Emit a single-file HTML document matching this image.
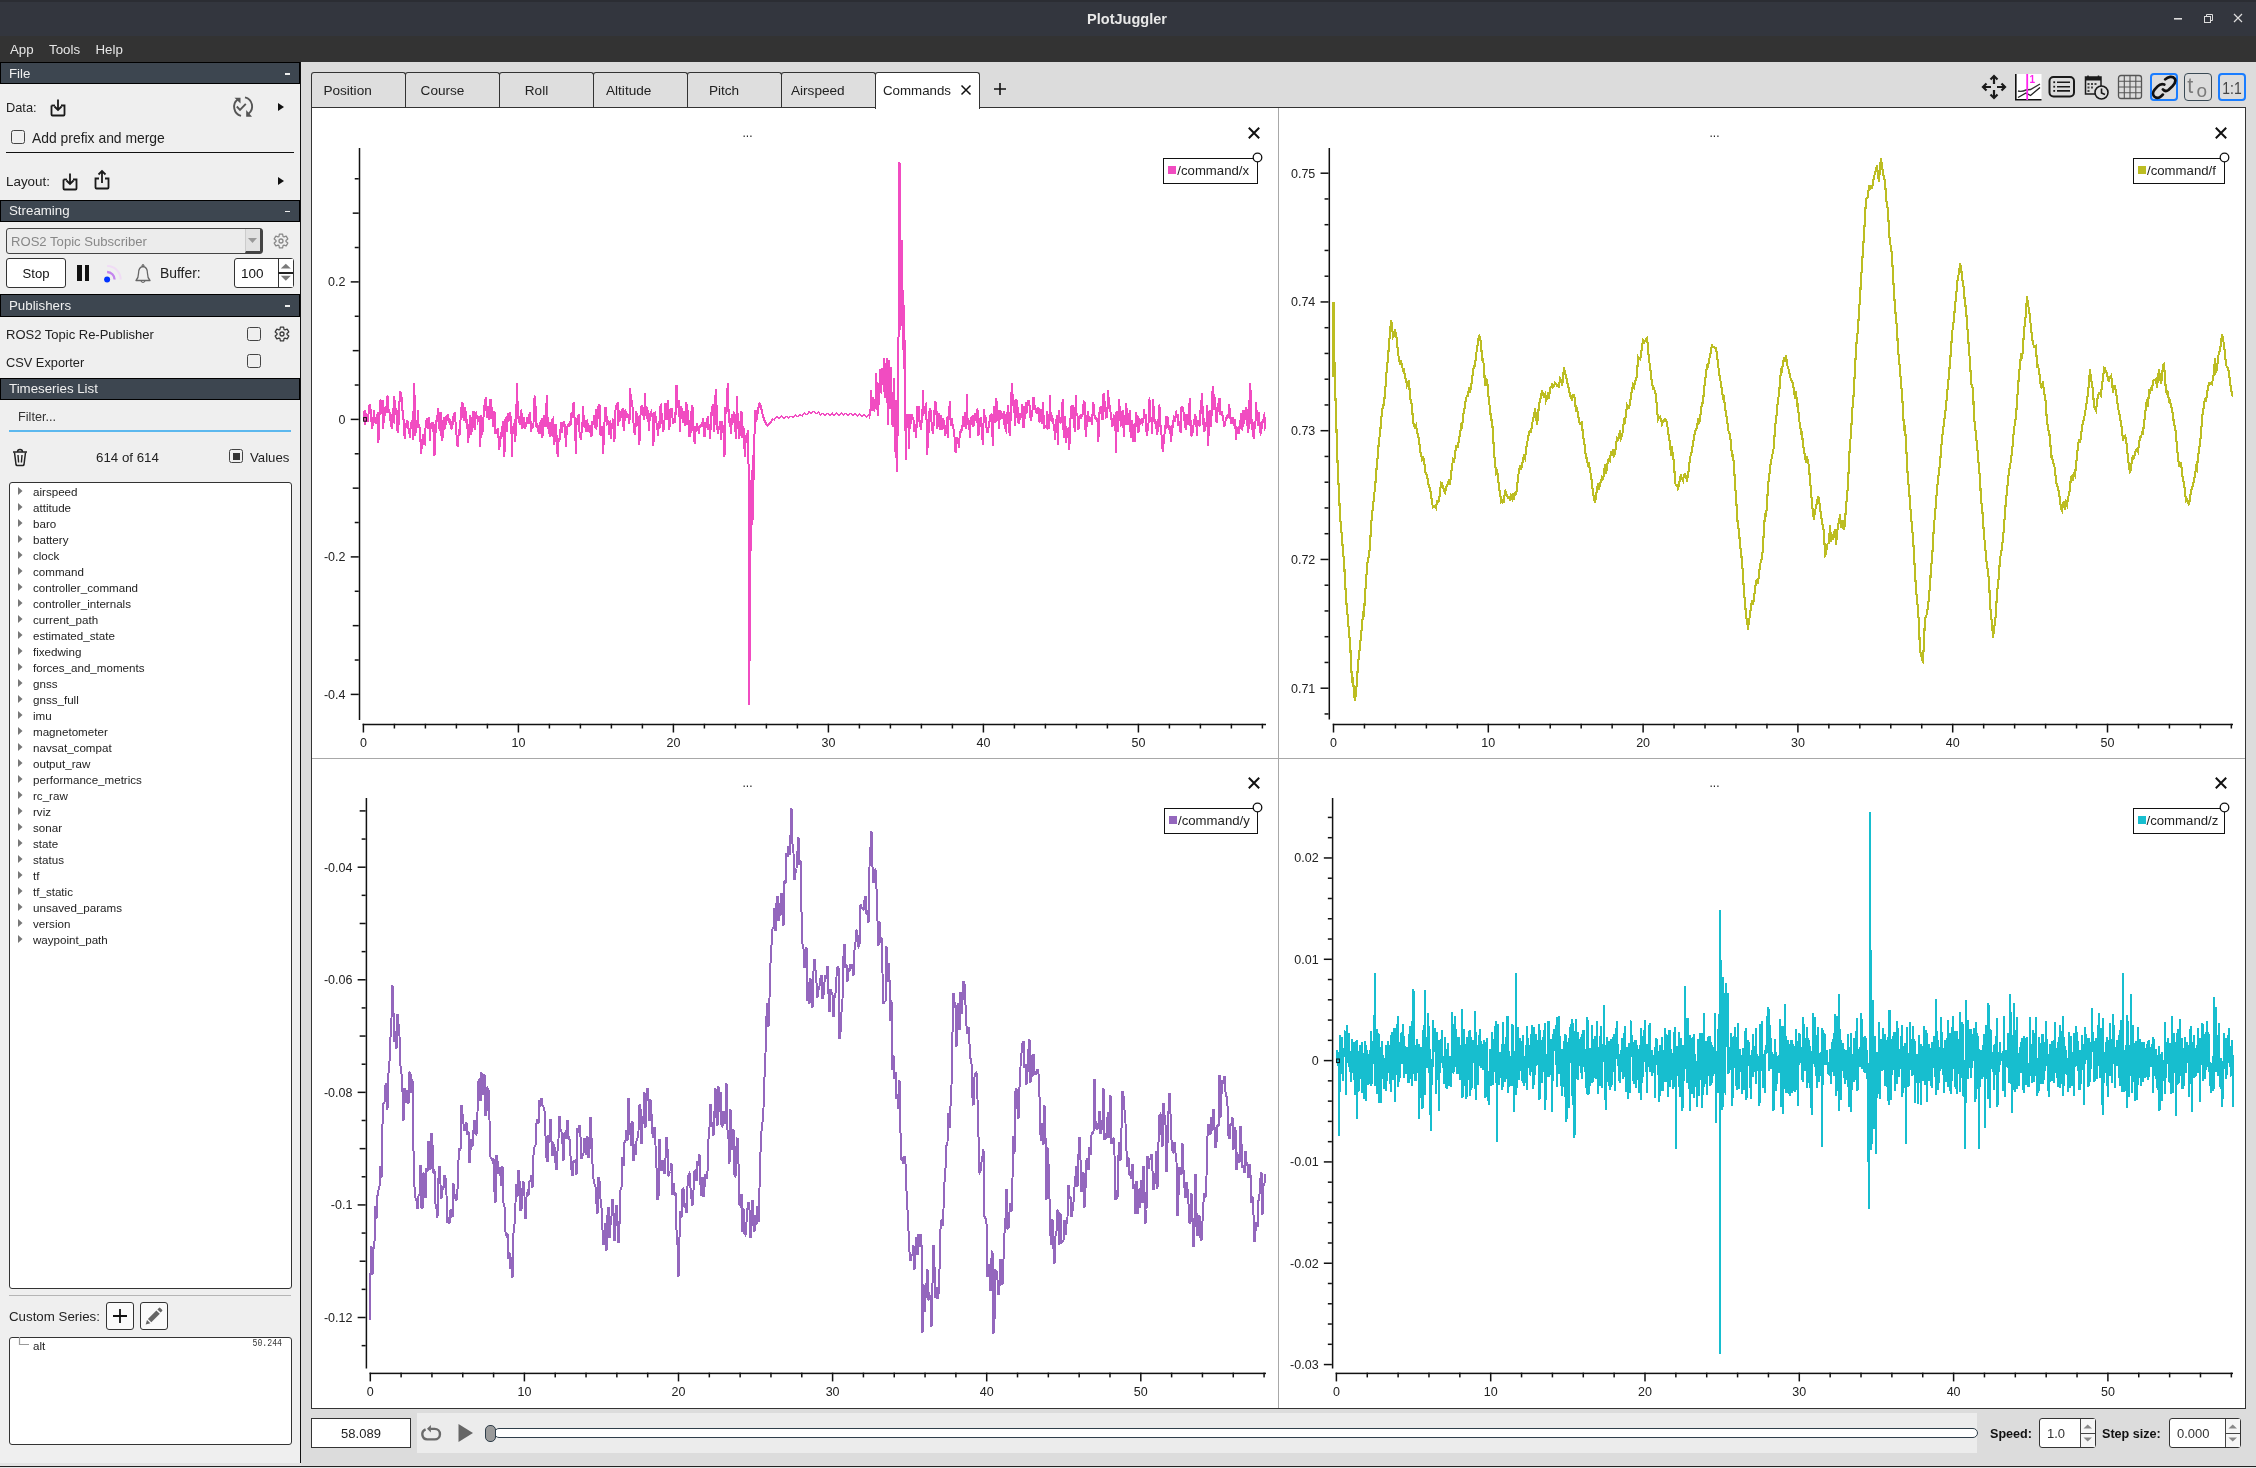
<!DOCTYPE html><html><head><meta charset="utf-8"><style>body{margin:0;width:2256px;height:1468px;overflow:hidden;position:relative;background:#dcdcdc;font-family:"Liberation Sans", sans-serif}div{box-sizing:border-box}</style></head><body><div style="position:absolute;left:0;top:0;width:2256px;height:1468px;overflow:hidden;will-change:transform">
<div style="position:absolute;left:0px;top:0px;width:2256px;height:36px;background:#33363e"></div>
<div style="position:absolute;left:0px;top:0px;width:2256px;height:2px;background:#2b2d33"></div>
<div style="position:absolute;left:827px;width:600px;text-align:center;top:9.92px;line-height:18.12px;font-size:14.5px;color:#e8e8e8;font-weight:700;white-space:pre;">PlotJuggler</div>
<svg style="position:absolute;left:2170px;top:10px;" width="80" height="18" viewBox="0 0 80 18"><rect x="4" y="8" width="8" height="1.6" fill="#ddd"/><rect x="34.5" y="6.5" width="6" height="6" fill="none" stroke="#ddd" stroke-width="1"/><path d="M36.5 6.5 V4.5 H42.5 V10.5 H40.5" fill="none" stroke="#ddd" stroke-width="1"/><path d="M64 4 L72 12 M72 4 L64 12" stroke="#ddd" stroke-width="1.2"/></svg>
<div style="position:absolute;left:0px;top:36px;width:2256px;height:26px;background:#333333"></div>
<div style="position:absolute;left:10px;top:41.58px;line-height:16.62px;font-size:13.3px;color:#e6e6e6;font-weight:400;white-space:pre;">App</div>
<div style="position:absolute;left:49px;top:41.58px;line-height:16.62px;font-size:13.3px;color:#e6e6e6;font-weight:400;white-space:pre;">Tools</div>
<div style="position:absolute;left:95.5px;top:41.58px;line-height:16.62px;font-size:13.3px;color:#e6e6e6;font-weight:400;white-space:pre;">Help</div>
<div style="position:absolute;left:0px;top:62px;width:301px;height:1404px;background:#efefef"></div>
<div style="position:absolute;left:299.8px;top:62px;width:1.4px;height:1401px;background:#111"></div>
<div style="position:absolute;left:0px;top:62px;width:300px;height:22px;background:#3d4650;border:1px solid #000"></div>
<div style="position:absolute;left:9px;top:65.58px;line-height:16.62px;font-size:13.3px;color:#f0f0f0;font-weight:400;white-space:pre;">File</div>
<div style="position:absolute;left:285px;top:73.3px;width:4.5px;height:1.3px;background:#eee"></div>
<div style="position:absolute;left:0px;top:199.5px;width:300px;height:22.5px;background:#3d4650;border:1px solid #000"></div>
<div style="position:absolute;left:9px;top:203.33px;line-height:16.62px;font-size:13.3px;color:#f0f0f0;font-weight:400;white-space:pre;">Streaming</div>
<div style="position:absolute;left:285px;top:211.05px;width:4.5px;height:1.3px;background:#eee"></div>
<div style="position:absolute;left:0px;top:293.5px;width:300px;height:23.0px;background:#3d4650;border:1px solid #000"></div>
<div style="position:absolute;left:9px;top:297.58px;line-height:16.62px;font-size:13.3px;color:#f0f0f0;font-weight:400;white-space:pre;">Publishers</div>
<div style="position:absolute;left:285px;top:305.3px;width:4.5px;height:1.3px;background:#eee"></div>
<div style="position:absolute;left:0px;top:377.5px;width:300px;height:22.5px;background:#3d4650;border:1px solid #000"></div>
<div style="position:absolute;left:9px;top:381.33px;line-height:16.62px;font-size:13.3px;color:#f0f0f0;font-weight:400;white-space:pre;">Timeseries List</div>
<div style="position:absolute;left:6px;top:100.06px;line-height:16.0px;font-size:12.8px;color:#222;font-weight:400;white-space:pre;">Data:</div>
<svg style="position:absolute;left:48px;top:98px;" width="20" height="20" viewBox="0 0 20 20"><path d="M3.5 7.5 V16.5 Q3.5 17.5 4.5 17.5 H15.5 Q16.5 17.5 16.5 16.5 V7.5 H13" fill="none" stroke="#1a1a1a" stroke-width="1.8"/><path d="M7 7.5 H3.5" stroke="#1a1a1a" stroke-width="1.8"/><path d="M10 1.5 V12 M6.5 8.5 L10 12 L13.5 8.5" fill="none" stroke="#1a1a1a" stroke-width="1.8"/></svg>
<svg style="position:absolute;left:231px;top:95px;" width="24" height="24" viewBox="0 0 24 24"><g fill="none" stroke="#555" stroke-width="1.9"><path d="M10 20.8 A9.3 9.3 0 0 1 7 4.3"/><path d="M14 2.3 A9.3 9.3 0 0 1 17.5 18.7"/><path d="M5.8 11.5 L9 14.8 L14.8 8.8"/></g><path d="M3.5 2.8 H9.5 V8.5 Z" fill="#555"/><path d="M15.2 15 V21.8 H21 Z" fill="#555"/></svg>
<svg style="position:absolute;left:278px;top:103px;" width="6" height="8" viewBox="0 0 6 8"><path d="M0 0 L6 4.0 L0 8 Z" fill="#111"/></svg>
<div style="position:absolute;left:11px;top:130px;width:14px;height:14px;border:1.2px solid #444;border-radius:2.5px;background:#efefef"></div>
<div style="position:absolute;left:32px;top:130.49px;line-height:17.38px;font-size:13.9px;color:#222;font-weight:400;white-space:pre;">Add prefix and merge</div>
<div style="position:absolute;left:6px;top:152px;width:288px;height:1.2px;background:#111"></div>
<div style="position:absolute;left:6px;top:173.98px;line-height:16.75px;font-size:13.4px;color:#222;font-weight:400;white-space:pre;">Layout:</div>
<svg style="position:absolute;left:60px;top:172px;" width="20" height="20" viewBox="0 0 20 20"><path d="M3.5 7.5 V16.5 Q3.5 17.5 4.5 17.5 H15.5 Q16.5 17.5 16.5 16.5 V7.5 H13" fill="none" stroke="#1a1a1a" stroke-width="1.8"/><path d="M7 7.5 H3.5" stroke="#1a1a1a" stroke-width="1.8"/><path d="M10 1.5 V12 M6.5 8.5 L10 12 L13.5 8.5" fill="none" stroke="#1a1a1a" stroke-width="1.8"/></svg>
<svg style="position:absolute;left:92px;top:169px;" width="20" height="22" viewBox="0 0 20 22"><path d="M7 9.5 H3.5 V18.5 Q3.5 19.5 4.5 19.5 H15.5 Q16.5 19.5 16.5 18.5 V9.5 H13" fill="none" stroke="#1a1a1a" stroke-width="1.8"/><path d="M10 14 V2 M6.5 5.5 L10 2 L13.5 5.5" fill="none" stroke="#1a1a1a" stroke-width="1.8"/></svg>
<svg style="position:absolute;left:278px;top:177px;" width="6" height="8" viewBox="0 0 6 8"><path d="M0 0 L6 4.0 L0 8 Z" fill="#111"/></svg>
<div style="position:absolute;left:6px;top:228px;width:257px;height:26px;border:1px solid #444;border-radius:3px;background:#ececec"></div>
<div style="position:absolute;left:245px;top:229px;width:17px;height:24px;background:#e2e2e2;border-left:1px solid #ccc;border-right:2px solid #444;border-bottom:2px solid #444"></div>
<svg style="position:absolute;left:248px;top:238px;" width="10" height="6" viewBox="0 0 10 6"><path d="M0 0 H9 L4.5 5 Z" fill="#999"/></svg>
<div style="position:absolute;left:11px;top:234.27px;line-height:16.38px;font-size:13.1px;color:#888;font-weight:400;white-space:pre;">ROS2 Topic Subscriber</div>
<svg style="position:absolute;left:273px;top:233px;" width="16" height="16" viewBox="0 0 16 16"><polygon points="5.97,3.43 6.40,1.08 9.60,1.08 10.03,3.43 10.94,3.95 13.19,3.16 14.79,5.92 12.97,7.48 12.97,8.52 14.79,10.08 13.19,12.84 10.94,12.05 10.03,12.57 9.60,14.92 6.40,14.92 5.97,12.57 5.06,12.05 2.81,12.84 1.21,10.08 3.03,8.52 3.03,7.48 1.21,5.92 2.81,3.16 5.06,3.95" fill="none" stroke="#888" stroke-width="1.25" stroke-linejoin="round"/><circle cx="8" cy="8" r="2.0" fill="none" stroke="#888" stroke-width="1.3"/></svg>
<div style="position:absolute;left:6px;top:258px;width:60px;height:30px;border:1px solid #333;border-radius:3px;background:#fff"></div>
<div style="position:absolute;left:-264px;width:600px;text-align:center;top:265.77px;line-height:16.38px;font-size:13.1px;color:#111;font-weight:400;white-space:pre;">Stop</div>
<div style="position:absolute;left:77px;top:265px;width:4.5px;height:16px;background:#111"></div>
<div style="position:absolute;left:84.5px;top:265px;width:4.5px;height:16px;background:#111"></div>
<svg style="position:absolute;left:100px;top:260px;" width="26" height="26" viewBox="0 0 26 26"><path d="M7.1 6 A13.5 13.5 0 0 1 20.7 19.5" fill="none" stroke="#f0dcf5" stroke-width="2"/><path d="M7.1 12 A7.5 7.5 0 0 1 14.6 19.5" fill="none" stroke="#c484ee" stroke-width="2.3"/><circle cx="7.1" cy="19.5" r="3" fill="#0033ff"/></svg>
<svg style="position:absolute;left:133px;top:261px;" width="20" height="24" viewBox="0 0 20 24"><path d="M3 19.5 Q5.5 17 5.5 12.5 Q5.5 6 10 5.5 Q14.5 6 14.5 12.5 Q14.5 17 17 19.5 Z" fill="none" stroke="#666" stroke-width="1.3" stroke-linejoin="round"/><path d="M8.8 5.3 Q10 2 11.2 5.3" fill="none" stroke="#666" stroke-width="1.1"/><path d="M8 20 Q10 23 12 20" fill="none" stroke="#666" stroke-width="1.2"/></svg>
<div style="position:absolute;left:160px;top:264.99px;line-height:17.38px;font-size:13.9px;color:#222;font-weight:400;white-space:pre;">Buffer:</div>
<div style="position:absolute;left:234px;top:258px;width:60px;height:30px;border:1px solid #333;border-radius:3px;background:#fff"></div>
<div style="position:absolute;left:278px;top:259px;width:15px;height:28px;background:#fff;border-left:1.2px solid #333"></div>
<div style="position:absolute;left:278px;top:272.0px;width:15px;height:2px;background:#222"></div>
<svg style="position:absolute;left:280px;top:262px;" width="12" height="22" viewBox="0 0 12 22"><path d="M0.8 6.6 L5.8 1.8 L10.8 6.6 Z" fill="#7a7a7a"/><path d="M0.8 13.8 L5.8 18.8 L10.8 13.8 Z" fill="#7a7a7a"/></svg>
<div style="position:absolute;left:241px;top:265.88px;line-height:16.88px;font-size:13.5px;color:#111;font-weight:400;white-space:pre;">100</div>
<div style="position:absolute;left:6px;top:327.37px;line-height:16.25px;font-size:13px;color:#222;font-weight:400;white-space:pre;">ROS2 Topic Re-Publisher</div>
<div style="position:absolute;left:247px;top:327px;width:14px;height:14px;border:1.2px solid #444;border-radius:2.5px;background:#efefef"></div>
<svg style="position:absolute;left:274px;top:326px;" width="16" height="16" viewBox="0 0 16 16"><polygon points="5.97,3.43 6.40,1.08 9.60,1.08 10.03,3.43 10.94,3.95 13.19,3.16 14.79,5.92 12.97,7.48 12.97,8.52 14.79,10.08 13.19,12.84 10.94,12.05 10.03,12.57 9.60,14.92 6.40,14.92 5.97,12.57 5.06,12.05 2.81,12.84 1.21,10.08 3.03,8.52 3.03,7.48 1.21,5.92 2.81,3.16 5.06,3.95" fill="none" stroke="#3a3a3a" stroke-width="1.25" stroke-linejoin="round"/><circle cx="8" cy="8" r="2.0" fill="none" stroke="#3a3a3a" stroke-width="1.3"/></svg>
<div style="position:absolute;left:6px;top:354.56px;line-height:16.0px;font-size:12.8px;color:#222;font-weight:400;white-space:pre;">CSV Exporter</div>
<div style="position:absolute;left:247px;top:354px;width:14px;height:14px;border:1.2px solid #444;border-radius:2.5px;background:#efefef"></div>
<div style="position:absolute;left:18px;top:409.66px;line-height:15.88px;font-size:12.7px;color:#333;font-weight:400;white-space:pre;">Filter...</div>
<div style="position:absolute;left:9px;top:429.5px;width:282px;height:2.2px;background:#5cb8ee"></div>
<svg style="position:absolute;left:11px;top:448px;" width="19" height="19" viewBox="0 0 19 19"><path d="M2 4 H16" stroke="#222" stroke-width="1.5"/><path d="M6.5 4 A2.5 2.5 0 0 1 11.5 4" fill="none" stroke="#222" stroke-width="1.4"/><path d="M3.5 4.5 L5 16.5 Q5.2 17.5 6.2 17.5 H11.8 Q12.8 17.5 13 16.5 L14.5 4.5" fill="none" stroke="#222" stroke-width="1.5"/><path d="M7 7 L7.6 14.5 M11 7 L10.4 14.5" stroke="#222" stroke-width="1.4"/></svg>
<div style="position:absolute;left:96px;top:450.08px;line-height:16.62px;font-size:13.3px;color:#222;font-weight:400;white-space:pre;">614 of 614</div>
<div style="position:absolute;left:229px;top:449px;width:14px;height:14px;border:1.2px solid #444;border-radius:2.5px;background:#efefef"></div>
<div style="position:absolute;left:232.5px;top:452.5px;width:7.5px;height:7.5px;background:#333"></div>
<div style="position:absolute;left:250px;top:450.18px;line-height:16.5px;font-size:13.2px;color:#222;font-weight:400;white-space:pre;">Values</div>
<div style="position:absolute;left:9px;top:482px;width:282.5px;height:807px;border:1.5px solid #333;border-radius:3px;background:#fff"></div>
<svg style="position:absolute;left:17.5px;top:487px;" width="5" height="8" viewBox="0 0 5 8"><path d="M0 0 L4.5 4 L0 8 Z" fill="#777"/></svg>
<div style="position:absolute;left:33px;top:484.73px;line-height:14.5px;font-size:11.6px;color:#222;font-weight:400;white-space:pre;">airspeed</div>
<svg style="position:absolute;left:17.5px;top:503px;" width="5" height="8" viewBox="0 0 5 8"><path d="M0 0 L4.5 4 L0 8 Z" fill="#777"/></svg>
<div style="position:absolute;left:33px;top:500.73px;line-height:14.5px;font-size:11.6px;color:#222;font-weight:400;white-space:pre;">attitude</div>
<svg style="position:absolute;left:17.5px;top:519px;" width="5" height="8" viewBox="0 0 5 8"><path d="M0 0 L4.5 4 L0 8 Z" fill="#777"/></svg>
<div style="position:absolute;left:33px;top:516.73px;line-height:14.5px;font-size:11.6px;color:#222;font-weight:400;white-space:pre;">baro</div>
<svg style="position:absolute;left:17.5px;top:535px;" width="5" height="8" viewBox="0 0 5 8"><path d="M0 0 L4.5 4 L0 8 Z" fill="#777"/></svg>
<div style="position:absolute;left:33px;top:532.73px;line-height:14.5px;font-size:11.6px;color:#222;font-weight:400;white-space:pre;">battery</div>
<svg style="position:absolute;left:17.5px;top:551px;" width="5" height="8" viewBox="0 0 5 8"><path d="M0 0 L4.5 4 L0 8 Z" fill="#777"/></svg>
<div style="position:absolute;left:33px;top:548.73px;line-height:14.5px;font-size:11.6px;color:#222;font-weight:400;white-space:pre;">clock</div>
<svg style="position:absolute;left:17.5px;top:567px;" width="5" height="8" viewBox="0 0 5 8"><path d="M0 0 L4.5 4 L0 8 Z" fill="#777"/></svg>
<div style="position:absolute;left:33px;top:564.73px;line-height:14.5px;font-size:11.6px;color:#222;font-weight:400;white-space:pre;">command</div>
<svg style="position:absolute;left:17.5px;top:583px;" width="5" height="8" viewBox="0 0 5 8"><path d="M0 0 L4.5 4 L0 8 Z" fill="#777"/></svg>
<div style="position:absolute;left:33px;top:580.73px;line-height:14.5px;font-size:11.6px;color:#222;font-weight:400;white-space:pre;">controller_command</div>
<svg style="position:absolute;left:17.5px;top:599px;" width="5" height="8" viewBox="0 0 5 8"><path d="M0 0 L4.5 4 L0 8 Z" fill="#777"/></svg>
<div style="position:absolute;left:33px;top:596.73px;line-height:14.5px;font-size:11.6px;color:#222;font-weight:400;white-space:pre;">controller_internals</div>
<svg style="position:absolute;left:17.5px;top:615px;" width="5" height="8" viewBox="0 0 5 8"><path d="M0 0 L4.5 4 L0 8 Z" fill="#777"/></svg>
<div style="position:absolute;left:33px;top:612.73px;line-height:14.5px;font-size:11.6px;color:#222;font-weight:400;white-space:pre;">current_path</div>
<svg style="position:absolute;left:17.5px;top:631px;" width="5" height="8" viewBox="0 0 5 8"><path d="M0 0 L4.5 4 L0 8 Z" fill="#777"/></svg>
<div style="position:absolute;left:33px;top:628.73px;line-height:14.5px;font-size:11.6px;color:#222;font-weight:400;white-space:pre;">estimated_state</div>
<svg style="position:absolute;left:17.5px;top:647px;" width="5" height="8" viewBox="0 0 5 8"><path d="M0 0 L4.5 4 L0 8 Z" fill="#777"/></svg>
<div style="position:absolute;left:33px;top:644.73px;line-height:14.5px;font-size:11.6px;color:#222;font-weight:400;white-space:pre;">fixedwing</div>
<svg style="position:absolute;left:17.5px;top:663px;" width="5" height="8" viewBox="0 0 5 8"><path d="M0 0 L4.5 4 L0 8 Z" fill="#777"/></svg>
<div style="position:absolute;left:33px;top:660.73px;line-height:14.5px;font-size:11.6px;color:#222;font-weight:400;white-space:pre;">forces_and_moments</div>
<svg style="position:absolute;left:17.5px;top:679px;" width="5" height="8" viewBox="0 0 5 8"><path d="M0 0 L4.5 4 L0 8 Z" fill="#777"/></svg>
<div style="position:absolute;left:33px;top:676.73px;line-height:14.5px;font-size:11.6px;color:#222;font-weight:400;white-space:pre;">gnss</div>
<svg style="position:absolute;left:17.5px;top:695px;" width="5" height="8" viewBox="0 0 5 8"><path d="M0 0 L4.5 4 L0 8 Z" fill="#777"/></svg>
<div style="position:absolute;left:33px;top:692.73px;line-height:14.5px;font-size:11.6px;color:#222;font-weight:400;white-space:pre;">gnss_full</div>
<svg style="position:absolute;left:17.5px;top:711px;" width="5" height="8" viewBox="0 0 5 8"><path d="M0 0 L4.5 4 L0 8 Z" fill="#777"/></svg>
<div style="position:absolute;left:33px;top:708.73px;line-height:14.5px;font-size:11.6px;color:#222;font-weight:400;white-space:pre;">imu</div>
<svg style="position:absolute;left:17.5px;top:727px;" width="5" height="8" viewBox="0 0 5 8"><path d="M0 0 L4.5 4 L0 8 Z" fill="#777"/></svg>
<div style="position:absolute;left:33px;top:724.73px;line-height:14.5px;font-size:11.6px;color:#222;font-weight:400;white-space:pre;">magnetometer</div>
<svg style="position:absolute;left:17.5px;top:743px;" width="5" height="8" viewBox="0 0 5 8"><path d="M0 0 L4.5 4 L0 8 Z" fill="#777"/></svg>
<div style="position:absolute;left:33px;top:740.73px;line-height:14.5px;font-size:11.6px;color:#222;font-weight:400;white-space:pre;">navsat_compat</div>
<svg style="position:absolute;left:17.5px;top:759px;" width="5" height="8" viewBox="0 0 5 8"><path d="M0 0 L4.5 4 L0 8 Z" fill="#777"/></svg>
<div style="position:absolute;left:33px;top:756.73px;line-height:14.5px;font-size:11.6px;color:#222;font-weight:400;white-space:pre;">output_raw</div>
<svg style="position:absolute;left:17.5px;top:775px;" width="5" height="8" viewBox="0 0 5 8"><path d="M0 0 L4.5 4 L0 8 Z" fill="#777"/></svg>
<div style="position:absolute;left:33px;top:772.73px;line-height:14.5px;font-size:11.6px;color:#222;font-weight:400;white-space:pre;">performance_metrics</div>
<svg style="position:absolute;left:17.5px;top:791px;" width="5" height="8" viewBox="0 0 5 8"><path d="M0 0 L4.5 4 L0 8 Z" fill="#777"/></svg>
<div style="position:absolute;left:33px;top:788.73px;line-height:14.5px;font-size:11.6px;color:#222;font-weight:400;white-space:pre;">rc_raw</div>
<svg style="position:absolute;left:17.5px;top:807px;" width="5" height="8" viewBox="0 0 5 8"><path d="M0 0 L4.5 4 L0 8 Z" fill="#777"/></svg>
<div style="position:absolute;left:33px;top:804.73px;line-height:14.5px;font-size:11.6px;color:#222;font-weight:400;white-space:pre;">rviz</div>
<svg style="position:absolute;left:17.5px;top:823px;" width="5" height="8" viewBox="0 0 5 8"><path d="M0 0 L4.5 4 L0 8 Z" fill="#777"/></svg>
<div style="position:absolute;left:33px;top:820.73px;line-height:14.5px;font-size:11.6px;color:#222;font-weight:400;white-space:pre;">sonar</div>
<svg style="position:absolute;left:17.5px;top:839px;" width="5" height="8" viewBox="0 0 5 8"><path d="M0 0 L4.5 4 L0 8 Z" fill="#777"/></svg>
<div style="position:absolute;left:33px;top:836.73px;line-height:14.5px;font-size:11.6px;color:#222;font-weight:400;white-space:pre;">state</div>
<svg style="position:absolute;left:17.5px;top:855px;" width="5" height="8" viewBox="0 0 5 8"><path d="M0 0 L4.5 4 L0 8 Z" fill="#777"/></svg>
<div style="position:absolute;left:33px;top:852.73px;line-height:14.5px;font-size:11.6px;color:#222;font-weight:400;white-space:pre;">status</div>
<svg style="position:absolute;left:17.5px;top:871px;" width="5" height="8" viewBox="0 0 5 8"><path d="M0 0 L4.5 4 L0 8 Z" fill="#777"/></svg>
<div style="position:absolute;left:33px;top:868.73px;line-height:14.5px;font-size:11.6px;color:#222;font-weight:400;white-space:pre;">tf</div>
<svg style="position:absolute;left:17.5px;top:887px;" width="5" height="8" viewBox="0 0 5 8"><path d="M0 0 L4.5 4 L0 8 Z" fill="#777"/></svg>
<div style="position:absolute;left:33px;top:884.73px;line-height:14.5px;font-size:11.6px;color:#222;font-weight:400;white-space:pre;">tf_static</div>
<svg style="position:absolute;left:17.5px;top:903px;" width="5" height="8" viewBox="0 0 5 8"><path d="M0 0 L4.5 4 L0 8 Z" fill="#777"/></svg>
<div style="position:absolute;left:33px;top:900.73px;line-height:14.5px;font-size:11.6px;color:#222;font-weight:400;white-space:pre;">unsaved_params</div>
<svg style="position:absolute;left:17.5px;top:919px;" width="5" height="8" viewBox="0 0 5 8"><path d="M0 0 L4.5 4 L0 8 Z" fill="#777"/></svg>
<div style="position:absolute;left:33px;top:916.73px;line-height:14.5px;font-size:11.6px;color:#222;font-weight:400;white-space:pre;">version</div>
<svg style="position:absolute;left:17.5px;top:935px;" width="5" height="8" viewBox="0 0 5 8"><path d="M0 0 L4.5 4 L0 8 Z" fill="#777"/></svg>
<div style="position:absolute;left:33px;top:932.73px;line-height:14.5px;font-size:11.6px;color:#222;font-weight:400;white-space:pre;">waypoint_path</div>
<div style="position:absolute;left:9px;top:1294.5px;width:282px;height:1px;background:#b5b5b5"></div>
<div style="position:absolute;left:9px;top:1309.08px;line-height:16.62px;font-size:13.3px;color:#222;font-weight:400;white-space:pre;">Custom Series:</div>
<div style="position:absolute;left:106px;top:1302px;width:28px;height:28px;border:1px solid #333;border-radius:3px;background:#fafafa"></div>
<svg style="position:absolute;left:106px;top:1302px;" width="28" height="28" viewBox="0 0 28 28"><path d="M14 7 V21 M7 14 H21" stroke="#111" stroke-width="1.8"/></svg>
<div style="position:absolute;left:140px;top:1302px;width:28px;height:28px;border:1px solid #333;border-radius:3px;background:#fafafa"></div>
<svg style="position:absolute;left:140px;top:1302px;" width="28" height="28" viewBox="0 0 28 28"><path d="M5.7 22.6 L7.0 17.9 L10.4 21.3 Z" fill="#666"/><path d="M7.9 16.9 L16.4 8.4 L19.8 11.8 L11.3 20.3 Z" fill="#666"/><path d="M17.4 7.4 L18.9 5.9 Q19.6 5.2 20.3 5.9 L22.1 7.7 Q22.8 8.4 22.1 9.1 L20.6 10.6 Z" fill="#666"/></svg>
<div style="position:absolute;left:9px;top:1336.5px;width:282.5px;height:108px;border:1.5px solid #333;border-radius:3px;background:#fff"></div>
<svg style="position:absolute;left:18px;top:1337px;" width="14" height="9" viewBox="0 0 14 9"><path d="M1.5 0 V7.5 H11" fill="none" stroke="#999" stroke-width="1.2"/></svg>
<div style="position:absolute;left:33px;top:1338.73px;line-height:14.5px;font-size:11.6px;color:#222;font-weight:400;white-space:pre;">alt</div>
<div style="position:absolute;left:222px;top:1336.5px;width:60px;text-align:right;font-family:'Liberation Mono',monospace;font-size:10.5px;color:#3a3a3a;line-height:12px;transform:scaleX(0.78);transform-origin:right center">50.244</div>
<div style="position:absolute;left:0px;top:1463px;width:301px;height:3px;background:#e4e4e4"></div>
<div style="position:absolute;left:0px;top:1465.7px;width:2256px;height:1.5px;background:#222"></div>
<div style="position:absolute;left:0px;top:1467.2px;width:2256px;height:1px;background:#e6e6e6"></div>
<div style="position:absolute;left:311px;top:72px;width:95px;height:36px;background:#dedede;border:1.5px solid #333;border-bottom:none;border-radius:3px 3px 0 0"></div>
<div style="position:absolute;left:323.4px;top:81.79px;line-height:17.0px;font-size:13.6px;color:#222;font-weight:400;white-space:pre;">Position</div>
<div style="position:absolute;left:405px;top:72px;width:95px;height:36px;background:#dedede;border:1.5px solid #333;border-bottom:none;border-radius:3px 3px 0 0"></div>
<div style="position:absolute;left:420.6px;top:81.79px;line-height:17.0px;font-size:13.6px;color:#222;font-weight:400;white-space:pre;">Course</div>
<div style="position:absolute;left:499px;top:72px;width:95px;height:36px;background:#dedede;border:1.5px solid #333;border-bottom:none;border-radius:3px 3px 0 0"></div>
<div style="position:absolute;left:524.8px;top:81.79px;line-height:17.0px;font-size:13.6px;color:#222;font-weight:400;white-space:pre;">Roll</div>
<div style="position:absolute;left:593px;top:72px;width:95px;height:36px;background:#dedede;border:1.5px solid #333;border-bottom:none;border-radius:3px 3px 0 0"></div>
<div style="position:absolute;left:606px;top:81.79px;line-height:17.0px;font-size:13.6px;color:#222;font-weight:400;white-space:pre;">Altitude</div>
<div style="position:absolute;left:687px;top:72px;width:95px;height:36px;background:#dedede;border:1.5px solid #333;border-bottom:none;border-radius:3px 3px 0 0"></div>
<div style="position:absolute;left:708.9px;top:81.79px;line-height:17.0px;font-size:13.6px;color:#222;font-weight:400;white-space:pre;">Pitch</div>
<div style="position:absolute;left:781px;top:72px;width:95px;height:36px;background:#dedede;border:1.5px solid #333;border-bottom:none;border-radius:3px 3px 0 0"></div>
<div style="position:absolute;left:791px;top:81.79px;line-height:17.0px;font-size:13.6px;color:#222;font-weight:400;white-space:pre;">Airspeed</div>
<div style="position:absolute;left:311px;top:107px;width:1935px;height:1302px;border:1.5px solid #333;background:#fff"></div>
<div style="position:absolute;left:875px;top:72px;width:104.5px;height:37px;background:#fff;border:1.5px solid #333;border-bottom:none;border-radius:3px 3px 0 0"></div>
<div style="position:absolute;left:883px;top:83.08px;line-height:16.62px;font-size:13.3px;color:#222;font-weight:400;white-space:pre;">Commands</div>
<svg style="position:absolute;left:960px;top:84px;" width="12" height="12" viewBox="0 0 12 12"><path d="M1.5 1.5 L10.5 10.5 M10.5 1.5 L1.5 10.5" stroke="#111" stroke-width="1.5"/></svg>
<svg style="position:absolute;left:993px;top:82px;" width="14" height="14" viewBox="0 0 14 14"><path d="M7 1 V13 M1 7 H13" stroke="#111" stroke-width="1.6"/></svg>
<div style="position:absolute;left:1278px;top:108px;width:1px;height:1300px;background:#a8a8a8"></div>
<div style="position:absolute;left:312px;top:758px;width:1933px;height:1px;background:#a8a8a8"></div>
<svg style="position:absolute;left:0;top:0" width="2256" height="1468"><rect x="358.75" y="148" width="1.5" height="572" fill="#111"/><rect x="350.75" y="693.65" width="8" height="1.5" fill="#111"/><rect x="354.75" y="659.27" width="4" height="1.5" fill="#111"/><rect x="352.75" y="624.90" width="6" height="1.5" fill="#111"/><rect x="354.75" y="590.52" width="4" height="1.5" fill="#111"/><rect x="350.75" y="556.15" width="8" height="1.5" fill="#111"/><rect x="354.75" y="521.77" width="4" height="1.5" fill="#111"/><rect x="352.75" y="487.40" width="6" height="1.5" fill="#111"/><rect x="354.75" y="453.02" width="4" height="1.5" fill="#111"/><rect x="350.75" y="418.65" width="8" height="1.5" fill="#111"/><rect x="354.75" y="384.27" width="4" height="1.5" fill="#111"/><rect x="352.75" y="349.90" width="6" height="1.5" fill="#111"/><rect x="354.75" y="315.52" width="4" height="1.5" fill="#111"/><rect x="350.75" y="281.15" width="8" height="1.5" fill="#111"/><rect x="354.75" y="246.77" width="4" height="1.5" fill="#111"/><rect x="352.75" y="212.40" width="6" height="1.5" fill="#111"/><rect x="354.75" y="178.02" width="4" height="1.5" fill="#111"/><rect x="362.65" y="723.75" width="903.35" height="1.5" fill="#111"/><rect x="362.65" y="723.75" width="1.5" height="8.75" fill="#111"/><rect x="393.65" y="723.75" width="1.5" height="4.75" fill="#111"/><rect x="424.65" y="723.75" width="1.5" height="4.75" fill="#111"/><rect x="455.65" y="723.75" width="1.5" height="4.75" fill="#111"/><rect x="486.65" y="723.75" width="1.5" height="4.75" fill="#111"/><rect x="517.65" y="723.75" width="1.5" height="8.75" fill="#111"/><rect x="548.65" y="723.75" width="1.5" height="4.75" fill="#111"/><rect x="579.65" y="723.75" width="1.5" height="4.75" fill="#111"/><rect x="610.65" y="723.75" width="1.5" height="4.75" fill="#111"/><rect x="641.65" y="723.75" width="1.5" height="4.75" fill="#111"/><rect x="672.65" y="723.75" width="1.5" height="8.75" fill="#111"/><rect x="703.65" y="723.75" width="1.5" height="4.75" fill="#111"/><rect x="734.65" y="723.75" width="1.5" height="4.75" fill="#111"/><rect x="765.65" y="723.75" width="1.5" height="4.75" fill="#111"/><rect x="796.65" y="723.75" width="1.5" height="4.75" fill="#111"/><rect x="827.65" y="723.75" width="1.5" height="8.75" fill="#111"/><rect x="858.65" y="723.75" width="1.5" height="4.75" fill="#111"/><rect x="889.65" y="723.75" width="1.5" height="4.75" fill="#111"/><rect x="920.65" y="723.75" width="1.5" height="4.75" fill="#111"/><rect x="951.65" y="723.75" width="1.5" height="4.75" fill="#111"/><rect x="982.65" y="723.75" width="1.5" height="8.75" fill="#111"/><rect x="1013.65" y="723.75" width="1.5" height="4.75" fill="#111"/><rect x="1044.65" y="723.75" width="1.5" height="4.75" fill="#111"/><rect x="1075.65" y="723.75" width="1.5" height="4.75" fill="#111"/><rect x="1106.65" y="723.75" width="1.5" height="4.75" fill="#111"/><rect x="1137.65" y="723.75" width="1.5" height="8.75" fill="#111"/><rect x="1168.65" y="723.75" width="1.5" height="4.75" fill="#111"/><rect x="1199.65" y="723.75" width="1.5" height="4.75" fill="#111"/><rect x="1230.65" y="723.75" width="1.5" height="4.75" fill="#111"/><rect x="1261.65" y="723.75" width="1.5" height="4.75" fill="#111"/><polyline points="363.5,420.9 364.1,417.8 364.6,409.6 365.2,424.8 365.7,420.7 366.3,413.1 366.8,419.5 367.4,419.6 367.9,421.4 368.5,414.3 369.0,407.2 369.6,407.7 370.1,404.5 370.7,411.6 371.2,414.7 371.8,428.5 372.3,417.5 372.9,426.3 373.4,420.8 374.0,410.3 374.5,420.7 375.1,419.7 375.6,416.9 376.2,422.7 376.7,423.8 377.3,415.6 377.8,412.3 378.4,443.2 378.9,428.7 379.5,415.6 380.0,401.1 380.6,400.4 381.1,404.4 381.7,413.7 382.2,412.2 382.8,400.5 383.3,428.7 383.9,411.8 384.4,417.1 385.0,409.6 385.5,407.7 386.1,408.5 386.6,413.3 387.2,397.2 387.7,395.6 388.3,411.4 388.8,410.2 389.4,409.8 389.9,421.3 390.5,413.6 391.0,424.2 391.6,423.0 392.1,428.9 392.7,408.2 393.2,420.5 393.8,421.4 394.3,396.3 394.9,407.6 395.4,406.9 396.0,415.0 396.5,409.6 397.1,422.1 397.6,432.7 398.2,426.9 398.7,423.1 399.3,408.3 399.8,392.7 400.4,391.0 400.9,394.9 401.5,396.5 402.0,405.9 402.6,411.6 403.1,410.2 403.7,423.6 404.2,432.6 404.8,438.6 405.3,431.0 405.9,423.6 406.4,425.7 407.0,420.5 407.5,421.8 408.1,421.8 408.6,430.7 409.2,427.8 409.7,438.1 410.3,430.0 410.8,427.5 411.4,422.2 411.9,419.9 412.5,429.1 413.0,439.9 413.6,406.5 414.1,382.8 414.7,399.6 415.2,435.6 415.8,431.0 416.3,423.0 416.9,421.8 417.4,422.5 418.0,410.0 418.5,427.5 419.1,424.1 419.6,427.7 420.2,432.2 420.7,448.1 421.3,453.7 421.8,441.8 422.4,440.0 422.9,434.5 423.5,443.8 424.0,443.5 424.6,444.0 425.1,435.2 425.7,424.8 426.2,422.1 426.8,418.5 427.3,421.0 427.9,424.3 428.4,429.2 429.0,417.0 429.5,427.6 430.1,440.9 430.6,425.1 431.2,423.8 431.7,425.3 432.3,426.8 432.8,432.4 433.4,422.4 433.9,429.6 434.5,455.9 435.0,444.4 435.6,431.6 436.1,424.1 436.7,418.4 437.2,421.9 437.8,408.0 438.3,414.0 438.9,417.1 439.4,428.1 440.0,430.5 440.5,411.6 441.1,426.6 441.6,438.3 442.2,440.6 442.7,436.9 443.3,423.4 443.8,416.7 444.4,430.3 444.9,423.5 445.5,417.1 446.0,424.6 446.6,415.0 447.1,416.3 447.7,414.2 448.2,419.4 448.8,422.8 449.3,417.8 449.9,420.7 450.4,425.0 451.0,421.1 451.5,428.8 452.1,428.2 452.6,423.7 453.2,420.8 453.7,413.2 454.3,414.8 454.8,411.7 455.4,420.8 455.9,425.1 456.5,434.7 457.0,438.0 457.6,446.6 458.1,439.3 458.7,434.2 459.2,430.8 459.8,431.8 460.3,424.5 460.9,411.0 461.4,406.8 462.0,413.0 462.5,402.5 463.1,415.2 463.6,417.9 464.2,421.0 464.7,407.3 465.3,409.7 465.8,412.7 466.4,422.9 466.9,419.3 467.5,429.3 468.0,442.6 468.6,436.7 469.1,432.7 469.7,420.0 470.2,415.6 470.8,417.7 471.3,434.8 471.9,425.3 472.4,422.5 473.0,417.7 473.5,410.9 474.1,416.8 474.6,429.7 475.2,418.1 475.7,413.8 476.3,413.1 476.8,419.3 477.4,417.9 477.9,421.4 478.5,420.1 479.0,419.1 479.6,416.0 480.1,446.7 480.7,414.7 481.2,438.0 481.8,425.6 482.3,435.3 482.9,426.5 483.4,419.8 484.0,407.4 484.5,405.2 485.1,405.8 485.6,397.2 486.2,406.9 486.7,414.0 487.3,417.6 487.8,410.8 488.4,405.7 488.9,413.3 489.5,420.1 490.0,398.8 490.6,409.3 491.1,399.1 491.7,409.8 492.2,411.0 492.8,426.6 493.3,425.4 493.9,423.8 494.4,411.4 495.0,413.7 495.5,433.7 496.1,429.9 496.6,430.6 497.2,431.5 497.7,428.0 498.3,433.9 498.8,443.2 499.4,449.6 499.9,436.2 500.5,438.8 501.0,437.1 501.6,431.4 502.1,436.6 502.7,421.6 503.2,422.7 503.8,440.2 504.3,457.4 504.9,440.8 505.4,420.2 506.0,416.9 506.5,426.7 507.1,432.1 507.6,413.0 508.2,416.5 508.7,420.6 509.3,420.4 509.8,411.8 510.4,413.9 510.9,422.9 511.5,434.4 512.0,456.8 512.6,430.1 513.1,427.6 513.7,426.0 514.2,427.9 514.8,418.7 515.3,441.9 515.9,424.0 516.4,408.8 517.0,383.4 517.5,400.5 518.1,418.6 518.6,416.5 519.2,419.8 519.7,424.6 520.3,422.3 520.8,409.7 521.4,411.1 521.9,418.8 522.5,428.6 523.0,420.7 523.6,422.6 524.1,417.2 524.7,428.6 525.2,423.1 525.8,426.4 526.3,424.9 526.9,416.8 527.4,422.7 528.0,422.0 528.5,422.0 529.1,424.2 529.6,412.2 530.2,419.9 530.7,422.5 531.3,432.3 531.8,425.2 532.4,424.9 532.9,427.8 533.5,423.3 534.0,404.8 534.6,396.6 535.1,397.2 535.7,409.5 536.2,427.4 536.8,426.1 537.3,424.8 537.9,426.2 538.4,431.5 539.0,432.5 539.5,434.2 540.1,422.5 540.6,423.6 541.2,424.9 541.7,418.1 542.3,437.6 542.8,433.3 543.4,427.6 543.9,426.3 544.5,414.6 545.0,424.5 545.6,426.8 546.1,424.7 546.7,394.6 547.2,412.8 547.8,420.4 548.3,428.6 548.9,429.8 549.4,434.2 550.0,422.5 550.5,436.6 551.1,428.7 551.6,424.3 552.2,420.0 552.7,419.2 553.3,436.4 553.8,437.9 554.4,445.0 554.9,432.3 555.5,424.0 556.0,433.6 556.6,435.5 557.1,444.1 557.7,457.4 558.2,440.7 558.8,439.6 559.3,442.0 559.9,436.4 560.4,431.2 561.0,422.1 561.5,433.2 562.1,425.3 562.6,423.7 563.2,422.4 563.7,422.1 564.3,425.5 564.8,424.1 565.4,434.7 565.9,447.3 566.5,435.0 567.0,428.3 567.6,425.4 568.1,424.7 568.7,424.2 569.2,427.3 569.8,420.6 570.3,426.0 570.9,422.6 571.4,413.8 572.0,412.0 572.5,417.8 573.1,410.0 573.6,402.3 574.2,405.7 574.7,423.2 575.3,432.4 575.8,454.0 576.4,426.4 576.9,419.8 577.5,418.7 578.0,420.2 578.6,413.9 579.1,419.3 579.7,437.1 580.2,435.9 580.8,439.6 581.3,435.9 581.9,427.5 582.4,426.4 583.0,406.5 583.5,414.4 584.1,425.3 584.6,424.9 585.2,420.4 585.7,432.3 586.3,423.9 586.8,420.8 587.4,420.6 587.9,431.5 588.5,428.3 589.0,429.3 589.6,425.1 590.1,428.3 590.7,431.4 591.2,436.9 591.8,435.5 592.3,421.2 592.9,423.8 593.4,422.7 594.0,418.5 594.5,414.7 595.1,427.6 595.6,428.1 596.2,408.6 596.7,426.4 597.3,425.0 597.8,410.7 598.4,406.8 598.9,407.0 599.5,404.2 600.0,427.9 600.6,435.9 601.1,430.2 601.7,431.5 602.2,425.9 602.8,429.2 603.3,454.3 603.9,427.7 604.4,423.4 605.0,415.7 605.5,406.9 606.1,412.4 606.6,416.5 607.2,422.9 607.7,421.8 608.3,421.2 608.8,427.5 609.4,434.5 609.9,420.7 610.5,422.7 611.0,438.6 611.6,426.5 612.1,423.2 612.7,428.5 613.2,420.1 613.8,420.8 614.3,441.6 614.9,434.7 615.4,411.6 616.0,405.2 616.5,408.3 617.1,409.8 617.6,402.0 618.2,425.6 618.7,420.3 619.3,410.1 619.8,421.2 620.4,416.3 620.9,413.1 621.5,413.7 622.0,417.4 622.6,407.9 623.1,416.8 623.7,431.2 624.2,417.3 624.8,418.3 625.3,409.6 625.9,413.1 626.4,414.0 627.0,414.1 627.5,417.5 628.1,415.7 628.6,417.1 629.2,424.2 629.7,418.2 630.3,388.0 630.8,402.2 631.4,398.5 631.9,404.0 632.5,406.4 633.0,415.8 633.6,423.8 634.1,428.1 634.7,435.4 635.2,431.0 635.8,422.7 636.3,411.2 636.9,416.3 637.4,423.9 638.0,426.0 638.5,416.0 639.1,444.8 639.6,440.5 640.2,430.1 640.7,406.5 641.3,410.2 641.8,407.7 642.4,405.0 642.9,415.0 643.5,415.5 644.0,419.7 644.6,409.4 645.1,393.5 645.7,412.0 646.2,412.8 646.8,418.6 647.3,407.4 647.9,415.4 648.4,420.2 649.0,431.3 649.5,421.1 650.1,414.7 650.6,412.7 651.2,411.6 651.7,417.3 652.3,414.3 652.8,414.0 653.4,446.1 653.9,429.0 654.5,418.9 655.0,411.6 655.6,417.4 656.1,415.9 656.7,426.1 657.2,424.1 657.8,436.1 658.3,425.5 658.9,421.0 659.4,428.5 660.0,426.9 660.5,405.9 661.1,405.1 661.6,414.6 662.2,416.0 662.7,428.1 663.3,432.1 663.8,428.1 664.4,425.0 664.9,402.6 665.5,408.9 666.0,413.5 666.6,419.8 667.1,407.8 667.7,400.3 668.2,405.8 668.8,412.9 669.3,429.8 669.9,420.7 670.4,419.1 671.0,411.0 671.5,408.1 672.1,415.7 672.6,418.5 673.2,423.9 673.7,417.8 674.3,420.0 674.8,422.6 675.4,412.0 675.9,414.8 676.5,385.1 677.0,397.6 677.6,402.8 678.1,405.8 678.7,404.6 679.2,400.5 679.8,432.2 680.3,425.1 680.9,406.1 681.4,409.0 682.0,407.7 682.5,418.4 683.1,423.2 683.6,416.5 684.2,410.9 684.7,426.4 685.3,414.5 685.8,414.1 686.4,402.1 686.9,410.4 687.5,425.1 688.0,409.7 688.6,422.0 689.1,437.0 689.7,431.0 690.2,436.6 690.8,428.7 691.3,411.0 691.9,413.1 692.4,404.9 693.0,415.2 693.5,430.7 694.1,429.7 694.6,444.4 695.2,425.7 695.7,431.8 696.3,430.6 696.8,422.9 697.4,430.9 697.9,426.1 698.5,427.9 699.0,434.0 699.6,424.7 700.1,427.2 700.7,426.8 701.2,425.4 701.8,422.5 702.3,424.8 702.9,417.7 703.4,426.5 704.0,424.8 704.5,437.4 705.1,422.2 705.6,425.9 706.2,426.3 706.7,423.6 707.3,420.6 707.8,415.8 708.4,429.9 708.9,427.8 709.5,424.2 710.0,438.5 710.6,429.2 711.1,417.2 711.7,410.3 712.2,407.6 712.8,404.2 713.3,407.2 713.9,431.6 714.4,427.2 715.0,415.1 715.5,394.9 716.1,388.6 716.6,408.1 717.2,424.1 717.7,434.0 718.3,429.3 718.8,426.6 719.4,429.6 719.9,425.0 720.5,420.8 721.0,439.9 721.6,426.6 722.1,421.4 722.7,426.6 723.2,426.7 723.8,438.5 724.3,457.4 724.9,449.8 725.4,406.6 726.0,410.9 726.5,412.0 727.1,410.9 727.6,382.9 728.2,398.8 728.7,415.1 729.3,422.5 729.8,418.6 730.4,424.5 730.9,434.2 731.5,422.1 732.0,413.6 732.6,422.7 733.1,421.8 733.7,418.5 734.2,413.7 734.8,414.7 735.3,428.3 735.9,438.5 736.4,429.8 737.0,395.9 737.5,412.9 738.1,417.2 738.6,431.3 739.2,439.4 739.7,434.0 740.3,426.8 740.8,413.3 741.4,410.8 741.9,416.0 742.5,438.0 743.0,434.2 743.6,428.5 744.1,429.4 744.7,457.4 745.2,444.7 745.8,442.2 746.3,436.0 746.9,433.6 747.4,442.5 748.0,430.0 748.6,470.0 749.0,560.0 749.4,705.0 749.8,560.0 750.2,480.0 750.6,551.0 751.0,500.0 751.4,540.0 751.8,492.0 752.2,470.0 752.6,520.0 753.0,455.0 753.6,480.0 754.2,440.0 754.8,428.0 755.5,410.0 756.2,422.2 756.8,418.7 757.3,415.2 757.9,411.6 758.4,408.2 759.0,405.2 759.5,403.6 760.1,404.0 760.6,405.7 761.2,408.0 761.7,410.3 762.3,412.6 762.8,414.9 763.4,417.1 763.9,419.1 764.5,420.6 765.0,421.8 765.6,422.9 766.1,423.9 766.7,424.8 767.2,425.5 767.8,425.6 768.3,425.3 768.9,424.6 769.4,423.8 770.0,423.1 770.5,422.3 771.1,421.5 771.6,420.8 772.2,420.1 772.7,419.5 773.3,419.7" fill="none" stroke="#f14cc1" stroke-width="2" stroke-linejoin="miter" shape-rendering="crispEdges"/><polyline points="772.7,419.5 773.3,419.7 773.8,419.8 774.4,419.9 774.9,419.1 775.5,418.3 776.0,417.4 776.6,416.6 777.1,416.4 777.7,417.1 778.2,417.6 778.8,418.2 779.3,418.2 779.9,417.9 780.4,417.3 781.0,416.8 781.5,416.0 782.1,416.6 782.6,417.2 783.2,417.8 783.7,418.1 784.3,417.9 784.8,417.3 785.4,416.7 785.9,416.4 786.5,416.5 787.0,416.9 787.6,417.4 788.1,418.0 788.7,418.0 789.2,417.4 789.8,416.8 790.3,416.4 790.9,416.1 791.4,416.4 792.0,416.8 792.5,417.1 793.1,417.5 793.6,416.9 794.2,416.4 794.7,415.8 795.3,415.0 795.8,415.5 796.4,415.9 796.9,416.5 797.5,416.6 798.0,416.5 798.6,415.9 799.1,415.2 799.7,414.9 800.2,414.4 800.8,415.0 801.3,415.4 801.9,415.7 802.4,415.9 803.0,414.9 803.5,414.3 804.1,413.8 804.6,412.9 805.2,413.6 805.7,413.9 806.3,414.2 806.8,414.7 807.4,413.9 807.9,413.2 808.5,412.7 809.0,411.6 809.6,412.0 810.1,412.4 810.7,412.8 811.2,413.3 811.8,413.0 812.3,412.4 812.9,411.8 813.4,411.3 814.0,411.4 814.5,412.1 815.1,412.8 815.6,413.3 816.2,413.7 816.7,413.3 817.3,412.9 817.8,412.6 818.4,412.1 818.9,412.8 819.5,413.4 820.0,414.0 820.6,415.0 821.1,414.3 821.7,413.9 822.2,413.6 822.8,413.3 823.3,413.5 823.9,414.0 824.4,414.7 825.0,415.4 825.5,415.3 826.1,414.8 826.6,414.2 827.2,413.6 827.7,413.6 828.3,414.0 828.8,414.5 829.4,414.9 829.9,415.4 830.5,414.9 831.0,414.3 831.6,413.9 832.1,413.1 832.7,413.8 833.2,414.3 833.8,414.9 834.3,415.3 834.9,415.1 835.4,414.4 836.0,413.9 836.5,413.2 837.1,413.4 837.6,414.0 838.2,414.5 838.7,414.9 839.3,415.1 839.8,414.4 840.4,414.0 840.9,413.3 841.5,413.1 842.0,413.7 842.6,414.2 843.1,414.7 843.7,415.1 844.2,414.6 844.8,414.0 845.3,413.4 845.9,413.2 846.4,413.6 847.0,414.1 847.5,414.7 848.1,415.4 848.6,415.0 849.2,414.5 849.7,414.0 850.3,413.8 850.8,413.6 851.4,414.3 851.9,414.8 852.5,415.5 853.0,415.7 853.6,415.1 854.1,414.7 854.7,414.0 855.2,413.8 855.8,414.5 856.3,415.0 856.9,415.7 857.4,416.5 858.0,415.8 858.5,415.2 859.1,414.8 859.6,414.2 860.2,414.8 860.7,415.2 861.3,415.7 861.8,416.3 862.4,416.1 862.9,415.7 863.5,415.4 864.0,414.9 864.6,414.7 865.1,415.4 865.7,416.0 866.2,416.5 866.8,416.9 867.3,416.4 867.9,415.9 868.4,415.4" fill="none" stroke="#f14cc1" stroke-width="1.4" stroke-linejoin="miter" shape-rendering="crispEdges"/><polyline points="867.9,415.9 868.4,415.4 869.0,414.8 869.5,416.3 870.1,413.1 870.6,408.8 871.2,390.2 871.7,404.4 872.3,411.1 872.8,397.3 873.4,405.8 873.9,411.3 874.5,409.3 875.0,400.1 875.6,399.7 876.1,372.9 876.7,386.5 877.2,403.1 877.8,416.2 878.3,391.1 878.9,404.8 879.4,386.5 880.0,369.5 880.5,392.2 881.1,392.4 881.6,369.1 882.2,369.1 882.7,384.5 883.3,374.4 883.8,391.9 884.4,358.5 884.9,397.6 885.5,372.3 886.0,390.6 886.6,357.8 887.1,402.9 887.7,391.1 888.2,425.2 888.8,361.3 889.3,359.9 889.9,404.5 890.4,409.3 891.0,367.0 891.5,407.8 892.1,416.8 892.6,426.8 893.2,408.6 893.7,383.1 894.3,378.0 894.8,451.8 895.4,424.7 895.8,400.0 896.4,455.0 897.0,472.0 897.6,430.0 898.2,380.0 898.8,300.0 899.3,162.0 899.8,165.0 900.4,330.0 901.0,290.0 901.6,240.0 902.2,300.0 902.8,350.0 903.4,290.0 904.0,369.0 904.6,340.0 905.2,400.0 905.8,460.0 906.4,430.0 907.5,413.6 908.0,426.1 908.6,419.2 909.1,449.1 909.7,414.2 910.2,428.5 910.8,420.7 911.3,415.7 911.9,415.4 912.4,419.5 913.0,416.7 913.5,419.9 914.1,431.6 914.6,425.3 915.2,423.8 915.7,429.4 916.3,438.2 916.8,414.7 917.4,406.2 917.9,410.4 918.5,406.0 919.0,416.8 919.6,422.8 920.1,420.2 920.7,429.8 921.2,428.5 921.8,418.4 922.3,421.0 922.9,389.7 923.4,414.3 924.0,413.4 924.5,412.8 925.1,411.4 925.6,404.5 926.2,403.9 926.7,428.5 927.3,454.9 927.8,437.6 928.4,436.9 928.9,422.0 929.5,411.6 930.0,410.0 930.6,412.4 931.1,410.5 931.7,427.9 932.2,430.4 932.8,423.0 933.3,433.8 933.9,410.0 934.4,417.8 935.0,402.7 935.5,401.6 936.1,412.5 936.6,411.2 937.2,428.5 937.7,426.2 938.3,423.6 938.8,417.1 939.4,412.8 939.9,429.5 940.5,424.9 941.0,415.2 941.6,427.3 942.1,429.6 942.7,421.5 943.2,417.9 943.8,421.3 944.3,425.3 944.9,435.8 945.4,433.4 946.0,424.8 946.5,426.2 947.1,417.4 947.6,438.0 948.2,434.4 948.7,405.9 949.3,409.7 949.8,400.9 950.4,418.5 950.9,424.8 951.5,424.8 952.0,417.7 952.6,426.5 953.1,426.0 953.7,430.9 954.2,434.3 954.8,439.0 955.3,451.7 955.9,453.2 956.4,442.4 957.0,436.9 957.5,443.6 958.1,439.1 958.6,443.7 959.2,447.6 959.7,432.4 960.3,432.0 960.8,431.0 961.4,432.6 961.9,427.4 962.5,425.0 963.0,416.1 963.6,427.0 964.1,424.2 964.7,412.4 965.2,421.1 965.8,429.3 966.3,426.8 966.9,394.0 967.4,416.9 968.0,420.7 968.5,424.4 969.1,420.4 969.6,432.3 970.2,437.9 970.7,418.1 971.3,417.9 971.8,416.8 972.4,416.5 972.9,425.7 973.5,425.4 974.0,424.2 974.6,413.3 975.1,420.0 975.7,417.5 976.2,419.9 976.8,422.4 977.3,408.6 977.9,412.8 978.4,435.7 979.0,432.1 979.5,425.3 980.1,425.8 980.6,417.0 981.2,425.3 981.7,426.1 982.3,437.0 982.8,444.5 983.4,427.8 983.9,408.8 984.5,415.8 985.0,420.8 985.6,417.0 986.1,418.0 986.7,432.9 987.2,428.6 987.8,433.0 988.3,428.1 988.9,426.5 989.4,423.0 990.0,415.3 990.5,418.3 991.1,415.5 991.6,414.6 992.2,420.3 992.7,446.0 993.3,423.2 993.8,407.6 994.4,406.3 994.9,417.2 995.5,423.4 996.0,398.3 996.6,401.5 997.1,419.4 997.7,409.8 998.2,412.7 998.8,428.5 999.3,420.6 999.9,418.8 1000.4,410.0 1001.0,416.2 1001.5,416.4 1002.1,419.2 1002.6,414.1 1003.2,416.2 1003.7,411.4 1004.3,424.7 1004.8,414.4 1005.4,428.9 1005.9,430.0 1006.5,424.4 1007.0,418.5 1007.6,411.1 1008.1,405.1 1008.7,415.2 1009.2,430.3 1009.8,435.4 1010.3,431.9 1010.9,400.8 1011.4,394.4 1012.0,383.1 1012.5,393.8 1013.1,406.4 1013.6,399.7 1014.2,411.1 1014.7,414.1 1015.3,425.6 1015.8,408.7 1016.4,399.2 1016.9,402.7 1017.5,407.0 1018.0,415.3 1018.6,424.2 1019.1,415.3 1019.7,412.7 1020.2,419.8 1020.8,416.9 1021.3,414.1 1021.9,412.6 1022.4,404.2 1023.0,415.7 1023.5,427.8 1024.1,423.2 1024.6,418.5 1025.2,412.9 1025.7,401.6 1026.3,413.7 1026.8,411.6 1027.4,407.1 1027.9,400.8 1028.5,400.6 1029.0,400.6 1029.6,406.1 1030.1,409.3 1030.7,421.0 1031.2,415.0 1031.8,411.1 1032.3,416.6 1032.9,397.2 1033.4,406.0 1034.0,397.4 1034.5,410.0 1035.1,404.9 1035.6,408.6 1036.2,410.9 1036.7,413.4 1037.3,408.3 1037.8,412.1 1038.4,407.6 1038.9,409.6 1039.5,421.2 1040.0,420.5 1040.6,420.2 1041.1,409.1 1041.7,423.7 1042.2,417.7 1042.8,402.2 1043.3,407.7 1043.9,427.5 1044.4,429.1 1045.0,424.8 1045.5,427.0 1046.1,426.8 1046.6,427.5 1047.2,411.5 1047.7,415.1 1048.3,428.3 1048.8,428.2 1049.4,426.4 1049.9,395.4 1050.5,411.4 1051.0,420.6 1051.6,417.5 1052.1,421.9 1052.7,418.4 1053.2,419.8 1053.8,428.0 1054.3,425.3 1054.9,440.2 1055.4,436.9 1056.0,419.4 1056.5,423.8 1057.1,416.1 1057.6,414.9 1058.2,445.3 1058.7,410.2 1059.3,416.0 1059.8,419.8 1060.4,419.1 1060.9,418.4 1061.5,423.4 1062.0,417.2 1062.6,399.4 1063.1,412.6 1063.7,437.8 1064.2,423.9 1064.8,418.2 1065.3,416.6 1065.9,443.0 1066.4,433.3 1067.0,430.0 1067.5,437.6 1068.1,429.1 1068.6,427.4 1069.2,450.0 1069.7,440.9 1070.3,418.8 1070.8,417.7 1071.4,406.2 1071.9,419.3 1072.5,404.9 1073.0,411.7 1073.6,406.6 1074.1,418.5 1074.7,431.9 1075.2,421.7 1075.8,394.8 1076.3,412.6 1076.9,414.1 1077.4,413.0 1078.0,429.0 1078.5,428.8 1079.1,426.5 1079.6,414.8 1080.2,416.4 1080.7,419.1 1081.3,414.9 1081.8,417.3 1082.4,413.9 1082.9,415.4 1083.5,404.1 1084.0,401.9 1084.6,402.4 1085.1,412.7 1085.7,437.1 1086.2,432.2 1086.8,422.8 1087.3,416.5 1087.9,411.4 1088.4,415.2 1089.0,420.8 1089.5,420.5 1090.1,417.1 1090.6,420.4 1091.2,417.2 1091.7,424.5 1092.3,414.9 1092.8,415.1 1093.4,402.3 1093.9,407.8 1094.5,415.0 1095.0,416.2 1095.6,419.9 1096.1,418.4 1096.7,418.7 1097.2,419.7 1097.8,424.1 1098.3,441.8 1098.9,428.2 1099.4,411.8 1100.0,413.3 1100.5,407.6 1101.1,405.8 1101.6,416.1 1102.2,419.2 1102.7,420.2 1103.3,396.0 1103.8,392.7 1104.4,400.0 1104.9,405.5 1105.5,412.1 1106.0,417.5 1106.6,417.0 1107.1,412.1 1107.7,404.5 1108.2,390.3 1108.8,403.7 1109.3,408.9 1109.9,405.4 1110.4,410.9 1111.0,418.5 1111.5,418.5 1112.1,426.8 1112.6,425.4 1113.2,422.1 1113.7,415.4 1114.3,415.9 1114.8,426.4 1115.4,424.4 1115.9,452.9 1116.5,412.1 1117.0,410.8 1117.6,429.1 1118.1,431.8 1118.7,416.4 1119.2,399.4 1119.8,411.4 1120.3,412.6 1120.9,424.8 1121.4,424.1 1122.0,410.7 1122.5,415.6 1123.1,410.5 1123.6,431.9 1124.2,436.9 1124.7,417.0 1125.3,425.0 1125.8,402.6 1126.4,411.9 1126.9,408.3 1127.5,424.9 1128.0,422.7 1128.6,425.2 1129.1,418.1 1129.7,410.5 1130.2,427.9 1130.8,435.2 1131.3,437.7 1131.9,428.2 1132.4,419.7 1133.0,442.2 1133.5,431.3 1134.1,425.3 1134.6,424.6 1135.2,442.0 1135.7,417.8 1136.3,412.3 1136.8,425.9 1137.4,415.0 1137.9,419.9 1138.5,432.6 1139.0,418.9 1139.6,420.0 1140.1,425.3 1140.7,422.4 1141.2,420.3 1141.8,421.7 1142.3,423.2 1142.9,421.4 1143.4,420.0 1144.0,409.1 1144.5,416.4 1145.1,419.2 1145.6,413.7 1146.2,424.7 1146.7,436.1 1147.3,429.2 1147.8,429.2 1148.4,429.8 1148.9,400.4 1149.5,399.3 1150.0,412.9 1150.6,417.8 1151.1,419.6 1151.7,423.2 1152.2,433.7 1152.8,403.2 1153.3,399.2 1153.9,418.5 1154.4,422.3 1155.0,419.5 1155.5,424.2 1156.1,421.4 1156.6,430.1 1157.2,435.3 1157.7,430.1 1158.3,427.8 1158.8,406.3 1159.4,405.5 1159.9,412.8 1160.5,426.7 1161.0,425.2 1161.6,436.3 1162.1,443.6 1162.7,451.0 1163.2,451.2 1163.8,436.2 1164.3,438.5 1164.9,425.0 1165.4,431.0 1166.0,422.5 1166.5,415.7 1167.1,419.5 1167.6,417.0 1168.2,426.8 1168.7,427.9 1169.3,426.2 1169.8,426.9 1170.4,431.2 1170.9,442.4 1171.5,432.8 1172.0,436.1 1172.6,423.9 1173.1,428.1 1173.7,416.8 1174.2,417.3 1174.8,417.6 1175.3,422.2 1175.9,410.6 1176.4,414.4 1177.0,417.0 1177.5,414.0 1178.1,422.6 1178.6,426.1 1179.2,422.6 1179.7,423.1 1180.3,430.3 1180.8,433.3 1181.4,407.4 1181.9,407.3 1182.5,407.6 1183.0,408.9 1183.6,412.1 1184.1,421.3 1184.7,414.0 1185.2,425.5 1185.8,429.5 1186.3,417.9 1186.9,418.4 1187.4,413.9 1188.0,416.8 1188.5,424.3 1189.1,424.7 1189.6,398.5 1190.2,411.0 1190.7,425.8 1191.3,436.4 1191.8,434.2 1192.4,428.2 1192.9,432.5 1193.5,425.5 1194.0,421.5 1194.6,422.5 1195.1,414.2 1195.7,425.2 1196.2,415.7 1196.8,436.3 1197.3,428.0 1197.9,423.5 1198.4,420.5 1199.0,422.7 1199.5,426.0 1200.1,425.4 1200.6,407.5 1201.2,413.7 1201.7,393.4 1202.3,405.0 1202.8,407.5 1203.4,425.0 1203.9,417.7 1204.5,431.6 1205.0,422.8 1205.6,426.2 1206.1,422.6 1206.7,427.0 1207.2,405.2 1207.8,416.2 1208.3,445.6 1208.9,419.3 1209.4,420.2 1210.0,410.4 1210.5,413.0 1211.1,426.9 1211.6,413.5 1212.2,401.0 1212.7,385.8 1213.3,401.2 1213.8,409.7 1214.4,394.5 1214.9,404.6 1215.5,407.9 1216.0,416.4 1216.6,423.2 1217.1,418.1 1217.7,402.7 1218.2,411.5 1218.8,397.7 1219.3,401.3 1219.9,397.8 1220.4,414.7 1221.0,412.8 1221.5,413.4 1222.1,411.3 1222.6,416.3 1223.2,416.6 1223.7,423.9 1224.3,427.3 1224.8,423.7 1225.4,421.2 1225.9,419.3 1226.5,416.9 1227.0,417.4 1227.6,415.7 1228.1,416.0 1228.7,418.3 1229.2,404.2 1229.8,411.0 1230.3,416.5 1230.9,423.9 1231.4,419.8 1232.0,418.9 1232.5,416.8 1233.1,419.6 1233.6,425.4 1234.2,425.2 1234.7,420.2 1235.3,420.0 1235.8,439.8 1236.4,427.8 1236.9,427.4 1237.5,428.1 1238.0,429.2 1238.6,434.2 1239.1,427.1 1239.7,426.2 1240.2,428.8 1240.8,412.6 1241.3,422.0 1241.9,429.4 1242.4,429.9 1243.0,412.9 1243.5,409.9 1244.1,423.8 1244.6,419.5 1245.2,415.0 1245.7,416.2 1246.3,406.7 1246.8,411.8 1247.4,424.3 1247.9,433.1 1248.5,429.6 1249.0,423.8 1249.6,395.9 1250.1,383.4 1250.7,393.3 1251.2,424.3 1251.8,419.4 1252.3,427.6 1252.9,435.0 1253.4,436.0 1254.0,439.0 1254.5,422.5 1255.1,428.8 1255.6,419.3 1256.2,402.2 1256.7,413.7 1257.3,409.7 1257.8,426.0 1258.4,419.1 1258.9,411.6 1259.5,421.6 1260.0,431.6 1260.6,433.4 1261.1,432.5 1261.7,427.3 1262.2,423.4 1262.8,418.7 1263.3,422.4 1263.9,415.5 1264.4,414.5 1265.0,428.2 1265.5,427.5" fill="none" stroke="#f14cc1" stroke-width="2" stroke-linejoin="miter" shape-rendering="crispEdges"/><rect x="1328.55" y="148" width="1.5" height="571.5" fill="#111"/><rect x="1324.55" y="713.20" width="4" height="1.5" fill="#111"/><rect x="1320.55" y="687.45" width="8" height="1.5" fill="#111"/><rect x="1324.55" y="661.70" width="4" height="1.5" fill="#111"/><rect x="1324.55" y="635.95" width="4" height="1.5" fill="#111"/><rect x="1324.55" y="610.20" width="4" height="1.5" fill="#111"/><rect x="1324.55" y="584.45" width="4" height="1.5" fill="#111"/><rect x="1320.55" y="558.70" width="8" height="1.5" fill="#111"/><rect x="1324.55" y="532.95" width="4" height="1.5" fill="#111"/><rect x="1324.55" y="507.20" width="4" height="1.5" fill="#111"/><rect x="1324.55" y="481.45" width="4" height="1.5" fill="#111"/><rect x="1324.55" y="455.70" width="4" height="1.5" fill="#111"/><rect x="1320.55" y="429.95" width="8" height="1.5" fill="#111"/><rect x="1324.55" y="404.20" width="4" height="1.5" fill="#111"/><rect x="1324.55" y="378.45" width="4" height="1.5" fill="#111"/><rect x="1324.55" y="352.70" width="4" height="1.5" fill="#111"/><rect x="1324.55" y="326.95" width="4" height="1.5" fill="#111"/><rect x="1320.55" y="301.20" width="8" height="1.5" fill="#111"/><rect x="1324.55" y="275.45" width="4" height="1.5" fill="#111"/><rect x="1324.55" y="249.70" width="4" height="1.5" fill="#111"/><rect x="1324.55" y="223.95" width="4" height="1.5" fill="#111"/><rect x="1324.55" y="198.20" width="4" height="1.5" fill="#111"/><rect x="1320.55" y="172.45" width="8" height="1.5" fill="#111"/><rect x="1332.75" y="723.75" width="900.25" height="1.5" fill="#111"/><rect x="1332.75" y="723.75" width="1.5" height="8.75" fill="#111"/><rect x="1363.71" y="723.75" width="1.5" height="4.75" fill="#111"/><rect x="1394.67" y="723.75" width="1.5" height="4.75" fill="#111"/><rect x="1425.63" y="723.75" width="1.5" height="4.75" fill="#111"/><rect x="1456.59" y="723.75" width="1.5" height="4.75" fill="#111"/><rect x="1487.55" y="723.75" width="1.5" height="8.75" fill="#111"/><rect x="1518.51" y="723.75" width="1.5" height="4.75" fill="#111"/><rect x="1549.47" y="723.75" width="1.5" height="4.75" fill="#111"/><rect x="1580.43" y="723.75" width="1.5" height="4.75" fill="#111"/><rect x="1611.39" y="723.75" width="1.5" height="4.75" fill="#111"/><rect x="1642.35" y="723.75" width="1.5" height="8.75" fill="#111"/><rect x="1673.31" y="723.75" width="1.5" height="4.75" fill="#111"/><rect x="1704.27" y="723.75" width="1.5" height="4.75" fill="#111"/><rect x="1735.23" y="723.75" width="1.5" height="4.75" fill="#111"/><rect x="1766.19" y="723.75" width="1.5" height="4.75" fill="#111"/><rect x="1797.15" y="723.75" width="1.5" height="8.75" fill="#111"/><rect x="1828.11" y="723.75" width="1.5" height="4.75" fill="#111"/><rect x="1859.07" y="723.75" width="1.5" height="4.75" fill="#111"/><rect x="1890.03" y="723.75" width="1.5" height="4.75" fill="#111"/><rect x="1920.99" y="723.75" width="1.5" height="4.75" fill="#111"/><rect x="1951.95" y="723.75" width="1.5" height="8.75" fill="#111"/><rect x="1982.91" y="723.75" width="1.5" height="4.75" fill="#111"/><rect x="2013.87" y="723.75" width="1.5" height="4.75" fill="#111"/><rect x="2044.83" y="723.75" width="1.5" height="4.75" fill="#111"/><rect x="2075.79" y="723.75" width="1.5" height="4.75" fill="#111"/><rect x="2106.75" y="723.75" width="1.5" height="8.75" fill="#111"/><rect x="2137.71" y="723.75" width="1.5" height="4.75" fill="#111"/><rect x="2168.67" y="723.75" width="1.5" height="4.75" fill="#111"/><rect x="2199.63" y="723.75" width="1.5" height="4.75" fill="#111"/><rect x="2230.59" y="723.75" width="1.5" height="4.75" fill="#111"/><polyline points="1333.5,302.0 1333.5,377.0 1334.0,344.9 1335.0,383.7 1336.0,413.9 1337.0,447.4 1338.0,474.9 1339.0,492.5 1340.0,516.0 1341.0,526.5 1342.0,538.5 1343.0,551.0 1344.0,560.9 1345.0,579.7 1346.0,597.8 1347.0,609.8 1348.0,619.2 1349.0,632.9 1350.0,641.8 1351.0,660.7 1352.0,682.7 1353.0,677.2 1354.0,693.5 1355.0,700.6 1356.0,693.0 1357.0,680.6 1358.0,663.4 1359.0,656.1 1360.0,645.0 1361.0,635.5 1362.0,625.9 1363.0,613.7 1364.0,615.0 1365.0,594.5 1366.0,582.4 1367.0,566.8 1368.0,558.5 1369.0,557.0 1370.0,544.0 1371.0,528.4 1372.0,512.7 1373.0,508.0 1374.0,494.9 1375.0,489.2 1376.0,475.1 1377.0,463.4 1378.0,454.4 1379.0,437.5 1380.0,436.5 1381.0,420.4 1382.0,412.8 1383.0,405.2 1384.0,405.1 1385.0,391.6 1386.0,381.2 1387.0,364.4 1388.0,360.5 1389.0,341.3 1390.0,335.6 1391.0,319.7 1392.0,324.9 1393.0,337.0 1394.0,335.3 1395.0,329.5 1396.0,334.2 1397.0,340.4 1398.0,354.0 1399.0,357.9 1400.0,364.9 1401.0,362.0 1402.0,365.3 1403.0,370.6 1404.0,370.0 1405.0,376.8 1406.0,379.7 1407.0,385.5 1408.0,383.0 1409.0,380.6 1410.0,396.8 1411.0,401.4 1412.0,405.2 1413.0,421.6 1414.0,425.8 1415.0,427.6 1416.0,425.6 1417.0,431.4 1418.0,436.1 1419.0,438.6 1420.0,449.8 1421.0,455.0 1422.0,459.2 1423.0,457.2 1424.0,458.8 1425.0,470.1 1426.0,474.4 1427.0,475.3 1428.0,481.9 1429.0,486.4 1430.0,488.8 1431.0,493.4 1432.0,502.4 1433.0,507.5 1434.0,506.7 1435.0,506.1 1436.0,507.8 1437.0,501.3 1438.0,502.1 1439.0,500.3 1440.0,492.9 1441.0,482.8 1442.0,483.4 1443.0,486.4 1444.0,490.6 1445.0,492.3 1446.0,488.4 1447.0,484.8 1448.0,483.9 1449.0,478.7 1450.0,484.5 1451.0,474.9 1452.0,465.8 1453.0,460.2 1454.0,463.0 1455.0,454.3 1456.0,446.5 1457.0,446.4 1458.0,446.9 1459.0,437.8 1460.0,435.8 1461.0,426.4 1462.0,428.7 1463.0,416.4 1464.0,411.3 1465.0,405.7 1466.0,398.2 1467.0,396.0 1468.0,396.1 1469.0,387.2 1470.0,392.8 1471.0,386.1 1472.0,380.8 1473.0,370.7 1474.0,366.3 1475.0,366.3 1476.0,355.4 1477.0,348.8 1478.0,342.5 1479.0,334.7 1480.0,338.6 1481.0,342.2 1482.0,359.6 1483.0,359.2 1484.0,366.5 1485.0,385.9 1486.0,379.5 1487.0,379.6 1488.0,390.0 1489.0,401.9 1490.0,407.7 1491.0,419.8 1492.0,420.1 1493.0,433.6 1494.0,452.7 1495.0,461.4 1496.0,473.3 1497.0,471.5 1498.0,475.5 1499.0,488.3 1500.0,492.0 1501.0,501.6 1502.0,500.0 1503.0,502.3 1504.0,501.7 1505.0,489.7 1506.0,492.3 1507.0,496.3 1508.0,497.8 1509.0,497.3 1510.0,500.6 1511.0,495.7 1512.0,498.4 1513.0,492.8 1514.0,499.8 1515.0,491.7 1516.0,495.2 1517.0,488.7 1518.0,477.1 1519.0,470.9 1520.0,465.6 1521.0,470.2 1522.0,465.9 1523.0,458.6 1524.0,455.8 1525.0,458.3 1526.0,450.9 1527.0,442.0 1528.0,440.2 1529.0,431.8 1530.0,431.4 1531.0,431.6 1532.0,426.0 1533.0,418.4 1534.0,416.4 1535.0,408.2 1536.0,416.8 1537.0,424.6 1538.0,417.5 1539.0,403.4 1540.0,401.3 1541.0,396.1 1542.0,390.6 1543.0,394.9 1544.0,396.6 1545.0,394.7 1546.0,401.1 1547.0,399.0 1548.0,392.6 1549.0,399.3 1550.0,387.8 1551.0,387.4 1552.0,384.4 1553.0,387.3 1554.0,385.7 1555.0,382.8 1556.0,384.4 1557.0,385.7 1558.0,384.7 1559.0,387.5 1560.0,378.5 1561.0,379.6 1562.0,385.5 1563.0,380.4 1564.0,366.7 1565.0,373.8 1566.0,375.2 1567.0,381.6 1568.0,384.8 1569.0,389.4 1570.0,396.2 1571.0,396.2 1572.0,400.6 1573.0,394.7 1574.0,394.8 1575.0,399.7 1576.0,411.7 1577.0,409.0 1578.0,412.9 1579.0,422.1 1580.0,424.0 1581.0,423.9 1582.0,421.2 1583.0,437.6 1584.0,439.1 1585.0,449.1 1586.0,457.8 1587.0,457.9 1588.0,466.9 1589.0,462.3 1590.0,471.5 1591.0,474.6 1592.0,484.5 1593.0,492.2 1594.0,498.3 1595.0,503.1 1596.0,496.8 1597.0,488.4 1598.0,483.6 1599.0,490.2 1600.0,483.4 1601.0,481.7 1602.0,477.4 1603.0,480.2 1604.0,473.8 1605.0,464.1 1606.0,473.9 1607.0,467.8 1608.0,459.8 1609.0,458.8 1610.0,460.4 1611.0,450.9 1612.0,454.3 1613.0,451.1 1614.0,455.6 1615.0,453.1 1616.0,446.0 1617.0,438.1 1618.0,439.3 1619.0,437.4 1620.0,429.8 1621.0,438.0 1622.0,435.6 1623.0,430.7 1624.0,417.8 1625.0,420.5 1626.0,414.5 1627.0,404.8 1628.0,406.3 1629.0,409.0 1630.0,402.4 1631.0,396.2 1632.0,389.3 1633.0,384.7 1634.0,387.4 1635.0,382.3 1636.0,379.2 1637.0,376.4 1638.0,356.9 1639.0,358.6 1640.0,359.5 1641.0,356.6 1642.0,345.3 1643.0,340.5 1644.0,342.7 1645.0,340.9 1646.0,339.3 1647.0,338.1 1648.0,347.5 1649.0,360.9 1650.0,364.7 1651.0,375.7 1652.0,382.5 1653.0,388.9 1654.0,388.4 1655.0,391.2 1656.0,395.5 1657.0,409.1 1658.0,420.0 1659.0,418.2 1660.0,416.8 1661.0,418.9 1662.0,424.2 1663.0,421.4 1664.0,420.7 1665.0,418.9 1666.0,420.3 1667.0,423.1 1668.0,430.7 1669.0,438.8 1670.0,442.5 1671.0,455.6 1672.0,446.2 1673.0,457.9 1674.0,461.3 1675.0,482.6 1676.0,485.3 1677.0,485.2 1678.0,488.5 1679.0,485.0 1680.0,477.7 1681.0,475.5 1682.0,478.6 1683.0,480.6 1684.0,474.9 1685.0,474.3 1686.0,476.9 1687.0,480.0 1688.0,476.2 1689.0,467.8 1690.0,456.9 1691.0,455.3 1692.0,450.1 1693.0,443.6 1694.0,437.1 1695.0,431.7 1696.0,429.5 1697.0,428.3 1698.0,418.4 1699.0,422.7 1700.0,420.6 1701.0,409.4 1702.0,403.4 1703.0,403.1 1704.0,389.5 1705.0,380.9 1706.0,373.7 1707.0,365.5 1708.0,366.5 1709.0,360.3 1710.0,355.9 1711.0,351.0 1712.0,344.5 1713.0,347.4 1714.0,347.4 1715.0,347.8 1716.0,348.2 1717.0,354.2 1718.0,364.0 1719.0,371.9 1720.0,379.3 1721.0,382.8 1722.0,391.1 1723.0,398.3 1724.0,397.3 1725.0,406.6 1726.0,414.4 1727.0,418.1 1728.0,428.9 1729.0,432.7 1730.0,433.6 1731.0,444.4 1732.0,456.8 1733.0,454.1 1734.0,466.0 1735.0,483.2 1736.0,497.3 1737.0,512.7 1738.0,528.4 1739.0,528.8 1740.0,546.2 1741.0,551.1 1742.0,562.7 1743.0,574.3 1744.0,593.7 1745.0,600.5 1746.0,617.6 1747.0,619.6 1748.0,629.5 1749.0,620.5 1750.0,615.7 1751.0,605.6 1752.0,600.6 1753.0,604.3 1754.0,599.4 1755.0,588.0 1756.0,582.6 1757.0,579.1 1758.0,583.5 1759.0,573.6 1760.0,565.8 1761.0,560.2 1762.0,559.2 1763.0,546.8 1764.0,528.2 1765.0,514.3 1766.0,515.1 1767.0,505.6 1768.0,485.8 1769.0,477.3 1770.0,469.0 1771.0,461.0 1772.0,457.2 1773.0,451.2 1774.0,447.0 1775.0,426.0 1776.0,420.4 1777.0,411.2 1778.0,398.2 1779.0,395.8 1780.0,380.6 1781.0,370.0 1782.0,370.9 1783.0,363.0 1784.0,357.6 1785.0,361.4 1786.0,354.7 1787.0,364.9 1788.0,367.2 1789.0,370.5 1790.0,375.9 1791.0,380.3 1792.0,380.7 1793.0,384.6 1794.0,389.6 1795.0,398.6 1796.0,390.7 1797.0,405.1 1798.0,404.3 1799.0,420.3 1800.0,423.4 1801.0,433.2 1802.0,432.5 1803.0,445.4 1804.0,450.1 1805.0,456.0 1806.0,462.9 1807.0,456.6 1808.0,461.2 1809.0,466.5 1810.0,480.7 1811.0,490.6 1812.0,504.2 1813.0,512.5 1814.0,519.9 1815.0,510.3 1816.0,507.6 1817.0,500.9 1818.0,497.3 1819.0,497.8 1820.0,509.0 1821.0,514.3 1822.0,521.9 1823.0,527.0 1824.0,532.2 1825.0,555.5 1826.0,553.9 1827.0,544.5 1828.0,543.5 1829.0,543.1 1830.0,524.9 1831.0,541.9 1832.0,535.6 1833.0,538.0 1834.0,534.0 1835.0,529.5 1836.0,544.8 1837.0,534.7 1838.0,524.2 1839.0,522.3 1840.0,514.2 1841.0,526.6 1842.0,527.5 1843.0,520.2 1844.0,529.5 1845.0,523.8 1846.0,505.3 1847.0,497.6 1848.0,484.3 1849.0,462.3 1850.0,442.8 1851.0,435.4 1852.0,413.2 1853.0,403.0 1854.0,389.2 1855.0,367.9 1856.0,349.8 1857.0,336.8 1858.0,330.0 1859.0,310.4 1860.0,298.5 1861.0,279.2 1862.0,266.8 1863.0,248.4 1864.0,236.0 1865.0,216.2 1866.0,199.2 1867.0,197.9 1868.0,196.5 1869.0,185.5 1870.0,189.9 1871.0,185.3 1872.0,189.1 1873.0,183.1 1874.0,176.6 1875.0,173.6 1876.0,169.9 1877.0,164.9 1878.0,175.9 1879.0,181.7 1880.0,167.7 1881.0,158.3 1882.0,165.6 1883.0,172.7 1884.0,178.5 1885.0,181.0 1886.0,196.0 1887.0,206.1 1888.0,209.3 1889.0,232.1 1890.0,243.0 1891.0,246.7 1892.0,256.3 1893.0,275.1 1894.0,293.3 1895.0,306.5 1896.0,319.4 1897.0,328.2 1898.0,350.5 1899.0,357.7 1900.0,370.0 1901.0,383.4 1902.0,393.7 1903.0,410.2 1904.0,428.8 1905.0,427.4 1906.0,442.0 1907.0,462.8 1908.0,480.9 1909.0,488.0 1910.0,503.2 1911.0,515.2 1912.0,527.6 1913.0,536.7 1914.0,555.3 1915.0,572.4 1916.0,589.6 1917.0,598.7 1918.0,609.1 1919.0,625.4 1920.0,650.6 1921.0,653.8 1922.0,660.1 1923.0,661.6 1924.0,641.1 1925.0,618.1 1926.0,617.0 1927.0,613.5 1928.0,606.4 1929.0,596.1 1930.0,586.0 1931.0,567.2 1932.0,560.2 1933.0,541.9 1934.0,524.3 1935.0,516.0 1936.0,501.6 1937.0,489.6 1938.0,480.3 1939.0,471.4 1940.0,464.2 1941.0,450.0 1942.0,439.2 1943.0,430.5 1944.0,422.3 1945.0,414.3 1946.0,406.5 1947.0,394.8 1948.0,384.5 1949.0,375.0 1950.0,361.7 1951.0,350.5 1952.0,334.3 1953.0,325.9 1954.0,319.9 1955.0,304.0 1956.0,299.7 1957.0,283.9 1958.0,277.7 1959.0,272.7 1960.0,263.5 1961.0,266.5 1962.0,277.4 1963.0,283.8 1964.0,289.3 1965.0,305.9 1966.0,306.3 1967.0,325.6 1968.0,333.9 1969.0,351.7 1970.0,360.2 1971.0,381.1 1972.0,387.1 1973.0,387.6 1974.0,417.4 1975.0,425.6 1976.0,434.8 1977.0,445.7 1978.0,455.6 1979.0,469.3 1980.0,477.3 1981.0,500.7 1982.0,505.6 1983.0,519.8 1984.0,536.3 1985.0,543.4 1986.0,557.8 1987.0,564.5 1988.0,571.4 1989.0,581.4 1990.0,601.1 1991.0,617.2 1992.0,622.2 1993.0,637.8 1994.0,630.1 1995.0,621.4 1996.0,613.4 1997.0,591.0 1998.0,586.0 1999.0,574.0 2000.0,557.7 2001.0,554.7 2002.0,546.8 2003.0,538.3 2004.0,526.3 2005.0,513.4 2006.0,498.9 2007.0,491.6 2008.0,479.3 2009.0,471.0 2010.0,465.9 2011.0,460.6 2012.0,451.5 2013.0,441.4 2014.0,428.8 2015.0,423.2 2016.0,416.8 2017.0,401.0 2018.0,388.2 2019.0,374.2 2020.0,365.3 2021.0,355.3 2022.0,356.6 2023.0,350.1 2024.0,329.4 2025.0,323.6 2026.0,311.4 2027.0,296.1 2028.0,305.1 2029.0,309.1 2030.0,318.5 2031.0,327.3 2032.0,337.2 2033.0,342.9 2034.0,346.7 2035.0,347.1 2036.0,346.0 2037.0,366.0 2038.0,365.4 2039.0,370.3 2040.0,378.9 2041.0,388.3 2042.0,384.9 2043.0,381.6 2044.0,393.5 2045.0,395.7 2046.0,405.1 2047.0,424.0 2048.0,425.2 2049.0,434.9 2050.0,434.8 2051.0,456.8 2052.0,456.3 2053.0,462.5 2054.0,464.7 2055.0,469.4 2056.0,481.9 2057.0,485.6 2058.0,487.4 2059.0,493.2 2060.0,500.4 2061.0,508.5 2062.0,510.4 2063.0,504.3 2064.0,501.0 2065.0,510.0 2066.0,502.9 2067.0,505.3 2068.0,497.0 2069.0,494.9 2070.0,488.0 2071.0,476.6 2072.0,475.6 2073.0,478.9 2074.0,474.6 2075.0,476.2 2076.0,464.2 2077.0,456.2 2078.0,445.3 2079.0,439.1 2080.0,442.4 2081.0,436.5 2082.0,426.2 2083.0,423.3 2084.0,417.8 2085.0,414.0 2086.0,406.2 2087.0,401.2 2088.0,391.6 2089.0,383.3 2090.0,369.2 2091.0,379.4 2092.0,383.7 2093.0,391.3 2094.0,406.1 2095.0,408.9 2096.0,410.8 2097.0,402.1 2098.0,395.4 2099.0,393.3 2100.0,393.7 2101.0,395.4 2102.0,383.6 2103.0,379.6 2104.0,367.5 2105.0,367.9 2106.0,372.3 2107.0,372.6 2108.0,380.5 2109.0,380.7 2110.0,377.6 2111.0,375.9 2112.0,381.3 2113.0,392.4 2114.0,386.4 2115.0,386.1 2116.0,393.0 2117.0,397.9 2118.0,409.0 2119.0,411.2 2120.0,417.3 2121.0,422.9 2122.0,429.5 2123.0,441.1 2124.0,437.4 2125.0,435.9 2126.0,438.7 2127.0,448.3 2128.0,458.0 2129.0,467.6 2130.0,471.7 2131.0,469.8 2132.0,458.4 2133.0,456.4 2134.0,459.3 2135.0,452.0 2136.0,450.5 2137.0,448.8 2138.0,451.2 2139.0,445.0 2140.0,436.8 2141.0,437.1 2142.0,432.8 2143.0,433.5 2144.0,422.9 2145.0,415.5 2146.0,406.8 2147.0,399.2 2148.0,406.6 2149.0,389.3 2150.0,393.7 2151.0,388.8 2152.0,389.4 2153.0,381.2 2154.0,380.3 2155.0,380.1 2156.0,379.1 2157.0,388.2 2158.0,377.7 2159.0,369.4 2160.0,376.9 2161.0,384.0 2162.0,377.9 2163.0,364.6 2164.0,363.7 2165.0,378.1 2166.0,392.2 2167.0,393.5 2168.0,390.8 2169.0,403.3 2170.0,400.8 2171.0,404.8 2172.0,409.7 2173.0,414.6 2174.0,425.1 2175.0,426.3 2176.0,435.3 2177.0,447.5 2178.0,457.0 2179.0,466.3 2180.0,466.1 2181.0,462.5 2182.0,472.2 2183.0,480.5 2184.0,483.0 2185.0,492.0 2186.0,500.7 2187.0,499.5 2188.0,501.9 2189.0,505.3 2190.0,497.6 2191.0,491.2 2192.0,488.4 2193.0,484.7 2194.0,480.8 2195.0,475.1 2196.0,467.7 2197.0,469.8 2198.0,454.1 2199.0,453.2 2200.0,440.3 2201.0,436.4 2202.0,417.4 2203.0,412.2 2204.0,404.7 2205.0,397.8 2206.0,401.9 2207.0,393.4 2208.0,388.4 2209.0,383.4 2210.0,383.9 2211.0,383.2 2212.0,384.3 2213.0,378.0 2214.0,372.9 2215.0,357.7 2216.0,371.6 2217.0,369.5 2218.0,358.1 2219.0,352.0 2220.0,350.4 2221.0,343.1 2222.0,333.7 2223.0,339.0 2224.0,344.8 2225.0,354.1 2226.0,364.7 2227.0,367.2 2228.0,368.2 2229.0,372.2 2230.0,383.1 2231.0,387.7 2232.0,395.3 2233.0,395.7" fill="none" stroke="#bcbd22" stroke-width="2.1" stroke-linejoin="miter" shape-rendering="crispEdges"/><rect x="365.65" y="798" width="1.5" height="570.5" fill="#111"/><rect x="361.65" y="1344.89" width="4" height="1.5" fill="#111"/><rect x="357.65" y="1316.75" width="8" height="1.5" fill="#111"/><rect x="361.65" y="1288.61" width="4" height="1.5" fill="#111"/><rect x="359.65" y="1260.46" width="6" height="1.5" fill="#111"/><rect x="361.65" y="1232.32" width="4" height="1.5" fill="#111"/><rect x="357.65" y="1204.18" width="8" height="1.5" fill="#111"/><rect x="361.65" y="1176.03" width="4" height="1.5" fill="#111"/><rect x="359.65" y="1147.89" width="6" height="1.5" fill="#111"/><rect x="361.65" y="1119.74" width="4" height="1.5" fill="#111"/><rect x="357.65" y="1091.60" width="8" height="1.5" fill="#111"/><rect x="361.65" y="1063.46" width="4" height="1.5" fill="#111"/><rect x="359.65" y="1035.31" width="6" height="1.5" fill="#111"/><rect x="361.65" y="1007.17" width="4" height="1.5" fill="#111"/><rect x="357.65" y="979.03" width="8" height="1.5" fill="#111"/><rect x="361.65" y="950.88" width="4" height="1.5" fill="#111"/><rect x="359.65" y="922.74" width="6" height="1.5" fill="#111"/><rect x="361.65" y="894.59" width="4" height="1.5" fill="#111"/><rect x="357.65" y="866.45" width="8" height="1.5" fill="#111"/><rect x="361.65" y="838.31" width="4" height="1.5" fill="#111"/><rect x="359.65" y="810.16" width="6" height="1.5" fill="#111"/><rect x="369.55" y="1372.65" width="896.45" height="1.5" fill="#111"/><rect x="369.55" y="1372.65" width="1.5" height="8.75" fill="#111"/><rect x="400.37" y="1372.65" width="1.5" height="4.75" fill="#111"/><rect x="431.19" y="1372.65" width="1.5" height="4.75" fill="#111"/><rect x="462.01" y="1372.65" width="1.5" height="4.75" fill="#111"/><rect x="492.83" y="1372.65" width="1.5" height="4.75" fill="#111"/><rect x="523.65" y="1372.65" width="1.5" height="8.75" fill="#111"/><rect x="554.47" y="1372.65" width="1.5" height="4.75" fill="#111"/><rect x="585.29" y="1372.65" width="1.5" height="4.75" fill="#111"/><rect x="616.11" y="1372.65" width="1.5" height="4.75" fill="#111"/><rect x="646.93" y="1372.65" width="1.5" height="4.75" fill="#111"/><rect x="677.75" y="1372.65" width="1.5" height="8.75" fill="#111"/><rect x="708.57" y="1372.65" width="1.5" height="4.75" fill="#111"/><rect x="739.39" y="1372.65" width="1.5" height="4.75" fill="#111"/><rect x="770.21" y="1372.65" width="1.5" height="4.75" fill="#111"/><rect x="801.03" y="1372.65" width="1.5" height="4.75" fill="#111"/><rect x="831.85" y="1372.65" width="1.5" height="8.75" fill="#111"/><rect x="862.67" y="1372.65" width="1.5" height="4.75" fill="#111"/><rect x="893.49" y="1372.65" width="1.5" height="4.75" fill="#111"/><rect x="924.31" y="1372.65" width="1.5" height="4.75" fill="#111"/><rect x="955.13" y="1372.65" width="1.5" height="4.75" fill="#111"/><rect x="985.95" y="1372.65" width="1.5" height="8.75" fill="#111"/><rect x="1016.77" y="1372.65" width="1.5" height="4.75" fill="#111"/><rect x="1047.59" y="1372.65" width="1.5" height="4.75" fill="#111"/><rect x="1078.41" y="1372.65" width="1.5" height="4.75" fill="#111"/><rect x="1109.23" y="1372.65" width="1.5" height="4.75" fill="#111"/><rect x="1140.05" y="1372.65" width="1.5" height="8.75" fill="#111"/><rect x="1170.87" y="1372.65" width="1.5" height="4.75" fill="#111"/><rect x="1201.69" y="1372.65" width="1.5" height="4.75" fill="#111"/><rect x="1232.51" y="1372.65" width="1.5" height="4.75" fill="#111"/><rect x="1263.33" y="1372.65" width="1.5" height="4.75" fill="#111"/><polyline points="370.3,1320.0 370.5,1273.0 371.5,1246.1 372.5,1275.1 373.5,1249.1 374.5,1241.2 375.5,1206.5 376.5,1218.6 377.5,1195.6 378.5,1190.2 379.5,1186.7 380.5,1166.5 381.5,1178.1 382.5,1124.6 383.5,1103.2 384.5,1102.1 385.5,1085.5 386.5,1082.9 387.5,1109.5 388.5,1072.9 389.5,1061.5 390.5,1037.7 391.5,1017.6 392.5,985.3 393.5,1012.5 394.5,1042.2 395.5,1031.3 396.5,1048.7 397.5,1013.7 398.5,1023.5 399.5,1036.2 400.5,1066.0 401.5,1074.1 402.5,1091.8 403.5,1120.8 404.5,1088.3 405.5,1091.2 406.5,1102.7 407.5,1089.7 408.5,1103.6 409.5,1072.8 410.5,1074.2 411.5,1093.1 412.5,1078.7 413.5,1150.7 414.5,1186.5 415.5,1198.0 416.5,1201.0 417.5,1208.9 418.5,1195.9 419.5,1194.9 420.5,1164.6 421.5,1207.4 422.5,1208.2 423.5,1173.6 424.5,1175.1 425.5,1198.3 426.5,1168.2 427.5,1171.6 428.5,1140.7 429.5,1155.5 430.5,1169.7 431.5,1132.7 432.5,1144.3 433.5,1172.2 434.5,1170.6 435.5,1203.9 436.5,1209.2 437.5,1217.6 438.5,1178.4 439.5,1165.6 440.5,1184.4 441.5,1198.5 442.5,1187.2 443.5,1188.3 444.5,1175.4 445.5,1178.1 446.5,1195.4 447.5,1222.9 448.5,1219.8 449.5,1223.7 450.5,1209.9 451.5,1210.3 452.5,1217.4 453.5,1183.5 454.5,1198.9 455.5,1196.7 456.5,1200.6 457.5,1189.2 458.5,1160.3 459.5,1148.5 460.5,1150.8 461.5,1104.7 462.5,1114.2 463.5,1123.8 464.5,1130.7 465.5,1126.3 466.5,1122.6 467.5,1134.5 468.5,1131.6 469.5,1162.9 470.5,1150.2 471.5,1139.0 472.5,1146.8 473.5,1130.3 474.5,1119.8 475.5,1133.6 476.5,1134.5 477.5,1112.2 478.5,1080.9 479.5,1079.4 480.5,1101.3 481.5,1072.5 482.5,1083.5 483.5,1094.7 484.5,1074.3 485.5,1115.5 486.5,1111.0 487.5,1087.8 488.5,1089.4 489.5,1120.3 490.5,1156.9 491.5,1158.9 492.5,1161.2 493.5,1158.1 494.5,1191.6 495.5,1203.0 496.5,1155.2 497.5,1161.1 498.5,1174.2 499.5,1166.7 500.5,1175.5 501.5,1185.9 502.5,1166.3 503.5,1202.9 504.5,1207.0 505.5,1232.3 506.5,1235.5 507.5,1233.3 508.5,1259.0 509.5,1252.5 510.5,1269.2 511.5,1257.5 512.5,1278.1 513.5,1233.0 514.5,1224.4 515.5,1202.6 516.5,1184.0 517.5,1196.6 518.5,1170.3 519.5,1180.8 520.5,1210.1 521.5,1209.2 522.5,1187.8 523.5,1181.6 524.5,1196.2 525.5,1219.3 526.5,1197.2 527.5,1192.5 528.5,1195.4 529.5,1181.6 530.5,1181.0 531.5,1175.1 532.5,1187.5 533.5,1154.7 534.5,1147.2 535.5,1145.6 536.5,1123.5 537.5,1119.5 538.5,1123.7 539.5,1100.1 540.5,1106.5 541.5,1098.3 542.5,1105.9 543.5,1106.9 544.5,1111.2 545.5,1135.6 546.5,1158.1 547.5,1162.3 548.5,1135.2 549.5,1143.1 550.5,1118.7 551.5,1140.9 552.5,1156.0 553.5,1144.6 554.5,1146.8 555.5,1163.0 556.5,1170.2 557.5,1151.1 558.5,1139.0 559.5,1116.0 560.5,1129.5 561.5,1131.9 562.5,1144.1 563.5,1160.9 564.5,1133.7 565.5,1132.2 566.5,1139.3 567.5,1120.2 568.5,1136.6 569.5,1139.4 570.5,1156.2 571.5,1169.8 572.5,1176.3 573.5,1161.2 574.5,1161.9 575.5,1160.7 576.5,1174.7 577.5,1128.1 578.5,1132.9 579.5,1125.2 580.5,1136.5 581.5,1159.0 582.5,1155.4 583.5,1153.0 584.5,1137.7 585.5,1149.7 586.5,1155.3 587.5,1136.5 588.5,1158.0 589.5,1149.8 590.5,1117.0 591.5,1137.8 592.5,1163.6 593.5,1178.8 594.5,1184.1 595.5,1186.8 596.5,1204.1 597.5,1213.7 598.5,1176.9 599.5,1180.6 600.5,1199.2 601.5,1207.4 602.5,1229.7 603.5,1245.4 604.5,1238.0 605.5,1223.3 606.5,1251.3 607.5,1214.9 608.5,1206.7 609.5,1238.3 610.5,1225.5 611.5,1216.2 612.5,1199.2 613.5,1213.1 614.5,1241.4 615.5,1226.6 616.5,1205.0 617.5,1220.9 618.5,1243.0 619.5,1224.8 620.5,1190.0 621.5,1187.3 622.5,1157.1 623.5,1166.0 624.5,1142.5 625.5,1140.1 626.5,1130.2 627.5,1141.0 628.5,1097.8 629.5,1122.5 630.5,1135.2 631.5,1145.9 632.5,1121.4 633.5,1161.4 634.5,1144.4 635.5,1155.0 636.5,1140.9 637.5,1138.1 638.5,1130.9 639.5,1104.6 640.5,1108.1 641.5,1144.4 642.5,1116.4 643.5,1124.3 644.5,1092.5 645.5,1127.5 646.5,1098.7 647.5,1087.6 648.5,1100.6 649.5,1121.1 650.5,1099.4 651.5,1113.4 652.5,1134.3 653.5,1137.5 654.5,1126.8 655.5,1145.3 656.5,1167.5 657.5,1200.2 658.5,1196.7 659.5,1139.0 660.5,1164.1 661.5,1170.8 662.5,1160.3 663.5,1162.8 664.5,1174.2 665.5,1158.4 666.5,1137.2 667.5,1149.0 668.5,1176.4 669.5,1171.7 670.5,1171.5 671.5,1163.4 672.5,1194.9 673.5,1182.8 674.5,1194.2 675.5,1192.1 676.5,1230.0 677.5,1245.1 678.5,1276.8 679.5,1237.6 680.5,1210.9 681.5,1218.1 682.5,1189.0 683.5,1188.3 684.5,1207.4 685.5,1203.1 686.5,1213.3 687.5,1186.4 688.5,1175.5 689.5,1173.4 690.5,1188.0 691.5,1198.6 692.5,1205.6 693.5,1190.5 694.5,1170.8 695.5,1170.2 696.5,1181.3 697.5,1161.5 698.5,1165.6 699.5,1154.2 700.5,1185.3 701.5,1196.4 702.5,1176.6 703.5,1196.9 704.5,1186.9 705.5,1174.1 706.5,1178.8 707.5,1171.8 708.5,1139.4 709.5,1127.1 710.5,1103.8 711.5,1126.7 712.5,1121.9 713.5,1135.7 714.5,1110.9 715.5,1088.2 716.5,1117.7 717.5,1125.9 718.5,1086.5 719.5,1112.0 720.5,1092.0 721.5,1124.9 722.5,1126.4 723.5,1111.5 724.5,1115.8 725.5,1124.0 726.5,1082.8 727.5,1130.3 728.5,1139.2 729.5,1163.8 730.5,1109.3 731.5,1145.5 732.5,1149.5 733.5,1128.9 734.5,1174.7 735.5,1176.4 736.5,1146.5 737.5,1137.6 738.5,1163.7 739.5,1204.3 740.5,1206.2 741.5,1193.9 742.5,1231.9 743.5,1208.5 744.5,1233.3 745.5,1234.8 746.5,1221.9 747.5,1207.7 748.5,1202.1 749.5,1209.4 750.5,1238.1 751.5,1223.9 752.5,1199.6 753.5,1226.1 754.5,1231.6 755.5,1214.6 756.5,1224.7 757.5,1206.3 758.5,1222.1 759.5,1188.0 760.5,1152.2 761.5,1131.4 762.5,1122.1 763.5,1108.0 764.5,1077.6 765.5,1053.1 766.5,1016.5 767.5,1002.7 768.5,1027.0 769.5,998.1 770.5,962.9 771.5,945.2 772.5,928.8 773.5,927.1 774.5,907.9 775.5,931.3 776.5,902.7 777.5,895.8 778.5,921.0 779.5,903.2 780.5,915.7 781.5,893.3 782.5,898.8 783.5,925.7 784.5,880.6 785.5,883.4 786.5,853.3 787.5,856.9 788.5,846.2 789.5,855.3 790.5,835.3 791.5,808.1 792.5,844.2 793.5,853.3 794.5,879.7 795.5,872.8 796.5,868.5 797.5,851.2 798.5,837.5 799.5,864.7 800.5,860.5 801.5,911.9 802.5,944.1 803.5,948.6 804.5,967.8 805.5,957.1 806.5,947.2 807.5,1000.9 808.5,981.8 809.5,1003.6 810.5,978.4 811.5,990.7 812.5,1007.6 813.5,971.5 814.5,958.9 815.5,969.5 816.5,982.6 817.5,997.5 818.5,989.8 819.5,986.0 820.5,978.5 821.5,974.8 822.5,999.0 823.5,994.7 824.5,982.3 825.5,974.8 826.5,978.6 827.5,965.9 828.5,993.8 829.5,1011.9 830.5,988.8 831.5,991.7 832.5,995.3 833.5,1017.3 834.5,997.6 835.5,993.4 836.5,976.6 837.5,967.5 838.5,966.8 839.5,1038.5 840.5,1032.0 841.5,1012.4 842.5,999.0 843.5,956.6 844.5,943.7 845.5,967.8 846.5,964.5 847.5,981.6 848.5,968.7 849.5,971.5 850.5,963.8 851.5,966.8 852.5,964.3 853.5,975.7 854.5,950.3 855.5,942.6 856.5,929.6 857.5,935.3 858.5,946.4 859.5,944.3 860.5,904.6 861.5,906.8 862.5,908.5 863.5,909.7 864.5,900.1 865.5,895.9 866.5,913.5 867.5,912.0 868.5,922.7 869.5,866.9 870.5,846.7 871.5,831.2 872.5,867.2 873.5,882.9 874.5,870.9 875.5,869.9 876.5,888.5 877.5,921.3 878.5,946.0 879.5,921.5 880.5,942.6 881.5,937.6 882.5,973.4 883.5,1004.2 884.5,1001.9 885.5,1001.3 886.5,946.0 887.5,982.4 888.5,963.0 889.5,979.6 890.5,1020.7 891.5,1000.3 892.5,1069.7 893.5,1055.3 894.5,1078.9 895.5,1072.0 896.5,1098.5 897.5,1094.4 898.5,1109.0 899.5,1079.8 900.5,1133.1 901.5,1159.8 902.5,1158.6 903.5,1163.5 904.5,1156.1 905.5,1164.0 906.5,1191.0 907.5,1209.9 908.5,1230.8 909.5,1251.5 910.5,1260.7 911.5,1256.0 912.5,1254.3 913.5,1245.2 914.5,1269.8 915.5,1247.1 916.5,1236.7 917.5,1255.4 918.5,1234.0 919.5,1247.3 920.5,1234.4 921.5,1243.4 922.5,1333.2 923.5,1284.1 924.5,1312.1 925.5,1298.8 926.5,1283.4 927.5,1269.4 928.5,1300.4 929.5,1295.0 930.5,1297.4 931.5,1327.3 932.5,1283.4 933.5,1244.9 934.5,1266.2 935.5,1297.6 936.5,1286.7 937.5,1299.3 938.5,1294.1 939.5,1269.7 940.5,1229.6 941.5,1219.6 942.5,1225.9 943.5,1209.0 944.5,1182.4 945.5,1168.2 946.5,1145.5 947.5,1142.1 948.5,1113.5 949.5,1128.2 950.5,1106.4 951.5,1085.7 952.5,1032.3 953.5,992.9 954.5,1005.5 955.5,1003.7 956.5,1046.9 957.5,1019.3 958.5,1003.2 959.5,1030.2 960.5,991.9 961.5,1014.2 962.5,1000.7 963.5,980.7 964.5,983.7 965.5,1004.7 966.5,1026.0 967.5,1033.5 968.5,1026.8 969.5,1043.7 970.5,1058.4 971.5,1063.6 972.5,1098.0 973.5,1105.4 974.5,1076.9 975.5,1073.1 976.5,1072.2 977.5,1099.4 978.5,1136.7 979.5,1172.5 980.5,1170.7 981.5,1162.0 982.5,1156.0 983.5,1149.3 984.5,1216.7 985.5,1218.5 986.5,1223.6 987.5,1277.4 988.5,1264.3 989.5,1273.5 990.5,1291.1 991.5,1258.0 992.5,1250.6 993.5,1333.7 994.5,1320.8 995.5,1270.4 996.5,1271.2 997.5,1279.7 998.5,1295.2 999.5,1286.8 1000.5,1259.0 1001.5,1264.2 1002.5,1284.7 1003.5,1259.7 1004.5,1233.6 1005.5,1218.4 1006.5,1188.8 1007.5,1228.8 1008.5,1227.8 1009.5,1212.5 1010.5,1202.8 1011.5,1211.5 1012.5,1178.2 1013.5,1136.4 1014.5,1153.8 1015.5,1091.0 1016.5,1088.7 1017.5,1109.1 1018.5,1119.1 1019.5,1087.4 1020.5,1066.8 1021.5,1053.4 1022.5,1043.2 1023.5,1040.9 1024.5,1067.9 1025.5,1063.9 1026.5,1084.5 1027.5,1072.5 1028.5,1048.7 1029.5,1039.2 1030.5,1082.8 1031.5,1055.2 1032.5,1076.6 1033.5,1053.8 1034.5,1074.8 1035.5,1072.2 1036.5,1073.2 1037.5,1069.4 1038.5,1073.5 1039.5,1096.6 1040.5,1135.3 1041.5,1140.4 1042.5,1123.4 1043.5,1145.2 1044.5,1105.2 1045.5,1136.0 1046.5,1200.0 1047.5,1147.5 1048.5,1163.4 1049.5,1198.6 1050.5,1235.6 1051.5,1244.5 1052.5,1219.3 1053.5,1248.6 1054.5,1263.8 1055.5,1236.3 1056.5,1231.2 1057.5,1210.4 1058.5,1211.6 1059.5,1244.7 1060.5,1213.2 1061.5,1242.7 1062.5,1241.2 1063.5,1240.2 1064.5,1220.3 1065.5,1235.1 1066.5,1224.3 1067.5,1216.9 1068.5,1185.2 1069.5,1199.1 1070.5,1196.7 1071.5,1217.1 1072.5,1211.3 1073.5,1202.3 1074.5,1187.3 1075.5,1176.2 1076.5,1166.5 1077.5,1187.0 1078.5,1154.7 1079.5,1136.9 1080.5,1159.8 1081.5,1192.3 1082.5,1186.4 1083.5,1172.4 1084.5,1207.5 1085.5,1189.0 1086.5,1160.5 1087.5,1157.9 1088.5,1169.9 1089.5,1146.8 1090.5,1155.3 1091.5,1135.3 1092.5,1132.5 1093.5,1132.6 1094.5,1078.6 1095.5,1121.1 1096.5,1129.0 1097.5,1129.1 1098.5,1123.2 1099.5,1111.0 1100.5,1134.4 1101.5,1120.1 1102.5,1130.2 1103.5,1088.3 1104.5,1140.3 1105.5,1136.0 1106.5,1138.3 1107.5,1117.6 1108.5,1112.5 1109.5,1137.7 1110.5,1095.0 1111.5,1144.1 1112.5,1139.2 1113.5,1138.1 1114.5,1155.4 1115.5,1200.3 1116.5,1189.8 1117.5,1198.6 1118.5,1154.7 1119.5,1142.0 1120.5,1160.7 1121.5,1128.6 1122.5,1090.8 1123.5,1095.9 1124.5,1110.3 1125.5,1123.4 1126.5,1151.1 1127.5,1166.9 1128.5,1157.3 1129.5,1174.5 1130.5,1172.9 1131.5,1179.1 1132.5,1163.9 1133.5,1189.0 1134.5,1184.6 1135.5,1214.2 1136.5,1180.8 1137.5,1214.4 1138.5,1189.1 1139.5,1208.2 1140.5,1188.2 1141.5,1179.8 1142.5,1203.1 1143.5,1165.9 1144.5,1191.9 1145.5,1223.8 1146.5,1209.5 1147.5,1156.2 1148.5,1168.8 1149.5,1159.3 1150.5,1158.6 1151.5,1153.7 1152.5,1170.8 1153.5,1190.3 1154.5,1172.7 1155.5,1183.5 1156.5,1151.4 1157.5,1188.5 1158.5,1142.2 1159.5,1115.2 1160.5,1114.0 1161.5,1134.7 1162.5,1147.1 1163.5,1103.3 1164.5,1115.3 1165.5,1124.7 1166.5,1172.2 1167.5,1143.8 1168.5,1111.4 1169.5,1092.6 1170.5,1113.7 1171.5,1140.3 1172.5,1150.5 1173.5,1152.2 1174.5,1141.8 1175.5,1153.1 1176.5,1162.2 1177.5,1216.4 1178.5,1195.4 1179.5,1167.8 1180.5,1168.1 1181.5,1174.5 1182.5,1143.4 1183.5,1169.4 1184.5,1188.0 1185.5,1197.8 1186.5,1181.8 1187.5,1188.8 1188.5,1203.7 1189.5,1222.6 1190.5,1223.0 1191.5,1193.4 1192.5,1217.9 1193.5,1247.3 1194.5,1228.1 1195.5,1173.8 1196.5,1212.4 1197.5,1235.7 1198.5,1227.8 1199.5,1215.3 1200.5,1238.0 1201.5,1240.7 1202.5,1221.5 1203.5,1202.5 1204.5,1192.9 1205.5,1197.4 1206.5,1176.6 1207.5,1136.4 1208.5,1123.7 1209.5,1129.7 1210.5,1134.7 1211.5,1116.7 1212.5,1130.5 1213.5,1108.7 1214.5,1126.7 1215.5,1148.2 1216.5,1142.2 1217.5,1125.4 1218.5,1126.2 1219.5,1074.8 1220.5,1117.6 1221.5,1094.3 1222.5,1080.1 1223.5,1084.1 1224.5,1076.2 1225.5,1091.8 1226.5,1096.4 1227.5,1105.5 1228.5,1135.9 1229.5,1139.0 1230.5,1123.6 1231.5,1126.1 1232.5,1117.2 1233.5,1149.8 1234.5,1127.0 1235.5,1129.5 1236.5,1170.3 1237.5,1153.9 1238.5,1155.0 1239.5,1162.6 1240.5,1126.1 1241.5,1143.4 1242.5,1167.5 1243.5,1165.0 1244.5,1173.1 1245.5,1151.0 1246.5,1161.8 1247.5,1165.4 1248.5,1178.4 1249.5,1164.4 1250.5,1174.7 1251.5,1203.0 1252.5,1196.4 1253.5,1215.0 1254.5,1242.3 1255.5,1231.5 1256.5,1222.3 1257.5,1227.3 1258.5,1200.7 1259.5,1193.9 1260.5,1178.4 1261.5,1172.6 1262.5,1214.9 1263.5,1186.0 1264.5,1183.4 1265.5,1174.2" fill="none" stroke="#9467bd" stroke-width="2" stroke-linejoin="miter" shape-rendering="crispEdges"/><rect x="1331.85" y="798" width="1.5" height="570.5" fill="#111"/><rect x="1323.85" y="1363.81" width="8" height="1.5" fill="#111"/><rect x="1327.85" y="1343.55" width="4" height="1.5" fill="#111"/><rect x="1327.85" y="1323.28" width="4" height="1.5" fill="#111"/><rect x="1327.85" y="1303.02" width="4" height="1.5" fill="#111"/><rect x="1327.85" y="1282.75" width="4" height="1.5" fill="#111"/><rect x="1323.85" y="1262.49" width="8" height="1.5" fill="#111"/><rect x="1327.85" y="1242.23" width="4" height="1.5" fill="#111"/><rect x="1327.85" y="1221.96" width="4" height="1.5" fill="#111"/><rect x="1327.85" y="1201.70" width="4" height="1.5" fill="#111"/><rect x="1327.85" y="1181.43" width="4" height="1.5" fill="#111"/><rect x="1323.85" y="1161.17" width="8" height="1.5" fill="#111"/><rect x="1327.85" y="1140.91" width="4" height="1.5" fill="#111"/><rect x="1327.85" y="1120.64" width="4" height="1.5" fill="#111"/><rect x="1327.85" y="1100.38" width="4" height="1.5" fill="#111"/><rect x="1327.85" y="1080.11" width="4" height="1.5" fill="#111"/><rect x="1323.85" y="1059.85" width="8" height="1.5" fill="#111"/><rect x="1327.85" y="1039.59" width="4" height="1.5" fill="#111"/><rect x="1327.85" y="1019.32" width="4" height="1.5" fill="#111"/><rect x="1327.85" y="999.06" width="4" height="1.5" fill="#111"/><rect x="1327.85" y="978.79" width="4" height="1.5" fill="#111"/><rect x="1323.85" y="958.53" width="8" height="1.5" fill="#111"/><rect x="1327.85" y="938.27" width="4" height="1.5" fill="#111"/><rect x="1327.85" y="918.00" width="4" height="1.5" fill="#111"/><rect x="1327.85" y="897.74" width="4" height="1.5" fill="#111"/><rect x="1327.85" y="877.47" width="4" height="1.5" fill="#111"/><rect x="1323.85" y="857.21" width="8" height="1.5" fill="#111"/><rect x="1327.85" y="836.95" width="4" height="1.5" fill="#111"/><rect x="1327.85" y="816.68" width="4" height="1.5" fill="#111"/><rect x="1335.65" y="1372.65" width="897.35" height="1.5" fill="#111"/><rect x="1335.65" y="1372.65" width="1.5" height="8.75" fill="#111"/><rect x="1366.51" y="1372.65" width="1.5" height="4.75" fill="#111"/><rect x="1397.37" y="1372.65" width="1.5" height="4.75" fill="#111"/><rect x="1428.23" y="1372.65" width="1.5" height="4.75" fill="#111"/><rect x="1459.09" y="1372.65" width="1.5" height="4.75" fill="#111"/><rect x="1489.95" y="1372.65" width="1.5" height="8.75" fill="#111"/><rect x="1520.81" y="1372.65" width="1.5" height="4.75" fill="#111"/><rect x="1551.67" y="1372.65" width="1.5" height="4.75" fill="#111"/><rect x="1582.53" y="1372.65" width="1.5" height="4.75" fill="#111"/><rect x="1613.39" y="1372.65" width="1.5" height="4.75" fill="#111"/><rect x="1644.25" y="1372.65" width="1.5" height="8.75" fill="#111"/><rect x="1675.11" y="1372.65" width="1.5" height="4.75" fill="#111"/><rect x="1705.97" y="1372.65" width="1.5" height="4.75" fill="#111"/><rect x="1736.83" y="1372.65" width="1.5" height="4.75" fill="#111"/><rect x="1767.69" y="1372.65" width="1.5" height="4.75" fill="#111"/><rect x="1798.55" y="1372.65" width="1.5" height="8.75" fill="#111"/><rect x="1829.41" y="1372.65" width="1.5" height="4.75" fill="#111"/><rect x="1860.27" y="1372.65" width="1.5" height="4.75" fill="#111"/><rect x="1891.13" y="1372.65" width="1.5" height="4.75" fill="#111"/><rect x="1921.99" y="1372.65" width="1.5" height="4.75" fill="#111"/><rect x="1952.85" y="1372.65" width="1.5" height="8.75" fill="#111"/><rect x="1983.71" y="1372.65" width="1.5" height="4.75" fill="#111"/><rect x="2014.57" y="1372.65" width="1.5" height="4.75" fill="#111"/><rect x="2045.43" y="1372.65" width="1.5" height="4.75" fill="#111"/><rect x="2076.29" y="1372.65" width="1.5" height="4.75" fill="#111"/><rect x="2107.15" y="1372.65" width="1.5" height="8.75" fill="#111"/><rect x="2138.01" y="1372.65" width="1.5" height="4.75" fill="#111"/><rect x="2168.87" y="1372.65" width="1.5" height="4.75" fill="#111"/><rect x="2199.73" y="1372.65" width="1.5" height="4.75" fill="#111"/><rect x="2230.59" y="1372.65" width="1.5" height="4.75" fill="#111"/><polyline points="1336.5,1049.7 1336.9,1052.4 1337.2,1053.9 1337.6,1064.9 1337.9,1052.3 1338.3,1066.2 1338.7,1055.2 1339.0,1136.2 1339.4,1054.4 1339.7,1091.6 1340.1,1035.0 1340.5,1055.5 1340.8,1072.0 1341.2,1069.1 1341.5,1039.3 1341.9,1037.2 1342.3,1057.3 1342.6,1081.1 1343.0,1073.0 1343.3,1057.2 1343.7,1051.7 1344.1,1054.2 1344.4,1055.4 1344.8,1031.4 1345.1,1031.5 1345.5,1057.0 1345.9,1095.3 1346.2,1063.0 1346.6,1024.6 1346.9,1037.2 1347.3,1057.1 1347.7,1039.1 1348.0,1062.9 1348.4,1044.3 1348.7,1043.2 1349.1,1032.9 1349.5,1066.7 1349.8,1064.9 1350.2,1066.2 1350.5,1071.7 1350.9,1056.1 1351.3,1082.0 1351.6,1038.9 1352.0,1073.2 1352.3,1050.8 1352.7,1049.5 1353.1,1045.7 1353.4,1069.9 1353.8,1062.9 1354.1,1080.2 1354.5,1041.6 1354.9,1063.3 1355.2,1094.7 1355.6,1069.6 1355.9,1086.8 1356.3,1041.3 1356.7,1080.7 1357.0,1040.2 1357.4,1118.9 1357.7,1054.1 1358.1,1070.6 1358.5,1087.2 1358.8,1091.0 1359.2,1058.0 1359.5,1051.2 1359.9,1078.9 1360.3,1045.3 1360.6,1054.9 1361.0,1052.9 1361.3,1045.1 1361.7,1081.1 1362.1,1092.6 1362.4,1042.0 1362.8,1090.5 1363.1,1081.3 1363.5,1053.4 1363.9,1072.7 1364.2,1098.9 1364.6,1048.2 1364.9,1049.7 1365.3,1041.4 1365.7,1100.6 1366.0,1080.1 1366.4,1045.3 1366.7,1057.9 1367.1,1073.5 1367.5,1055.8 1367.8,1083.2 1368.2,1062.0 1368.5,1085.1 1368.9,1067.6 1369.3,1065.3 1369.6,1049.7 1370.0,1052.0 1370.3,1077.1 1370.7,1031.0 1371.1,1072.4 1371.4,1086.4 1371.8,1079.5 1372.1,1069.7 1372.5,1058.0 1372.9,1041.1 1373.2,1044.4 1373.6,1055.0 1373.9,1041.5 1374.3,1064.1 1374.7,972.6 1375.0,1056.3 1375.4,1086.0 1375.7,1066.1 1376.1,1075.9 1376.5,1029.2 1376.8,1073.6 1377.2,1046.5 1377.5,1093.7 1377.9,1033.5 1378.3,1047.5 1378.6,1078.5 1379.0,1102.7 1379.3,1034.0 1379.7,1058.2 1380.1,1048.0 1380.4,1094.1 1380.8,1103.1 1381.1,1068.9 1381.5,1081.3 1381.9,1051.3 1382.2,1041.2 1382.6,1073.8 1382.9,1055.0 1383.3,1078.7 1383.7,1058.2 1384.0,1089.4 1384.4,1060.5 1384.7,1063.4 1385.1,1082.4 1385.5,1067.0 1385.8,1090.5 1386.2,1051.6 1386.5,1045.1 1386.9,1081.1 1387.3,1073.1 1387.6,1051.7 1388.0,1041.1 1388.3,1049.5 1388.7,1061.9 1389.1,1057.6 1389.4,1072.5 1389.8,1045.4 1390.1,1072.9 1390.5,1084.1 1390.9,1092.0 1391.2,1046.9 1391.6,1032.0 1391.9,1073.1 1392.3,1055.7 1392.7,1076.6 1393.0,1079.6 1393.4,1054.0 1393.7,1058.8 1394.1,1030.3 1394.5,1030.9 1394.8,1075.0 1395.2,1101.5 1395.5,1028.0 1395.9,1032.9 1396.3,1051.2 1396.6,1074.6 1397.0,1024.3 1397.3,1060.8 1397.7,1086.6 1398.1,1016.4 1398.4,1037.8 1398.8,1073.8 1399.1,1081.7 1399.5,1044.3 1399.9,1077.1 1400.2,1078.3 1400.6,1033.3 1400.9,1058.2 1401.3,1049.0 1401.7,1054.3 1402.0,1064.3 1402.4,1038.7 1402.7,1023.6 1403.1,1033.1 1403.5,1034.5 1403.8,1055.9 1404.2,1077.8 1404.5,1049.8 1404.9,1046.1 1405.3,1050.0 1405.6,1074.4 1406.0,1057.3 1406.3,1060.6 1406.7,1046.8 1407.1,1058.9 1407.4,1052.3 1407.8,1082.0 1408.1,1060.8 1408.5,1083.2 1408.9,1068.5 1409.2,1064.9 1409.6,1026.3 1409.9,1055.8 1410.3,1041.6 1410.7,1079.1 1411.0,1066.4 1411.4,1067.4 1411.7,1056.5 1412.1,1085.9 1412.5,1020.7 1412.8,1073.6 1413.2,1051.9 1413.5,989.3 1413.9,1024.9 1414.3,1058.5 1414.6,1065.1 1415.0,1080.8 1415.3,1046.3 1415.7,1044.8 1416.1,1079.3 1416.4,1081.3 1416.8,1039.4 1417.1,1045.6 1417.5,1065.4 1417.9,1053.5 1418.2,1072.5 1418.6,1044.4 1418.9,1046.4 1419.3,1118.9 1419.7,1081.1 1420.0,1090.8 1420.4,1083.6 1420.7,1047.0 1421.1,1083.0 1421.5,1090.0 1421.8,1056.2 1422.2,1054.6 1422.5,1109.3 1422.9,1058.1 1423.3,1030.2 1423.6,1073.3 1424.0,1075.7 1424.3,1025.0 1424.7,1094.9 1425.1,990.0 1425.4,1035.2 1425.8,1041.5 1426.1,1058.8 1426.5,1057.4 1426.9,1067.6 1427.2,1061.2 1427.6,1067.4 1427.9,1045.2 1428.3,1013.2 1428.7,1036.4 1429.0,1044.8 1429.4,1073.2 1429.7,1049.2 1430.1,1067.4 1430.5,1114.5 1430.8,1058.7 1431.2,1131.3 1431.5,1076.5 1431.9,1083.4 1432.3,1085.3 1432.6,1059.6 1433.0,1019.7 1433.3,1021.2 1433.7,1041.5 1434.1,1051.9 1434.4,1028.1 1434.8,1029.2 1435.1,1051.5 1435.5,1049.1 1435.9,1046.6 1436.2,1093.9 1436.6,1076.7 1436.9,1032.3 1437.3,1076.3 1437.7,1055.2 1438.0,1042.1 1438.4,1046.4 1438.7,1111.0 1439.1,1055.5 1439.5,1040.0 1439.8,1045.6 1440.2,1072.5 1440.5,1060.3 1440.9,1043.9 1441.3,1039.0 1441.6,1044.3 1442.0,1030.2 1442.3,1057.9 1442.7,1067.6 1443.1,1066.7 1443.4,1056.4 1443.8,1084.3 1444.1,1066.2 1444.5,1069.8 1444.9,1036.8 1445.2,1050.7 1445.6,1049.2 1445.9,1088.3 1446.3,1055.8 1446.7,1055.1 1447.0,1053.8 1447.4,1089.0 1447.7,1047.7 1448.1,1043.4 1448.5,1063.4 1448.8,1057.3 1449.2,1086.4 1449.5,1081.9 1449.9,1065.4 1450.3,1056.3 1450.6,1060.0 1451.0,1086.6 1451.3,1068.1 1451.7,1072.4 1452.1,1012.0 1452.4,1036.7 1452.8,1056.2 1453.1,1072.0 1453.5,1072.4 1453.9,1061.5 1454.2,1024.3 1454.6,1061.3 1454.9,1043.1 1455.3,1015.9 1455.7,1040.8 1456.0,1050.5 1456.4,1062.4 1456.7,1074.0 1457.1,1062.3 1457.5,1058.8 1457.8,1048.6 1458.2,1058.4 1458.5,1036.6 1458.9,1073.1 1459.3,1059.1 1459.6,1079.7 1460.0,1070.3 1460.3,1051.7 1460.7,1057.4 1461.1,1067.4 1461.4,1060.2 1461.8,1008.7 1462.1,1040.7 1462.5,1098.0 1462.9,1061.6 1463.2,1088.0 1463.6,1049.1 1463.9,1029.1 1464.3,1053.7 1464.7,1052.6 1465.0,1044.2 1465.4,1083.5 1465.7,1088.3 1466.1,1046.2 1466.5,1098.8 1466.8,1078.2 1467.2,1036.6 1467.5,1080.7 1467.9,1067.6 1468.3,1060.5 1468.6,1031.0 1469.0,1068.8 1469.3,1044.9 1469.7,1095.7 1470.1,1039.3 1470.4,1030.3 1470.8,1069.0 1471.1,1036.8 1471.5,1089.6 1471.9,1042.0 1472.2,1074.5 1472.6,1040.4 1472.9,1049.8 1473.3,1063.1 1473.7,1046.2 1474.0,1047.7 1474.4,1046.3 1474.7,1088.6 1475.1,1010.9 1475.5,1028.1 1475.8,1100.4 1476.2,1066.8 1476.5,1043.8 1476.9,1066.2 1477.3,1062.8 1477.6,1076.8 1478.0,1077.7 1478.3,1084.5 1478.7,1035.2 1479.1,1065.9 1479.4,1048.0 1479.8,1029.1 1480.1,1044.4 1480.5,1039.1 1480.9,1068.1 1481.2,1054.3 1481.6,1067.6 1481.9,1058.7 1482.3,1063.1 1482.7,1070.1 1483.0,1044.1 1483.4,1057.3 1483.7,1057.0 1484.1,1049.8 1484.5,1040.0 1484.8,1066.1 1485.2,1073.2 1485.5,1098.2 1485.9,1064.5 1486.3,1065.7 1486.6,1038.0 1487.0,1059.1 1487.3,1086.2 1487.7,1101.4 1488.1,1070.9 1488.4,1072.4 1488.8,1095.4 1489.1,1104.5 1489.5,1076.8 1489.9,1048.9 1490.2,1064.9 1490.6,1086.4 1490.9,1049.8 1491.3,1060.7 1491.7,1044.2 1492.0,1049.7 1492.4,1031.7 1492.7,1085.0 1493.1,1047.3 1493.5,1063.2 1493.8,1071.5 1494.2,1054.8 1494.5,1038.6 1494.9,1048.4 1495.3,1039.1 1495.6,1020.6 1496.0,1047.9 1496.3,1083.4 1496.7,1053.3 1497.1,1141.6 1497.4,1041.5 1497.8,1024.0 1498.1,1053.4 1498.5,1079.7 1498.9,1080.2 1499.2,1084.6 1499.6,1051.9 1499.9,1052.9 1500.3,1062.8 1500.7,1053.3 1501.0,1071.1 1501.4,1077.0 1501.7,1079.2 1502.1,1044.1 1502.5,1089.7 1502.8,1021.8 1503.2,1053.3 1503.5,1049.0 1503.9,1058.9 1504.3,1054.2 1504.6,1082.2 1505.0,1044.3 1505.3,1074.3 1505.7,1037.1 1506.1,1059.1 1506.4,1067.0 1506.8,1078.9 1507.1,1036.4 1507.5,1016.2 1507.9,1093.3 1508.2,1041.3 1508.6,1053.9 1508.9,1056.3 1509.3,1087.3 1509.7,1074.0 1510.0,1083.4 1510.4,1085.9 1510.7,1069.8 1511.1,1055.6 1511.5,1086.3 1511.8,1079.6 1512.2,1066.1 1512.5,1024.3 1512.9,1048.5 1513.3,1068.7 1513.6,1050.8 1514.0,1078.6 1514.3,1111.9 1514.7,1062.3 1515.1,1067.4 1515.4,1077.3 1515.8,1095.1 1516.1,972.6 1516.5,1050.7 1516.9,1088.1 1517.2,1059.6 1517.6,1026.8 1517.9,1070.8 1518.3,1034.6 1518.7,1078.3 1519.0,1079.6 1519.4,1053.1 1519.7,1037.7 1520.1,1070.5 1520.5,1053.5 1520.8,1058.6 1521.2,1048.9 1521.5,1050.9 1521.9,1041.4 1522.3,1076.9 1522.6,1082.8 1523.0,1043.7 1523.3,1035.3 1523.7,1075.4 1524.1,1085.8 1524.4,1071.2 1524.8,1083.1 1525.1,1076.2 1525.5,1062.0 1525.9,1055.4 1526.2,1045.5 1526.6,1058.8 1526.9,1025.8 1527.3,1089.5 1527.7,1038.4 1528.0,1065.8 1528.4,1067.7 1528.7,1058.7 1529.1,1059.7 1529.5,1044.9 1529.8,1052.2 1530.2,1075.4 1530.5,1074.3 1530.9,1034.0 1531.3,1059.1 1531.6,1025.4 1532.0,1058.6 1532.3,1061.7 1532.7,1033.3 1533.1,1088.9 1533.4,1033.1 1533.8,1084.5 1534.1,1027.1 1534.5,1074.6 1534.9,1074.3 1535.2,1049.9 1535.6,1033.9 1535.9,1066.1 1536.3,1043.5 1536.7,1055.5 1537.0,1064.3 1537.4,1039.7 1537.7,1047.6 1538.1,1064.5 1538.5,1040.4 1538.8,1067.0 1539.2,1023.7 1539.5,1100.4 1539.9,1081.7 1540.3,1029.9 1540.6,1043.2 1541.0,1052.2 1541.3,1070.7 1541.7,1074.4 1542.1,1080.9 1542.4,1082.9 1542.8,1036.7 1543.1,1062.6 1543.5,1056.0 1543.9,1071.5 1544.2,1056.2 1544.6,1023.1 1544.9,1084.3 1545.3,1109.8 1545.7,1090.9 1546.0,1083.8 1546.4,1058.0 1546.7,1053.6 1547.1,1059.8 1547.5,1054.9 1547.8,1076.8 1548.2,1050.2 1548.5,1021.5 1548.9,1077.3 1549.3,1070.2 1549.6,1050.9 1550.0,1056.3 1550.3,1074.9 1550.7,1067.1 1551.1,1039.3 1551.4,1049.0 1551.8,1111.6 1552.1,1059.8 1552.5,1039.1 1552.9,1081.2 1553.2,1033.6 1553.6,1041.3 1553.9,1028.7 1554.3,1031.9 1554.7,1049.3 1555.0,1036.8 1555.4,1049.8 1555.7,1049.9 1556.1,1025.2 1556.5,1065.2 1556.8,1086.9 1557.2,1016.6 1557.5,1053.1 1557.9,1048.5 1558.3,1042.0 1558.6,1058.9 1559.0,1016.3 1559.3,1074.0 1559.7,1050.1 1560.1,1036.0 1560.4,1065.5 1560.8,1058.9 1561.1,1086.1 1561.5,1060.1 1561.9,1049.1 1562.2,1095.9 1562.6,1061.2 1562.9,1064.2 1563.3,1086.7 1563.7,1045.3 1564.0,1054.7 1564.4,1040.9 1564.7,1096.6 1565.1,1038.9 1565.5,1033.7 1565.8,1051.2 1566.2,1093.7 1566.5,1121.8 1566.9,1042.2 1567.3,1071.8 1567.6,1104.3 1568.0,1043.8 1568.3,1057.5 1568.7,1042.1 1569.1,1107.9 1569.4,1042.1 1569.8,1027.5 1570.1,1060.6 1570.5,1062.8 1570.9,1050.6 1571.2,1042.0 1571.6,1019.0 1571.9,1038.4 1572.3,1095.6 1572.7,1023.0 1573.0,1083.5 1573.4,1104.5 1573.7,1085.0 1574.1,1065.2 1574.5,1137.5 1574.8,1084.0 1575.2,1030.6 1575.5,1070.1 1575.9,1038.0 1576.3,1018.9 1576.6,1078.7 1577.0,1042.1 1577.3,1064.1 1577.7,1031.9 1578.1,1079.6 1578.4,1071.0 1578.8,1051.9 1579.1,1039.6 1579.5,1043.6 1579.9,1061.6 1580.2,1044.8 1580.6,1037.2 1580.9,1070.1 1581.3,1065.5 1581.7,1079.2 1582.0,1076.2 1582.4,1033.6 1582.7,1060.6 1583.1,1039.9 1583.5,1029.9 1583.8,1060.9 1584.2,1052.5 1584.5,1066.8 1584.9,1049.5 1585.3,1072.1 1585.6,1054.9 1586.0,1063.6 1586.3,1080.0 1586.7,1094.4 1587.1,1050.9 1587.4,1017.2 1587.8,1026.4 1588.1,1083.9 1588.5,1094.8 1588.9,1076.5 1589.2,1089.7 1589.6,1051.7 1589.9,1047.9 1590.3,1085.7 1590.7,1075.1 1591.0,1070.7 1591.4,1072.2 1591.7,1059.0 1592.1,1025.5 1592.5,1083.0 1592.8,1065.0 1593.2,1044.7 1593.5,1049.7 1593.9,1077.5 1594.3,1046.2 1594.6,1036.5 1595.0,1067.8 1595.3,1077.3 1595.7,1079.0 1596.1,1077.1 1596.4,1066.2 1596.8,1056.2 1597.1,1020.8 1597.5,1057.1 1597.9,1047.5 1598.2,1093.9 1598.6,1049.8 1598.9,1066.7 1599.3,1076.6 1599.7,1036.9 1600.0,1036.1 1600.4,1086.2 1600.7,1084.9 1601.1,1025.7 1601.5,1061.6 1601.8,1087.8 1602.2,1043.6 1602.5,1060.9 1602.9,1062.0 1603.3,1052.6 1603.6,1049.1 1604.0,1004.9 1604.3,1036.3 1604.7,1052.2 1605.1,1063.6 1605.4,1096.0 1605.8,1110.0 1606.1,1087.9 1606.5,1063.4 1606.9,1037.0 1607.2,1055.5 1607.6,1081.6 1607.9,1056.7 1608.3,1064.8 1608.7,1085.8 1609.0,1040.8 1609.4,1045.2 1609.7,1090.4 1610.1,1071.4 1610.5,1079.6 1610.8,1065.7 1611.2,1039.3 1611.5,1087.4 1611.9,1052.1 1612.3,1070.6 1612.6,1072.3 1613.0,1069.9 1613.3,1037.1 1613.7,1070.6 1614.1,1034.1 1614.4,1067.2 1614.8,1052.3 1615.1,1091.3 1615.5,1048.3 1615.9,1057.3 1616.2,1057.0 1616.6,1020.9 1616.9,1055.3 1617.3,1059.1 1617.7,1044.1 1618.0,1056.6 1618.4,1065.4 1618.7,1067.6 1619.1,1071.0 1619.5,1081.3 1619.8,1083.0 1620.2,1054.1 1620.5,1066.5 1620.9,1059.3 1621.3,1050.5 1621.6,1071.5 1622.0,1038.0 1622.3,1063.6 1622.7,1079.0 1623.1,1051.2 1623.4,1050.0 1623.8,1041.2 1624.1,1033.2 1624.5,1037.6 1624.9,1063.2 1625.2,1026.1 1625.6,1091.8 1625.9,1075.7 1626.3,1060.4 1626.7,1047.4 1627.0,1077.6 1627.4,1052.8 1627.7,1098.5 1628.1,1056.9 1628.5,1068.7 1628.8,1042.9 1629.2,1081.4 1629.5,1069.6 1629.9,1069.8 1630.3,1093.3 1630.6,1042.5 1631.0,1023.1 1631.3,1020.6 1631.7,1046.0 1632.1,1052.9 1632.4,1052.4 1632.8,1069.5 1633.1,1081.4 1633.5,1045.3 1633.9,1084.4 1634.2,1049.1 1634.6,1040.5 1634.9,1074.7 1635.3,1077.1 1635.7,1073.6 1636.0,1040.2 1636.4,1087.6 1636.7,1068.2 1637.1,1044.7 1637.5,1061.0 1637.8,1064.2 1638.2,1059.5 1638.5,1048.8 1638.9,1093.4 1639.3,1050.6 1639.6,1067.7 1640.0,1059.3 1640.3,1065.5 1640.7,1028.3 1641.1,1099.9 1641.4,1090.0 1641.8,1059.4 1642.1,1082.9 1642.5,1062.1 1642.9,1076.5 1643.2,1058.5 1643.6,1029.8 1643.9,1048.6 1644.3,1049.1 1644.7,1046.7 1645.0,1020.4 1645.4,1055.7 1645.7,1071.6 1646.1,1067.7 1646.5,1044.3 1646.8,1093.2 1647.2,1056.0 1647.5,1067.4 1647.9,1056.1 1648.3,1044.2 1648.6,1062.9 1649.0,1041.5 1649.3,1027.0 1649.7,1023.0 1650.1,1063.5 1650.4,1072.1 1650.8,1059.1 1651.1,1052.5 1651.5,1055.9 1651.9,1076.3 1652.2,1050.1 1652.6,1058.9 1652.9,1067.2 1653.3,1057.7 1653.7,1066.5 1654.0,1073.0 1654.4,1054.6 1654.7,1097.8 1655.1,1046.9 1655.5,1060.3 1655.8,1065.2 1656.2,1059.4 1656.5,1038.1 1656.9,1060.8 1657.3,1041.5 1657.6,1057.0 1658.0,1070.6 1658.3,1075.0 1658.7,1059.7 1659.1,1050.8 1659.4,1102.1 1659.8,1058.0 1660.1,1095.6 1660.5,1045.0 1660.9,1064.8 1661.2,1091.2 1661.6,1043.0 1661.9,1036.9 1662.3,1079.2 1662.7,1091.2 1663.0,1076.3 1663.4,1069.1 1663.7,1050.1 1664.1,1067.3 1664.5,1077.4 1664.8,1052.9 1665.2,1028.5 1665.5,1082.1 1665.9,1037.4 1666.3,1034.1 1666.6,1051.1 1667.0,1081.6 1667.3,1035.0 1667.7,1061.0 1668.1,1096.6 1668.4,1068.1 1668.8,1039.3 1669.1,1044.4 1669.5,1029.8 1669.9,1087.2 1670.2,1034.0 1670.6,1062.8 1670.9,1079.2 1671.3,1048.6 1671.7,1056.1 1672.0,1080.1 1672.4,1062.5 1672.7,1083.8 1673.1,1082.3 1673.5,1089.3 1673.8,1032.4 1674.2,1066.2 1674.5,1061.7 1674.9,1056.5 1675.3,1026.8 1675.6,1057.1 1676.0,1148.6 1676.3,1079.0 1676.7,1046.4 1677.1,1058.0 1677.4,1057.9 1677.8,1076.0 1678.1,1046.7 1678.5,1047.5 1678.9,1032.3 1679.2,1053.0 1679.6,1097.1 1679.9,1068.0 1680.3,1072.0 1680.7,1075.9 1681.0,1038.0 1681.4,1072.3 1681.7,1090.0 1682.1,1065.1 1682.5,1110.7 1682.8,1045.4 1683.2,1047.1 1683.5,1083.6 1683.9,1048.4 1684.3,1052.8 1684.6,1065.0 1685.0,1054.7 1685.3,986.5 1685.7,1068.9 1686.1,1045.5 1686.4,1052.0 1686.8,1082.9 1687.1,1074.5 1687.5,1017.6 1687.9,1038.4 1688.2,1075.4 1688.6,1042.3 1688.9,1076.2 1689.3,1089.3 1689.7,1081.1 1690.0,1111.4 1690.4,1035.0 1690.7,1043.0 1691.1,1050.8 1691.5,1051.3 1691.8,1093.7 1692.2,1070.0 1692.5,1044.5 1692.9,1051.9 1693.3,1036.8 1693.6,1053.7 1694.0,1034.3 1694.3,1098.1 1694.7,1077.0 1695.1,1054.1 1695.4,1058.1 1695.8,1076.7 1696.1,1060.8 1696.5,1086.0 1696.9,1064.5 1697.2,1106.8 1697.6,1074.4 1697.9,1039.4 1698.3,1041.1 1698.7,1050.7 1699.0,1096.2 1699.4,1054.9 1699.7,1079.6 1700.1,1032.9 1700.5,1071.7 1700.8,1039.8 1701.2,1051.8 1701.5,1061.0 1701.9,1033.5 1702.3,1107.5 1702.6,1038.8 1703.0,1051.2 1703.3,1094.7 1703.7,1079.7 1704.1,1012.9 1704.4,1069.4 1704.8,1082.3 1705.1,1041.0 1705.5,1061.2 1705.9,1046.5 1706.2,1046.3 1706.6,1095.4 1706.9,1080.8 1707.3,1044.9 1707.7,1037.0 1708.0,1076.4 1708.4,1066.1 1708.7,1055.1 1709.1,1066.3 1709.5,1035.6 1709.8,1046.7 1710.2,1046.9 1710.5,1086.1 1710.9,1061.2 1711.3,1041.6 1711.6,1046.9 1712.0,1083.1 1712.3,1068.8 1712.7,1051.1 1713.1,1054.7 1713.4,1076.4 1713.8,1055.8 1714.1,1056.9 1714.5,1048.2 1714.9,1013.5 1715.2,1073.5 1715.6,1058.5 1715.9,1078.1 1716.3,1123.3 1716.7,1054.9 1717.0,1073.4 1717.4,1054.5 1717.7,1047.0 1718.2,1092.5 1718.6,1014.2 1718.9,1015.2 1719.3,1039.9 1719.6,1052.9 1719.8,910.0 1720.0,1004.7 1720.0,1354.0 1720.3,1200.0 1720.4,992.6 1720.6,960.0 1720.7,1020.9 1721.1,1010.2 1721.4,1042.2 1721.8,1004.2 1722.2,1070.4 1722.5,1110.0 1722.9,1006.9 1723.2,976.8 1723.6,997.3 1724.0,1007.4 1724.3,1090.6 1724.7,1091.3 1725.0,1082.2 1725.4,1009.1 1725.8,1001.3 1726.1,983.1 1726.5,1017.7 1726.8,1047.1 1727.2,1022.0 1727.6,992.7 1727.9,1073.9 1728.2,1031.4 1728.5,1045.7 1728.9,1072.7 1729.3,1063.6 1729.6,1047.0 1730.0,1055.4 1730.3,1067.2 1730.7,1056.9 1731.1,1070.0 1731.4,1033.5 1731.8,1046.2 1732.1,1105.8 1732.5,1066.9 1732.9,1058.7 1733.2,1097.5 1733.6,1061.4 1733.9,1038.5 1734.3,1035.8 1734.7,1049.7 1735.0,1049.0 1735.4,1027.4 1735.7,1053.4 1736.1,1044.4 1736.5,1085.5 1736.8,1089.5 1737.2,1044.8 1737.5,1080.6 1737.9,1057.3 1738.3,1022.6 1738.6,1060.4 1739.0,1088.5 1739.3,1062.4 1739.7,1049.1 1740.1,1062.4 1740.4,1049.7 1740.8,1072.2 1741.1,1066.4 1741.5,1054.8 1741.9,1076.8 1742.2,1093.7 1742.6,1048.4 1742.9,1086.0 1743.3,1077.2 1743.7,1057.8 1744.0,1062.3 1744.4,1090.0 1744.7,1069.1 1745.1,1080.2 1745.5,1031.3 1745.8,1076.3 1746.2,1028.0 1746.5,1099.7 1746.9,1067.8 1747.3,1078.8 1747.6,1048.7 1748.0,1060.4 1748.3,1040.5 1748.7,1043.0 1749.1,1065.6 1749.4,1054.9 1749.8,1055.8 1750.1,1058.3 1750.5,1088.4 1750.9,1081.3 1751.2,1098.9 1751.6,1057.1 1751.9,1050.4 1752.3,1066.5 1752.7,1076.9 1753.0,1034.2 1753.4,1074.8 1753.7,1056.2 1754.1,1071.5 1754.5,1068.3 1754.8,1056.6 1755.2,1046.5 1755.5,1056.9 1755.9,1083.9 1756.3,1027.7 1756.6,1065.4 1757.0,1058.9 1757.3,1058.1 1757.7,1065.9 1758.1,1070.5 1758.4,1061.9 1758.8,1088.3 1759.1,1056.0 1759.5,1105.7 1759.9,1023.7 1760.2,1094.3 1760.6,1054.6 1760.9,1037.3 1761.3,1043.5 1761.7,1051.5 1762.0,1020.6 1762.4,1059.9 1762.7,1088.1 1763.1,1058.5 1763.5,1055.6 1763.8,1054.5 1764.2,1072.5 1764.5,1062.7 1764.9,1092.5 1765.3,1050.2 1765.6,1054.1 1766.0,1051.8 1766.3,1045.3 1766.7,1052.6 1767.1,1042.9 1767.4,1015.9 1767.8,1025.4 1768.1,1019.3 1768.5,1006.8 1768.9,1042.3 1769.2,1071.3 1769.6,1064.3 1769.9,1025.5 1770.3,1027.3 1770.7,1046.9 1771.0,1041.7 1771.4,1069.4 1771.7,1060.3 1772.1,1062.8 1772.5,1052.3 1772.8,1076.6 1773.2,1061.9 1773.5,1111.3 1773.9,1074.0 1774.3,1062.8 1774.6,1055.1 1775.0,1047.9 1775.3,1039.1 1775.7,1063.4 1776.1,1070.4 1776.4,1091.2 1776.8,1066.3 1777.1,1078.9 1777.5,1066.8 1777.9,1056.3 1778.2,1071.5 1778.6,1072.6 1778.9,1055.8 1779.3,1055.7 1779.7,1058.2 1780.0,1019.5 1780.4,1066.9 1780.7,1032.1 1781.1,1107.0 1781.5,1057.9 1781.8,1066.6 1782.2,1068.3 1782.5,1026.5 1782.9,1114.1 1783.3,1049.0 1783.6,1083.6 1784.0,1088.6 1784.3,1080.4 1784.7,1004.3 1785.1,1038.9 1785.4,1052.8 1785.8,1036.5 1786.1,1060.7 1786.5,1093.2 1786.9,1086.6 1787.2,1053.5 1787.6,1039.6 1787.9,1077.2 1788.3,1076.6 1788.7,1056.3 1789.0,1044.5 1789.4,1093.2 1789.7,1096.2 1790.1,1087.5 1790.5,1078.3 1790.8,1053.6 1791.2,1067.6 1791.5,1039.8 1791.9,1093.3 1792.3,1040.0 1792.6,1046.2 1793.0,1055.9 1793.3,1058.2 1793.7,1091.0 1794.1,1078.2 1794.4,1045.9 1794.8,1068.2 1795.1,1067.5 1795.5,1091.8 1795.9,1028.9 1796.2,1050.5 1796.6,1040.9 1796.9,1065.5 1797.3,1079.9 1797.7,1057.8 1798.0,1105.7 1798.4,1042.5 1798.7,1064.7 1799.1,1048.3 1799.5,1033.5 1799.8,1052.9 1800.2,1062.6 1800.5,1047.7 1800.9,1048.1 1801.3,1060.4 1801.6,1047.8 1802.0,1080.3 1802.3,1073.8 1802.7,1062.8 1803.1,1082.3 1803.4,1016.7 1803.8,1042.2 1804.1,1067.1 1804.5,1043.6 1804.9,1059.0 1805.2,1070.5 1805.6,1064.0 1805.9,1057.8 1806.3,1037.8 1806.7,1088.4 1807.0,1026.7 1807.4,1070.2 1807.7,1060.7 1808.1,1067.7 1808.5,1038.5 1808.8,1062.2 1809.2,1083.3 1809.5,1045.9 1809.9,1051.2 1810.3,1053.8 1810.6,1102.9 1811.0,1084.1 1811.3,1100.6 1811.7,1114.7 1812.1,1056.4 1812.4,1067.7 1812.8,1013.2 1813.1,1063.4 1813.5,1050.8 1813.9,1062.1 1814.2,1063.5 1814.6,1017.1 1814.9,1067.4 1815.3,1051.6 1815.7,1034.8 1816.0,1048.1 1816.4,1076.4 1816.7,1046.7 1817.1,1088.4 1817.5,1070.4 1817.8,1059.4 1818.2,1027.1 1818.5,1051.5 1818.9,1082.0 1819.3,1059.0 1819.6,1064.0 1820.0,1064.5 1820.3,1076.2 1820.7,1074.2 1821.1,1051.8 1821.4,1065.3 1821.8,1055.4 1822.1,1147.2 1822.5,1028.4 1822.9,1054.6 1823.2,1085.4 1823.6,1033.3 1823.9,1045.1 1824.3,1063.1 1824.7,1033.9 1825.0,1060.0 1825.4,1064.7 1825.7,1054.2 1826.1,1062.1 1826.5,1064.5 1826.8,1049.8 1827.2,1063.6 1827.5,1064.0 1827.9,1068.2 1828.3,1073.7 1828.6,1073.9 1829.0,1072.7 1829.3,1064.2 1829.7,1060.6 1830.1,1048.8 1830.4,1072.4 1830.8,1083.9 1831.1,1049.4 1831.5,1071.8 1831.9,1056.6 1832.2,1055.5 1832.6,1038.7 1832.9,1053.7 1833.3,1071.7 1833.7,1069.0 1834.0,1076.0 1834.4,1045.5 1834.7,1014.5 1835.1,1073.4 1835.5,1058.1 1835.8,1072.6 1836.2,1096.2 1836.5,1080.6 1836.9,1016.3 1837.3,1049.0 1837.6,1052.2 1838.0,1091.2 1838.3,1043.6 1838.7,993.9 1839.1,1111.4 1839.4,1022.5 1839.8,1047.4 1840.1,1030.6 1840.5,1036.6 1840.9,1100.1 1841.2,1059.3 1841.6,1055.6 1841.9,1071.2 1842.3,1049.7 1842.7,1057.1 1843.0,1068.7 1843.4,1042.8 1843.7,1061.5 1844.1,1049.5 1844.5,1077.7 1844.8,1083.5 1845.2,1072.4 1845.5,1079.8 1845.9,1049.9 1846.3,1053.0 1846.6,1063.6 1847.0,1053.8 1847.3,1071.6 1847.7,1087.3 1848.1,1034.5 1848.4,1039.7 1848.8,1065.1 1849.1,1107.1 1849.5,1062.3 1849.9,1054.5 1850.2,1064.7 1850.6,1046.1 1850.9,1033.5 1851.3,1112.1 1851.7,1071.0 1852.0,1059.0 1852.4,1059.2 1852.7,1054.3 1853.1,1076.3 1853.5,1076.6 1853.8,1081.6 1854.2,1038.4 1854.5,1054.6 1854.9,1069.1 1855.3,1063.1 1855.6,1030.7 1856.0,1060.2 1856.3,1080.1 1856.7,1017.6 1857.1,1090.9 1857.4,1057.1 1857.8,1089.7 1858.1,1079.4 1858.5,1067.8 1858.9,1058.6 1859.2,1057.0 1859.6,1046.6 1859.9,1063.3 1860.3,1067.0 1860.7,1030.2 1861.0,1048.0 1861.4,1012.8 1861.7,1028.7 1862.1,1044.1 1862.5,1069.3 1862.8,1059.8 1863.2,1061.6 1863.5,1050.3 1863.9,1037.0 1864.3,1066.5 1864.6,1073.4 1865.0,1036.1 1865.3,1053.3 1865.7,1066.9 1866.1,1037.7 1866.4,1043.1 1866.8,1068.2 1867.1,1062.0 1867.5,1078.9 1867.7,1162.0 1868.1,1088.1 1868.4,1090.0 1868.8,1138.6 1869.1,1100.5 1869.2,1209.0 1869.5,1062.7 1869.6,1100.0 1869.9,1068.4 1870.1,812.0 1870.2,1135.6 1870.5,950.0 1870.6,1132.5 1870.9,1082.0 1871.0,1150.0 1871.3,1093.2 1871.7,1089.2 1872.0,1115.2 1872.4,1143.5 1872.7,1107.0 1873.1,1000.0 1873.5,1119.2 1873.8,1129.4 1874.2,1075.6 1874.5,1044.1 1874.9,1036.0 1875.3,1125.9 1875.6,1085.8 1876.0,1134.6 1876.3,1153.7 1876.7,1052.5 1877.1,1086.4 1877.4,1055.6 1877.8,1053.8 1878.3,1056.3 1878.7,1062.2 1879.0,1093.6 1879.4,1021.7 1879.7,1098.6 1880.1,1073.8 1880.5,1056.2 1880.8,1039.4 1881.2,1048.2 1881.5,1069.9 1881.9,1069.9 1882.3,1068.6 1882.6,1028.4 1883.0,1051.5 1883.3,1060.3 1883.7,1056.4 1884.1,1047.9 1884.4,1064.1 1884.8,1086.2 1885.1,1034.4 1885.5,1086.4 1885.9,1041.0 1886.2,1041.4 1886.6,1040.1 1886.9,1077.1 1887.3,1070.8 1887.7,1100.8 1888.0,1044.8 1888.4,1036.7 1888.7,1104.6 1889.1,1072.3 1889.5,1009.9 1889.8,1039.5 1890.2,1062.2 1890.5,1091.1 1890.9,1099.9 1891.3,1039.1 1891.6,1075.0 1892.0,1057.0 1892.3,1054.8 1892.7,1052.5 1893.1,1035.9 1893.4,1042.4 1893.8,1053.6 1894.1,1070.3 1894.5,1032.4 1894.9,1090.5 1895.2,1053.3 1895.6,1077.3 1895.9,1041.0 1896.3,1036.5 1896.7,1083.8 1897.0,1072.5 1897.4,1020.9 1897.7,1070.9 1898.1,1027.8 1898.5,1070.0 1898.8,1076.7 1899.2,1060.9 1899.5,1054.1 1899.9,1057.1 1900.3,1059.4 1900.6,1043.8 1901.0,1069.4 1901.3,1048.4 1901.7,1025.5 1902.1,1066.9 1902.4,1096.9 1902.8,1082.3 1903.1,1057.2 1903.5,1045.7 1903.9,1050.2 1904.2,1088.0 1904.6,1076.2 1904.9,1043.4 1905.3,1065.6 1905.7,1091.3 1906.0,1144.2 1906.4,1063.6 1906.7,1049.7 1907.1,1027.0 1907.5,1078.9 1907.8,1074.2 1908.2,1075.8 1908.5,1086.8 1908.9,1059.6 1909.3,1052.9 1909.6,1070.1 1910.0,1036.5 1910.3,1021.6 1910.7,1053.8 1911.1,1048.3 1911.4,1043.3 1911.8,1063.1 1912.1,1075.8 1912.5,1048.1 1912.9,1074.8 1913.2,1026.5 1913.6,1042.5 1913.9,1056.6 1914.3,1060.6 1914.7,1071.0 1915.0,1102.5 1915.4,1040.8 1915.7,1082.0 1916.1,1057.4 1916.5,1064.6 1916.8,1054.5 1917.2,1083.3 1917.5,1078.7 1917.9,1091.9 1918.3,1104.2 1918.6,1034.7 1919.0,1059.9 1919.3,1080.5 1919.7,1082.9 1920.1,1073.7 1920.4,1048.4 1920.8,1104.5 1921.1,1044.2 1921.5,1082.2 1921.9,1054.2 1922.2,1057.1 1922.6,1080.9 1922.9,1045.8 1923.3,1079.0 1923.7,1064.8 1924.0,1025.7 1924.4,1061.3 1924.7,1067.6 1925.1,1076.5 1925.5,1085.2 1925.8,1034.2 1926.2,1029.9 1926.5,1047.0 1926.9,1033.2 1927.3,1102.3 1927.6,1052.6 1928.0,1055.9 1928.3,1053.5 1928.7,1043.8 1929.1,1080.6 1929.4,1064.9 1929.8,1048.0 1930.1,1055.3 1930.5,1070.0 1930.9,1068.0 1931.2,1079.4 1931.6,1087.8 1931.9,1051.5 1932.3,1041.6 1932.7,1051.9 1933.0,1064.3 1933.4,1049.1 1933.7,1068.0 1934.1,1036.5 1934.5,1060.7 1934.8,1068.2 1935.2,1044.1 1935.5,1076.9 1935.9,1095.0 1936.3,998.6 1936.6,1045.1 1937.0,1057.4 1937.3,1076.9 1937.7,1040.5 1938.1,1064.5 1938.4,1090.2 1938.8,1067.2 1939.1,1049.8 1939.5,1046.6 1939.9,1066.1 1940.2,1070.4 1940.6,1068.9 1940.9,1061.4 1941.3,1016.9 1941.7,1044.1 1942.0,1054.6 1942.4,1064.4 1942.7,1071.9 1943.1,1048.1 1943.5,1075.2 1943.8,1092.7 1944.2,1071.2 1944.5,1076.9 1944.9,1052.3 1945.3,1040.5 1945.6,1070.7 1946.0,1068.6 1946.3,1082.2 1946.7,1053.8 1947.1,1039.7 1947.4,1040.0 1947.8,1065.2 1948.1,1020.2 1948.5,1086.6 1948.9,1051.5 1949.2,1059.8 1949.6,1067.3 1949.9,1091.4 1950.3,1033.1 1950.7,1094.0 1951.0,1089.1 1951.4,1083.6 1951.7,1077.1 1952.1,1038.6 1952.5,1027.1 1952.8,1016.2 1953.2,1053.1 1953.5,1069.0 1953.9,1062.4 1954.3,1051.2 1954.6,1069.3 1955.0,1030.7 1955.3,1084.5 1955.7,1088.8 1956.1,1083.7 1956.4,1071.7 1956.8,1094.3 1957.1,1030.8 1957.5,1038.4 1957.9,1059.8 1958.2,1059.4 1958.6,1052.7 1958.9,1069.6 1959.3,1053.0 1959.7,1091.9 1960.0,1060.7 1960.4,1012.1 1960.7,1050.9 1961.1,1045.1 1961.5,1030.2 1961.8,1078.3 1962.2,1039.6 1962.5,1022.1 1962.9,1051.0 1963.3,1095.6 1963.6,1060.2 1964.0,1097.0 1964.3,1072.7 1964.7,1096.2 1965.1,1073.1 1965.4,1148.6 1965.8,1000.4 1966.1,1031.6 1966.5,1031.4 1966.9,1053.0 1967.2,1078.0 1967.6,1073.6 1967.9,1078.8 1968.3,1020.3 1968.7,1038.3 1969.0,1054.6 1969.4,1068.1 1969.7,1061.4 1970.1,1040.3 1970.5,1029.0 1970.8,1077.9 1971.2,1038.3 1971.5,1054.9 1971.9,1058.5 1972.3,1067.6 1972.6,1043.3 1973.0,1034.3 1973.3,1054.4 1973.7,1040.8 1974.1,1061.3 1974.4,1028.0 1974.8,1050.4 1975.1,1033.0 1975.5,1101.7 1975.9,1022.2 1976.2,1047.9 1976.6,1051.9 1976.9,1047.0 1977.3,1032.6 1977.7,1039.1 1978.0,1054.7 1978.4,1088.5 1978.7,1085.2 1979.1,1148.6 1979.5,1049.4 1979.8,1063.9 1980.2,1087.0 1980.5,1072.0 1980.9,1065.7 1981.3,1063.3 1981.6,1078.6 1982.0,1050.5 1982.3,1067.7 1982.7,1044.9 1983.1,1076.7 1983.4,1072.7 1983.8,1060.8 1984.1,1034.1 1984.5,1058.6 1984.9,1127.6 1985.2,1049.6 1985.6,1067.4 1985.9,1024.9 1986.3,1038.8 1986.7,1059.6 1987.0,1078.6 1987.4,1077.0 1987.7,1047.9 1988.1,1098.7 1988.5,1003.5 1988.8,1026.7 1989.2,1081.9 1989.5,1086.3 1989.9,1107.6 1990.3,1042.1 1990.6,1031.2 1991.0,1029.7 1991.3,1040.1 1991.7,1068.6 1992.1,1065.6 1992.4,1051.6 1992.8,1072.4 1993.1,1055.3 1993.5,1063.2 1993.9,1089.8 1994.2,1045.3 1994.6,1061.6 1994.9,1043.9 1995.3,1074.6 1995.7,1035.8 1996.0,1040.6 1996.4,1073.1 1996.7,1018.4 1997.1,1096.7 1997.5,1107.1 1997.8,1063.9 1998.2,1052.4 1998.5,1070.0 1998.9,1067.9 1999.3,1072.0 1999.6,1062.6 2000.0,1042.3 2000.3,1049.3 2000.7,1059.3 2001.1,1061.3 2001.4,1053.7 2001.8,1057.9 2002.1,1058.4 2002.5,1053.5 2002.9,1091.2 2003.2,1088.6 2003.6,1042.0 2003.9,1016.4 2004.3,1076.3 2004.7,1097.3 2005.0,1055.6 2005.4,1067.9 2005.7,1060.9 2006.1,1067.1 2006.5,1050.3 2006.8,1060.1 2007.2,1055.8 2007.5,1054.9 2007.9,1064.0 2008.3,1032.9 2008.6,1082.7 2009.0,1062.6 2009.3,1064.7 2009.7,1046.5 2010.1,993.8 2010.4,1058.3 2010.8,1051.1 2011.1,1012.1 2011.5,1083.6 2011.9,1112.6 2012.2,1054.6 2012.6,1069.9 2012.9,1090.1 2013.3,1072.9 2013.7,1003.2 2014.0,1085.1 2014.4,1023.3 2014.7,1050.8 2015.1,1091.7 2015.5,1043.7 2015.8,1029.7 2016.2,1057.5 2016.5,1053.8 2016.9,1016.7 2017.3,1089.1 2017.6,1058.8 2018.0,1056.1 2018.3,1060.6 2018.7,1061.5 2019.1,1086.3 2019.4,1055.1 2019.8,1046.7 2020.1,1068.6 2020.5,1065.0 2020.9,1073.0 2021.2,1041.7 2021.6,1068.8 2021.9,1071.0 2022.3,1038.5 2022.7,1070.0 2023.0,1058.7 2023.4,1088.2 2023.7,1093.4 2024.1,1084.6 2024.5,1036.4 2024.8,1058.6 2025.2,1041.3 2025.5,1049.6 2025.9,1084.9 2026.3,1070.6 2026.6,1053.0 2027.0,1037.5 2027.3,1063.3 2027.7,1086.6 2028.1,1071.2 2028.4,1063.9 2028.8,1064.3 2029.1,1087.1 2029.5,1077.1 2029.9,1063.2 2030.2,1016.9 2030.6,1073.5 2030.9,1063.7 2031.3,1059.1 2031.7,1083.2 2032.0,1043.8 2032.4,1066.2 2032.7,1062.6 2033.1,1030.3 2033.5,1055.7 2033.8,1062.6 2034.2,1082.4 2034.5,1071.1 2034.9,1059.7 2035.3,1075.6 2035.6,1017.0 2036.0,1051.3 2036.3,1044.1 2036.7,1070.5 2037.1,1095.7 2037.4,1074.9 2037.8,1080.2 2038.1,1077.1 2038.5,1093.3 2038.9,1037.2 2039.2,1070.0 2039.6,1042.8 2039.9,1050.2 2040.3,1074.8 2040.7,1077.6 2041.0,1058.1 2041.4,1083.5 2041.7,1060.1 2042.1,1057.9 2042.5,1034.2 2042.8,1061.9 2043.2,1083.9 2043.5,1082.1 2043.9,1052.4 2044.3,1055.6 2044.6,1050.6 2045.0,1071.4 2045.3,1067.5 2045.7,1020.8 2046.1,1038.2 2046.4,1066.2 2046.8,1048.2 2047.1,1039.4 2047.5,1061.3 2047.9,1053.7 2048.2,1070.4 2048.6,1097.0 2048.9,1059.9 2049.3,1071.1 2049.7,1066.5 2050.0,1059.2 2050.4,1044.3 2050.7,1080.2 2051.1,1079.0 2051.5,1081.4 2051.8,1062.2 2052.2,1041.0 2052.5,1064.8 2052.9,1077.9 2053.3,1061.3 2053.6,1082.9 2054.0,1040.4 2054.3,1072.0 2054.7,1022.4 2055.1,1044.6 2055.4,1039.4 2055.8,1072.8 2056.1,1048.6 2056.5,1060.8 2056.9,1078.0 2057.2,1048.5 2057.6,1079.0 2057.9,1041.8 2058.3,1086.8 2058.7,1041.1 2059.0,1037.0 2059.4,1069.0 2059.7,1088.3 2060.1,1025.0 2060.5,1080.4 2060.8,1084.2 2061.2,1067.8 2061.5,1033.0 2061.9,1040.2 2062.3,1070.2 2062.6,1016.2 2063.0,1082.6 2063.3,1095.9 2063.7,1077.4 2064.1,1037.2 2064.4,1074.7 2064.8,1046.4 2065.1,1074.1 2065.5,1051.4 2065.9,1050.2 2066.2,1057.9 2066.6,1073.9 2066.9,1072.9 2067.3,1059.4 2067.7,1088.7 2068.0,1091.7 2068.4,1076.7 2068.7,1032.4 2069.1,1047.4 2069.5,1086.1 2069.8,1071.1 2070.2,1087.5 2070.5,1048.3 2070.9,1086.0 2071.3,1036.4 2071.6,1067.1 2072.0,1051.8 2072.3,1055.4 2072.7,1085.8 2073.1,1053.0 2073.4,1062.6 2073.8,1095.9 2074.1,1066.0 2074.5,1032.6 2074.9,1038.7 2075.2,1050.7 2075.6,1065.5 2075.9,1066.4 2076.3,1025.9 2076.7,1037.5 2077.0,1034.4 2077.4,1060.1 2077.7,1068.2 2078.1,1041.2 2078.5,1070.7 2078.8,1056.7 2079.2,1062.3 2079.5,1090.2 2079.9,1076.5 2080.3,1049.8 2080.6,1053.8 2081.0,1083.7 2081.3,1060.0 2081.7,1046.9 2082.1,1069.7 2082.4,1035.3 2082.8,1065.3 2083.1,1050.8 2083.5,1067.6 2083.9,1105.2 2084.2,1065.9 2084.6,1039.6 2084.9,1026.7 2085.3,1063.5 2085.7,1055.3 2086.0,1033.8 2086.4,1049.6 2086.7,1060.4 2087.1,1038.1 2087.5,1057.3 2087.8,1070.1 2088.2,1046.3 2088.5,1087.1 2088.9,1043.0 2089.3,1038.2 2089.6,1082.0 2090.0,1052.0 2090.3,1046.2 2090.7,1042.1 2091.1,1069.1 2091.4,1047.5 2091.8,1050.8 2092.1,1008.5 2092.5,1032.9 2092.9,1052.4 2093.2,1032.3 2093.6,1050.6 2093.9,1081.5 2094.3,1062.3 2094.7,1081.4 2095.0,1040.9 2095.4,1071.9 2095.7,1051.5 2096.1,1075.0 2096.5,1038.2 2096.8,1062.4 2097.2,1079.0 2097.5,1063.9 2097.9,1065.6 2098.3,1054.5 2098.6,1013.4 2099.0,1043.4 2099.3,1045.4 2099.7,1078.2 2100.1,1062.6 2100.4,1040.4 2100.8,1078.4 2101.1,1068.2 2101.5,1028.5 2101.9,1085.9 2102.2,1068.1 2102.6,1115.2 2102.9,1081.1 2103.3,1018.2 2103.7,1082.8 2104.0,1064.7 2104.4,1052.6 2104.7,1066.6 2105.1,1073.0 2105.5,1053.4 2105.8,1042.1 2106.2,1072.5 2106.5,1067.5 2106.9,1037.2 2107.3,1085.8 2107.6,1055.0 2108.0,1097.3 2108.3,1089.3 2108.7,1057.4 2109.1,1076.2 2109.4,1040.2 2109.8,1063.9 2110.1,1023.4 2110.5,1038.3 2110.9,1059.0 2111.2,1072.3 2111.6,1077.2 2111.9,1082.8 2112.3,1080.3 2112.7,1051.1 2113.0,1014.2 2113.4,1047.7 2113.7,1060.8 2114.1,1025.1 2114.5,1044.2 2114.8,1088.0 2115.2,1063.5 2115.5,1046.7 2115.9,1058.1 2116.3,1065.6 2116.6,1059.1 2117.0,1052.8 2117.3,1040.0 2117.7,1059.5 2118.1,1062.4 2118.4,1060.7 2118.8,1078.2 2119.1,1060.5 2119.5,1034.9 2119.9,1085.5 2120.2,1070.0 2120.6,1019.9 2120.9,1058.8 2121.3,1039.9 2121.7,1044.9 2122.0,1079.2 2122.4,1092.1 2122.7,1068.8 2123.1,972.6 2123.5,1050.6 2123.8,1053.9 2124.2,1050.4 2124.5,1092.2 2124.9,1069.7 2125.3,1073.8 2125.6,1061.5 2126.0,1078.1 2126.3,1057.0 2126.7,1034.0 2127.1,1015.5 2127.4,1107.8 2127.8,1029.5 2128.1,1020.8 2128.5,1048.2 2128.9,1054.7 2129.2,1096.6 2129.6,1047.4 2129.9,1045.5 2130.3,1058.3 2130.7,1076.1 2131.0,994.5 2131.4,1054.7 2131.7,1085.5 2132.1,1093.0 2132.5,1044.5 2132.8,1025.2 2133.2,1056.9 2133.5,1055.2 2133.9,1081.5 2134.3,1077.7 2134.6,1060.9 2135.0,1042.6 2135.3,1101.0 2135.7,1042.4 2136.1,1040.7 2136.4,1058.8 2136.8,1099.9 2137.1,1096.1 2137.5,1089.5 2137.9,1027.1 2138.2,1072.5 2138.6,1044.3 2138.9,1069.7 2139.3,1078.0 2139.7,1074.2 2140.0,1046.5 2140.4,1039.4 2140.7,1074.4 2141.1,1085.6 2141.5,1044.7 2141.8,1042.2 2142.2,1057.4 2142.5,1048.6 2142.9,1079.8 2143.3,1081.6 2143.6,1077.0 2144.0,1047.6 2144.3,1042.1 2144.7,1053.5 2145.1,1062.8 2145.4,1077.7 2145.8,1069.0 2146.1,1053.3 2146.5,1072.2 2146.9,1076.8 2147.2,1058.0 2147.6,1040.6 2147.9,1070.3 2148.3,1080.4 2148.7,1074.9 2149.0,1039.7 2149.4,1069.6 2149.7,1062.9 2150.1,1056.1 2150.5,1057.9 2150.8,1049.9 2151.2,1047.3 2151.5,1067.1 2151.9,1060.8 2152.3,1063.4 2152.6,1037.4 2153.0,1065.5 2153.3,1093.3 2153.7,1039.3 2154.1,1062.9 2154.4,1060.8 2154.8,1066.6 2155.1,1075.9 2155.5,1048.9 2155.9,1079.0 2156.2,1074.6 2156.6,1055.1 2156.9,1074.1 2157.3,1086.0 2157.7,1090.4 2158.0,1057.5 2158.4,1078.7 2158.7,1061.7 2159.1,1046.2 2159.5,1110.5 2159.8,1083.7 2160.2,1078.3 2160.5,1057.2 2160.9,1067.2 2161.3,1053.7 2161.6,1101.3 2162.0,1051.8 2162.3,1063.9 2162.7,1080.7 2163.1,1060.4 2163.4,1081.4 2163.8,1068.2 2164.1,1061.3 2164.5,1062.8 2164.9,1022.5 2165.2,1093.8 2165.6,1074.6 2165.9,1070.1 2166.3,1066.0 2166.7,1041.8 2167.0,1063.6 2167.4,1043.6 2167.7,1050.5 2168.1,1038.0 2168.5,1054.2 2168.8,1082.1 2169.2,1070.4 2169.5,1043.0 2169.9,1043.9 2170.3,1083.1 2170.6,1056.4 2171.0,1078.5 2171.3,1094.4 2171.7,1081.6 2172.1,1040.0 2172.4,1016.0 2172.8,1093.2 2173.1,1033.9 2173.5,1032.7 2173.9,1050.2 2174.2,1054.1 2174.6,1073.0 2174.9,1047.5 2175.3,1043.3 2175.7,1077.8 2176.0,1041.8 2176.4,1115.5 2176.7,1033.2 2177.1,1062.5 2177.5,1084.5 2177.8,1061.7 2178.2,1028.8 2178.5,1060.6 2178.9,1082.9 2179.3,1046.7 2179.6,1028.9 2180.0,1060.3 2180.3,1018.6 2180.7,1070.1 2181.1,1076.0 2181.4,1064.2 2181.8,1038.3 2182.1,1083.2 2182.5,1088.7 2182.9,1084.9 2183.2,1053.5 2183.6,1071.7 2183.9,1047.6 2184.3,1086.0 2184.7,1052.8 2185.0,1037.2 2185.4,1057.1 2185.7,1072.5 2186.1,1048.9 2186.5,1058.1 2186.8,1042.1 2187.2,1063.0 2187.5,1059.5 2187.9,1062.7 2188.3,1058.1 2188.6,1059.7 2189.0,1044.7 2189.3,1097.2 2189.7,1028.8 2190.1,1065.6 2190.4,1084.2 2190.8,1026.6 2191.1,1027.6 2191.5,1075.5 2191.9,1112.0 2192.2,1082.3 2192.6,1053.1 2192.9,1050.1 2193.3,1049.3 2193.7,1035.4 2194.0,1048.2 2194.4,1078.3 2194.7,1054.4 2195.1,1068.0 2195.5,1076.7 2195.8,1047.6 2196.2,1053.2 2196.5,1064.3 2196.9,1044.7 2197.3,1062.6 2197.6,1073.2 2198.0,1061.3 2198.3,1028.0 2198.7,1066.1 2199.1,1056.8 2199.4,1060.1 2199.8,1037.7 2200.1,1101.5 2200.5,1058.5 2200.9,1049.3 2201.2,1045.5 2201.6,1057.3 2201.9,1023.1 2202.3,1065.2 2202.7,1050.4 2203.0,1080.6 2203.4,1024.3 2203.7,1050.8 2204.1,1066.1 2204.5,1065.5 2204.8,1051.8 2205.2,1079.2 2205.5,1051.1 2205.9,1070.3 2206.3,1059.3 2206.6,1020.8 2207.0,1045.1 2207.3,1046.9 2207.7,1049.4 2208.1,1066.7 2208.4,1031.7 2208.8,1039.8 2209.1,1071.8 2209.5,1062.9 2209.9,1070.9 2210.2,1061.8 2210.6,1092.8 2210.9,1074.5 2211.3,1066.3 2211.7,1069.7 2212.0,1079.4 2212.4,1063.3 2212.7,1074.4 2213.1,1056.4 2213.5,1090.6 2213.8,1057.1 2214.2,997.5 2214.5,1073.0 2214.9,1054.0 2215.3,1057.1 2215.6,1008.2 2216.0,1006.9 2216.3,1025.7 2216.7,1057.3 2217.1,1034.7 2217.4,1072.1 2217.8,1058.3 2218.1,1052.0 2218.5,1076.4 2218.9,1023.2 2219.2,1058.6 2219.6,1077.4 2219.9,1086.5 2220.3,1071.2 2220.7,1089.0 2221.0,1068.4 2221.4,1058.0 2221.7,1066.7 2222.1,1106.9 2222.5,1102.0 2222.8,1068.0 2223.2,1070.3 2223.5,1070.6 2223.9,1033.3 2224.3,1051.2 2224.6,1069.0 2225.0,1046.4 2225.3,1056.8 2225.7,1038.1 2226.1,1058.7 2226.4,1078.6 2226.8,1061.5 2227.1,1075.4 2227.5,1057.3 2227.9,1047.8 2228.2,1062.7 2228.6,1028.2 2228.9,1046.7 2229.3,1054.3 2229.7,1050.1 2230.0,1066.9 2230.4,1046.3 2230.7,1075.2 2231.1,1074.8 2231.5,1062.3 2231.8,1048.5 2232.2,1040.1 2232.5,1071.0 2232.9,1055.5 2233.3,1107.3" fill="none" stroke="#17becf" stroke-width="2" stroke-linejoin="miter" shape-rendering="crispEdges"/><rect x="363.6" y="417.6" width="2.8" height="3.6" fill="#f14cc1" stroke="#111" stroke-width="1"/><rect x="1336.6" y="1059" width="2.8" height="3.6" fill="#17becf" stroke="#111" stroke-width="1"/></svg>
<div style="position:absolute;left:-254.5px;width:600px;text-align:right;top:687.76px;line-height:15.62px;font-size:12.5px;color:#222;font-weight:400;white-space:pre;">-0.4</div>
<div style="position:absolute;left:-254.5px;width:600px;text-align:right;top:550.26px;line-height:15.62px;font-size:12.5px;color:#222;font-weight:400;white-space:pre;">-0.2</div>
<div style="position:absolute;left:-254.5px;width:600px;text-align:right;top:412.76px;line-height:15.62px;font-size:12.5px;color:#222;font-weight:400;white-space:pre;">0</div>
<div style="position:absolute;left:-254.5px;width:600px;text-align:right;top:275.26px;line-height:15.62px;font-size:12.5px;color:#222;font-weight:400;white-space:pre;">0.2</div>
<div style="position:absolute;left:63.39999999999998px;width:600px;text-align:center;top:735.86px;line-height:15.62px;font-size:12.5px;color:#222;font-weight:400;white-space:pre;">0</div>
<div style="position:absolute;left:218.39999999999998px;width:600px;text-align:center;top:735.86px;line-height:15.62px;font-size:12.5px;color:#222;font-weight:400;white-space:pre;">10</div>
<div style="position:absolute;left:373.4px;width:600px;text-align:center;top:735.86px;line-height:15.62px;font-size:12.5px;color:#222;font-weight:400;white-space:pre;">20</div>
<div style="position:absolute;left:528.4px;width:600px;text-align:center;top:735.86px;line-height:15.62px;font-size:12.5px;color:#222;font-weight:400;white-space:pre;">30</div>
<div style="position:absolute;left:683.4px;width:600px;text-align:center;top:735.86px;line-height:15.62px;font-size:12.5px;color:#222;font-weight:400;white-space:pre;">40</div>
<div style="position:absolute;left:838.4000000000001px;width:600px;text-align:center;top:735.86px;line-height:15.62px;font-size:12.5px;color:#222;font-weight:400;white-space:pre;">50</div>
<div style="position:absolute;left:715.3px;width:600px;text-align:right;top:681.56px;line-height:15.62px;font-size:12.5px;color:#222;font-weight:400;white-space:pre;">0.71</div>
<div style="position:absolute;left:715.3px;width:600px;text-align:right;top:552.81px;line-height:15.62px;font-size:12.5px;color:#222;font-weight:400;white-space:pre;">0.72</div>
<div style="position:absolute;left:715.3px;width:600px;text-align:right;top:424.06px;line-height:15.62px;font-size:12.5px;color:#222;font-weight:400;white-space:pre;">0.73</div>
<div style="position:absolute;left:715.3px;width:600px;text-align:right;top:295.31px;line-height:15.62px;font-size:12.5px;color:#222;font-weight:400;white-space:pre;">0.74</div>
<div style="position:absolute;left:715.3px;width:600px;text-align:right;top:166.56px;line-height:15.62px;font-size:12.5px;color:#222;font-weight:400;white-space:pre;">0.75</div>
<div style="position:absolute;left:1033.5px;width:600px;text-align:center;top:735.86px;line-height:15.62px;font-size:12.5px;color:#222;font-weight:400;white-space:pre;">0</div>
<div style="position:absolute;left:1188.3px;width:600px;text-align:center;top:735.86px;line-height:15.62px;font-size:12.5px;color:#222;font-weight:400;white-space:pre;">10</div>
<div style="position:absolute;left:1343.1px;width:600px;text-align:center;top:735.86px;line-height:15.62px;font-size:12.5px;color:#222;font-weight:400;white-space:pre;">20</div>
<div style="position:absolute;left:1497.9px;width:600px;text-align:center;top:735.86px;line-height:15.62px;font-size:12.5px;color:#222;font-weight:400;white-space:pre;">30</div>
<div style="position:absolute;left:1652.7px;width:600px;text-align:center;top:735.86px;line-height:15.62px;font-size:12.5px;color:#222;font-weight:400;white-space:pre;">40</div>
<div style="position:absolute;left:1807.5px;width:600px;text-align:center;top:735.86px;line-height:15.62px;font-size:12.5px;color:#222;font-weight:400;white-space:pre;">50</div>
<div style="position:absolute;left:-247.60000000000002px;width:600px;text-align:right;top:1310.86px;line-height:15.62px;font-size:12.5px;color:#222;font-weight:400;white-space:pre;">-0.12</div>
<div style="position:absolute;left:-247.60000000000002px;width:600px;text-align:right;top:1198.28px;line-height:15.62px;font-size:12.5px;color:#222;font-weight:400;white-space:pre;">-0.1</div>
<div style="position:absolute;left:-247.60000000000002px;width:600px;text-align:right;top:1085.71px;line-height:15.62px;font-size:12.5px;color:#222;font-weight:400;white-space:pre;">-0.08</div>
<div style="position:absolute;left:-247.60000000000002px;width:600px;text-align:right;top:973.13px;line-height:15.62px;font-size:12.5px;color:#222;font-weight:400;white-space:pre;">-0.06</div>
<div style="position:absolute;left:-247.60000000000002px;width:600px;text-align:right;top:860.56px;line-height:15.62px;font-size:12.5px;color:#222;font-weight:400;white-space:pre;">-0.04</div>
<div style="position:absolute;left:70.30000000000001px;width:600px;text-align:center;top:1384.76px;line-height:15.62px;font-size:12.5px;color:#222;font-weight:400;white-space:pre;">0</div>
<div style="position:absolute;left:224.39999999999998px;width:600px;text-align:center;top:1384.76px;line-height:15.62px;font-size:12.5px;color:#222;font-weight:400;white-space:pre;">10</div>
<div style="position:absolute;left:378.5px;width:600px;text-align:center;top:1384.76px;line-height:15.62px;font-size:12.5px;color:#222;font-weight:400;white-space:pre;">20</div>
<div style="position:absolute;left:532.6px;width:600px;text-align:center;top:1384.76px;line-height:15.62px;font-size:12.5px;color:#222;font-weight:400;white-space:pre;">30</div>
<div style="position:absolute;left:686.7px;width:600px;text-align:center;top:1384.76px;line-height:15.62px;font-size:12.5px;color:#222;font-weight:400;white-space:pre;">40</div>
<div style="position:absolute;left:840.8px;width:600px;text-align:center;top:1384.76px;line-height:15.62px;font-size:12.5px;color:#222;font-weight:400;white-space:pre;">50</div>
<div style="position:absolute;left:718.5999999999999px;width:600px;text-align:right;top:1357.92px;line-height:15.62px;font-size:12.5px;color:#222;font-weight:400;white-space:pre;">-0.03</div>
<div style="position:absolute;left:718.5999999999999px;width:600px;text-align:right;top:1256.60px;line-height:15.62px;font-size:12.5px;color:#222;font-weight:400;white-space:pre;">-0.02</div>
<div style="position:absolute;left:718.5999999999999px;width:600px;text-align:right;top:1155.28px;line-height:15.62px;font-size:12.5px;color:#222;font-weight:400;white-space:pre;">-0.01</div>
<div style="position:absolute;left:718.5999999999999px;width:600px;text-align:right;top:1053.96px;line-height:15.62px;font-size:12.5px;color:#222;font-weight:400;white-space:pre;">0</div>
<div style="position:absolute;left:718.5999999999999px;width:600px;text-align:right;top:952.64px;line-height:15.62px;font-size:12.5px;color:#222;font-weight:400;white-space:pre;">0.01</div>
<div style="position:absolute;left:718.5999999999999px;width:600px;text-align:right;top:851.32px;line-height:15.62px;font-size:12.5px;color:#222;font-weight:400;white-space:pre;">0.02</div>
<div style="position:absolute;left:1036.4px;width:600px;text-align:center;top:1384.76px;line-height:15.62px;font-size:12.5px;color:#222;font-weight:400;white-space:pre;">0</div>
<div style="position:absolute;left:1190.7px;width:600px;text-align:center;top:1384.76px;line-height:15.62px;font-size:12.5px;color:#222;font-weight:400;white-space:pre;">10</div>
<div style="position:absolute;left:1345.0px;width:600px;text-align:center;top:1384.76px;line-height:15.62px;font-size:12.5px;color:#222;font-weight:400;white-space:pre;">20</div>
<div style="position:absolute;left:1499.3000000000002px;width:600px;text-align:center;top:1384.76px;line-height:15.62px;font-size:12.5px;color:#222;font-weight:400;white-space:pre;">30</div>
<div style="position:absolute;left:1653.6000000000001px;width:600px;text-align:center;top:1384.76px;line-height:15.62px;font-size:12.5px;color:#222;font-weight:400;white-space:pre;">40</div>
<div style="position:absolute;left:1807.9px;width:600px;text-align:center;top:1384.76px;line-height:15.62px;font-size:12.5px;color:#222;font-weight:400;white-space:pre;">50</div>
<svg style="position:absolute;left:1246.8px;top:126px;" width="14" height="14" viewBox="0 0 14 14"><path d="M1.8 1.8 L12.2 12.2 M12.2 1.8 L1.8 12.2" stroke="#111" stroke-width="2"/></svg>
<div style="position:absolute;left:447.5px;width:600px;text-align:center;top:126.34px;line-height:15.0px;font-size:12px;color:#222;font-weight:400;white-space:pre;">...</div>
<svg style="position:absolute;left:2213.8px;top:126px;" width="14" height="14" viewBox="0 0 14 14"><path d="M1.8 1.8 L12.2 12.2 M12.2 1.8 L1.8 12.2" stroke="#111" stroke-width="2"/></svg>
<div style="position:absolute;left:1414.5px;width:600px;text-align:center;top:126.34px;line-height:15.0px;font-size:12px;color:#222;font-weight:400;white-space:pre;">...</div>
<svg style="position:absolute;left:1246.8px;top:776px;" width="14" height="14" viewBox="0 0 14 14"><path d="M1.8 1.8 L12.2 12.2 M12.2 1.8 L1.8 12.2" stroke="#111" stroke-width="2"/></svg>
<div style="position:absolute;left:447.5px;width:600px;text-align:center;top:776.34px;line-height:15.0px;font-size:12px;color:#222;font-weight:400;white-space:pre;">...</div>
<svg style="position:absolute;left:2213.8px;top:776px;" width="14" height="14" viewBox="0 0 14 14"><path d="M1.8 1.8 L12.2 12.2 M12.2 1.8 L1.8 12.2" stroke="#111" stroke-width="2"/></svg>
<div style="position:absolute;left:1414.5px;width:600px;text-align:center;top:776.34px;line-height:15.0px;font-size:12px;color:#222;font-weight:400;white-space:pre;">...</div>
<div style="position:absolute;left:1163.3px;top:158.3px;width:94.40000000000009px;height:25.299999999999983px;border:1.5px solid #111;background:#fff"></div>
<div style="position:absolute;left:1168.3px;top:166.3px;width:8px;height:8px;background:#f14cc1"></div>
<div style="position:absolute;left:1177.3px;top:163.48px;line-height:16.5px;font-size:13.2px;color:#222;font-weight:400;white-space:pre;">/command/x</div>
<svg style="position:absolute;left:1252.2px;top:151.8px;" width="11" height="11" viewBox="0 0 11 11"><circle cx="5.5" cy="5.5" r="4.3" fill="#fff" stroke="#111" stroke-width="1.3"/></svg>
<div style="position:absolute;left:2133px;top:158.3px;width:91.5px;height:25.299999999999983px;border:1.5px solid #111;background:#fff"></div>
<div style="position:absolute;left:2138px;top:166.3px;width:8px;height:8px;background:#bcbd22"></div>
<div style="position:absolute;left:2147px;top:163.48px;line-height:16.5px;font-size:13.2px;color:#222;font-weight:400;white-space:pre;">/command/f</div>
<svg style="position:absolute;left:2219.0px;top:151.8px;" width="11" height="11" viewBox="0 0 11 11"><circle cx="5.5" cy="5.5" r="4.3" fill="#fff" stroke="#111" stroke-width="1.3"/></svg>
<div style="position:absolute;left:1164px;top:808.3px;width:93.70000000000005px;height:25.300000000000068px;border:1.5px solid #111;background:#fff"></div>
<div style="position:absolute;left:1169px;top:816.3px;width:8px;height:8px;background:#9467bd"></div>
<div style="position:absolute;left:1178px;top:813.48px;line-height:16.5px;font-size:13.2px;color:#222;font-weight:400;white-space:pre;">/command/y</div>
<svg style="position:absolute;left:1252.2px;top:801.8px;" width="11" height="11" viewBox="0 0 11 11"><circle cx="5.5" cy="5.5" r="4.3" fill="#fff" stroke="#111" stroke-width="1.3"/></svg>
<div style="position:absolute;left:2132.5px;top:808.3px;width:92.0px;height:25.300000000000068px;border:1.5px solid #111;background:#fff"></div>
<div style="position:absolute;left:2137.5px;top:816.3px;width:8px;height:8px;background:#17becf"></div>
<div style="position:absolute;left:2146.5px;top:813.48px;line-height:16.5px;font-size:13.2px;color:#222;font-weight:400;white-space:pre;">/command/z</div>
<svg style="position:absolute;left:2219.0px;top:801.8px;" width="11" height="11" viewBox="0 0 11 11"><circle cx="5.5" cy="5.5" r="4.3" fill="#fff" stroke="#111" stroke-width="1.3"/></svg>
<svg style="position:absolute;left:1980px;top:73px;" width="28" height="28" viewBox="0 0 28 28"><g fill="none" stroke="#1a1a1a" stroke-width="2.2"><path d="M14 3 V11 M14 17 V25 M3 14 H11 M17 14 H25"/><path d="M10.5 6.5 L14 3 L17.5 6.5 M10.5 21.5 L14 25 L17.5 21.5 M6.5 10.5 L3 14 L6.5 17.5 M21.5 10.5 L25 14 L21.5 17.5"/></g></svg>
<svg style="position:absolute;left:2014px;top:73px;" width="28" height="28" viewBox="0 0 28 28"><rect x="2" y="1" width="25.5" height="25.5" fill="#fff"/><path d="M1.8 1 V26.8 H27.5" fill="none" stroke="#111" stroke-width="1.6"/><path d="M4 18 Q8 19 12 17 L16.5 16.5 L26 11" fill="none" stroke="#333" stroke-width="1.4"/><path d="M4 24.5 L12 20 L16.5 22.5 L26 14.5" fill="none" stroke="#222" stroke-width="1.4"/><rect x="12.3" y="1" width="1.8" height="26" fill="#ff22ee"/><text x="15.5" y="9.8" font-family="Liberation Sans" font-weight="700" font-size="10" fill="#ff22ee">1</text></svg>
<svg style="position:absolute;left:2047px;top:75px;" width="30" height="24" viewBox="0 0 30 24"><rect x="2.5" y="2" width="24.5" height="19.5" rx="4" fill="none" stroke="#1a1a1a" stroke-width="2"/><g fill="#1a1a1a"><rect x="6.3" y="6.3" width="1.8" height="1.8"/><rect x="6.3" y="10.8" width="1.8" height="1.8"/><rect x="6.3" y="15" width="1.8" height="1.8"/></g><g stroke="#1a1a1a" stroke-width="1.6"><path d="M10 7.2 H23 M10 11.7 H23 M10 15.9 H23"/></g></svg>
<svg style="position:absolute;left:2083px;top:74px;" width="28" height="28" viewBox="0 0 28 28"><rect x="2.5" y="3" width="15.5" height="17" fill="none" stroke="#1a1a1a" stroke-width="1.5"/><rect x="2.5" y="3" width="15.5" height="3.5" fill="#1a1a1a"/><path d="M5 1.5 V4 M15.5 1.5 V4" stroke="#1a1a1a" stroke-width="1.5"/><g fill="#444"><rect x="4.5" y="9" width="2" height="2"/><rect x="8" y="9" width="2" height="2"/><rect x="11.5" y="9" width="2" height="2"/><rect x="4.5" y="12.5" width="2" height="2"/><rect x="8" y="12.5" width="2" height="2"/><rect x="4.5" y="16" width="2" height="2"/></g><circle cx="18.5" cy="18.5" r="6.5" fill="#dedede" stroke="#1a1a1a" stroke-width="1.6"/><path d="M18.5 14.5 V19 L22 20.5" fill="none" stroke="#1a1a1a" stroke-width="1.6"/></svg>
<svg style="position:absolute;left:2117px;top:74px;" width="26" height="26" viewBox="0 0 26 26"><rect x="1.5" y="1.5" width="23" height="23" rx="2.5" fill="none" stroke="#555" stroke-width="1.3"/><g stroke="#555" stroke-width="1.1"><path d="M7.3 1.5 V24.5 M13 1.5 V24.5 M18.8 1.5 V24.5 M1.5 7.3 H24.5 M1.5 13 H24.5 M1.5 18.8 H24.5"/></g></svg>
<div style="position:absolute;left:2150px;top:73px;width:28px;height:27.5px;border:2px solid #1a7dff;border-radius:4px"></div>
<svg style="position:absolute;left:2150px;top:73px;" width="28" height="28" viewBox="0 0 28 28"><g fill="none" stroke="#111" stroke-width="2.7" stroke-linecap="round" stroke-linejoin="round"><path d="M15.2 6.4 C18 3.6 22.6 2.8 24.7 5.6 C26.4 8.2 25 10.6 22.4 13.2 L18.4 17 C16.4 18.6 14.3 18 12.9 16.4"/><path d="M14.3 11.6 C11.8 10.6 9.6 11.4 7.6 13.4 L4.6 16.6 C2.6 19 2.6 22 4.6 23.8 C6.6 25.4 9.4 25 11.4 23 L12.9 21.6"/></g></svg>
<div style="position:absolute;left:2184px;top:73px;width:28px;height:27.5px;border:1.3px solid #3a4a55;border-radius:4px"></div>
<svg style="position:absolute;left:2184px;top:73px;" width="28" height="28" viewBox="0 0 28 28"><text x="3.2" y="20.3" font-family="Liberation Sans" font-size="21.5" fill="#7a7a7a">t</text><text x="12.4" y="24.4" font-family="Liberation Sans" font-size="19" fill="#7a7a7a">o</text></svg>
<div style="position:absolute;left:2218px;top:73px;width:28px;height:27.5px;border:2px solid #1a7dff;border-radius:4px"></div>
<div style="position:absolute;left:1932px;width:600px;text-align:center;top:77.68px;line-height:21.25px;font-size:17px;color:#444;font-weight:400;white-space:pre;transform:scaleX(0.82);">1:1</div>
<div style="position:absolute;left:311px;top:1418px;width:100px;height:30px;border:1.3px solid #333;background:#fff"></div>
<div style="position:absolute;left:61px;width:600px;text-align:center;top:1426.37px;line-height:16.25px;font-size:13px;color:#222;font-weight:400;white-space:pre;">58.089</div>
<div style="position:absolute;left:417px;top:1413px;width:1560px;height:40px;background:#ececec"></div>
<svg style="position:absolute;left:418px;top:1422px;" width="26" height="22" viewBox="0 0 26 22"><path d="M12.5 6.9 H16.7 A5.25 5.25 0 0 1 16.7 17.4 H9.2 A5.25 5.25 0 0 1 7.6 7.3" fill="none" stroke="#6a6a6a" stroke-width="2.4"/><path d="M9 6.7 L12.9 2.9 V10.5 Z" fill="#6a6a6a"/></svg>
<svg style="position:absolute;left:457px;top:1423px;" width="18" height="20" viewBox="0 0 18 20"><path d="M1.5 1 L16 10 L1.5 19 Z" fill="#666"/></svg>
<div style="position:absolute;left:494px;top:1428px;width:1484px;height:10px;border:1.5px solid #2f3e4a;border-radius:5px;background:#fff"></div>
<div style="position:absolute;left:485px;top:1425px;width:11px;height:17px;border:1.5px solid #2f3e4a;border-radius:5px;background:#9a9a9a"></div>
<div style="position:absolute;left:1990px;top:1426.76px;line-height:15.75px;font-size:12.6px;color:#111;font-weight:700;white-space:pre;">Speed:</div>
<div style="position:absolute;left:2039px;top:1418px;width:56.5px;height:30px;border:1.3px solid #333;border-radius:3px;background:#fff"></div>
<div style="position:absolute;left:2080.0px;top:1419px;width:14.5px;height:28px;background:#f6f6f6;border-left:1px solid #444"></div>
<div style="position:absolute;left:2080.0px;top:1432.5px;width:14.5px;height:1px;background:#444"></div>
<svg style="position:absolute;left:2082.5px;top:1423px;" width="10" height="20" viewBox="0 0 10 20"><path d="M0.5 5.5 L4.7 1.5 L9 5.5 Z" fill="#888"/><path d="M0.5 14.5 L4.7 18.5 L9 14.5 Z" fill="#888"/></svg>
<div style="position:absolute;left:2047px;top:1426.37px;line-height:16.25px;font-size:13px;color:#333;font-weight:400;white-space:pre;">1.0</div>
<div style="position:absolute;left:2102px;top:1426.76px;line-height:15.75px;font-size:12.6px;color:#111;font-weight:700;white-space:pre;">Step size:</div>
<div style="position:absolute;left:2169px;top:1418px;width:71.5px;height:30px;border:1.3px solid #333;border-radius:3px;background:#fff"></div>
<div style="position:absolute;left:2225.0px;top:1419px;width:14.5px;height:28px;background:#f6f6f6;border-left:1px solid #444"></div>
<div style="position:absolute;left:2225.0px;top:1432.5px;width:14.5px;height:1px;background:#444"></div>
<svg style="position:absolute;left:2227.5px;top:1423px;" width="10" height="20" viewBox="0 0 10 20"><path d="M0.5 5.5 L4.7 1.5 L9 5.5 Z" fill="#888"/><path d="M0.5 14.5 L4.7 18.5 L9 14.5 Z" fill="#888"/></svg>
<div style="position:absolute;left:2177px;top:1426.37px;line-height:16.25px;font-size:13px;color:#333;font-weight:400;white-space:pre;">0.000</div>
</div></body></html>
